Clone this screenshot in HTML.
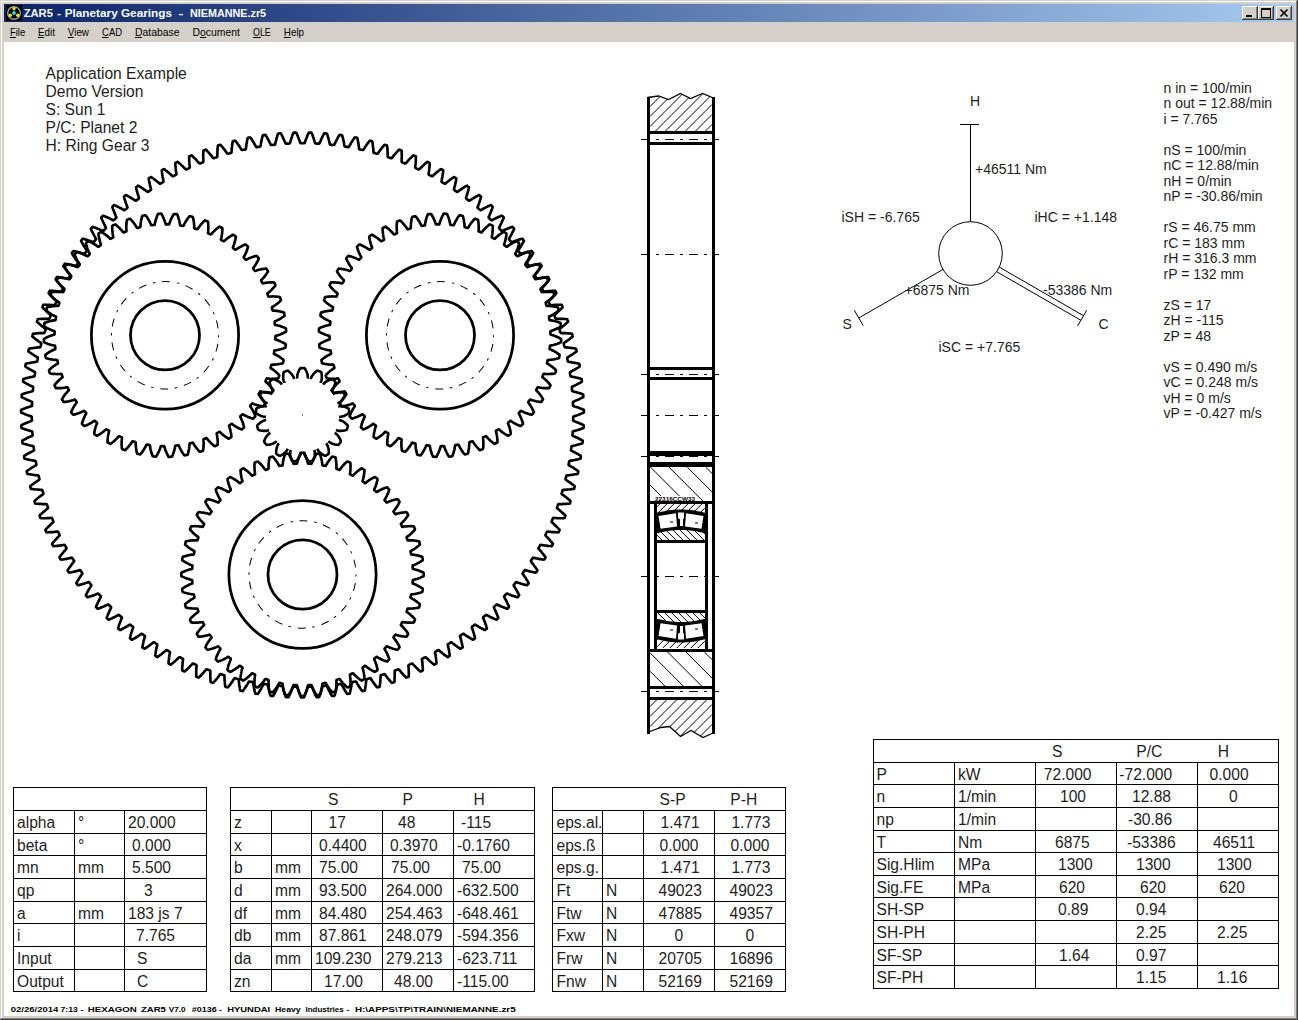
<!DOCTYPE html>
<html><head><meta charset="utf-8"><title>ZAR5 - Planetary Gearings</title><style>
html,body{margin:0;padding:0;}
body{width:1298px;height:1020px;position:relative;overflow:hidden;background:#fff;font-family:"Liberation Sans",sans-serif;}
</style></head><body>
<svg width="1298" height="1020" style="position:absolute;left:0;top:0">
<g font-family="Liberation Sans, sans-serif"><rect x="0" y="0" width="1298" height="1020" fill="#d4d0c8"/>
<rect x="1" y="1" width="1296" height="1" fill="#fff"/><rect x="1" y="1" width="1" height="1018" fill="#fff"/>
<rect x="1296" y="1" width="1" height="1018" fill="#808080"/><rect x="1" y="1018" width="1296" height="1" fill="#808080"/>
<rect x="1297" y="0" width="1" height="1020" fill="#404040"/><rect x="0" y="1019" width="1298" height="1" fill="#404040"/>
<defs><linearGradient id="tg" x1="0" x2="1" y1="0" y2="0"><stop offset="0" stop-color="#0a246a"/><stop offset="1" stop-color="#a6caf0"/></linearGradient></defs>
<rect x="4" y="4" width="1290" height="18" fill="url(#tg)"/>
<rect x="4" y="42" width="1290" height="974" fill="#fff"/>
<g transform="translate(6,5)"><rect width="16" height="16" fill="#000"/><circle cx="8" cy="8" r="6.3" fill="none" stroke="#a0a0a0" stroke-width="1.4"/><circle cx="8" cy="3.8" r="1.7" fill="#e8e800"/><circle cx="4.3" cy="10.2" r="1.7" fill="#e8e800"/><circle cx="11.7" cy="10.2" r="1.7" fill="#e8e800"/><circle cx="8" cy="8" r="1.9" fill="#20d8f8"/></g>
<text x="23.7" y="16.5" font-size="11.5" font-weight="bold" fill="#fff" textLength="29.2" lengthAdjust="spacingAndGlyphs">ZAR5</text>
<text x="57" y="16.5" font-size="11.5" font-weight="bold" fill="#fff" textLength="4" lengthAdjust="spacingAndGlyphs">-</text>
<text x="64.7" y="16.5" font-size="11.5" font-weight="bold" fill="#fff" textLength="107.3" lengthAdjust="spacingAndGlyphs">Planetary Gearings</text>
<text x="178.5" y="16.5" font-size="11.5" font-weight="bold" fill="#fff" textLength="4.9" lengthAdjust="spacingAndGlyphs">-</text>
<text x="189.9" y="16.5" font-size="11.5" font-weight="bold" fill="#fff" textLength="76.2" lengthAdjust="spacingAndGlyphs">NIEMANNE.zr5</text>
<rect x="1242" y="6" width="16" height="14" fill="#d4d0c8"/>
<rect x="1242" y="6" width="15" height="1" fill="#fff"/><rect x="1242" y="6" width="1" height="13" fill="#fff"/>
<rect x="1242" y="19" width="16" height="1" fill="#404040"/><rect x="1257" y="6" width="1" height="14" fill="#404040"/>
<rect x="1243" y="18" width="14" height="1" fill="#808080"/><rect x="1256" y="7" width="1" height="12" fill="#808080"/>
<rect x="1258" y="6" width="16" height="14" fill="#d4d0c8"/>
<rect x="1258" y="6" width="15" height="1" fill="#fff"/><rect x="1258" y="6" width="1" height="13" fill="#fff"/>
<rect x="1258" y="19" width="16" height="1" fill="#404040"/><rect x="1273" y="6" width="1" height="14" fill="#404040"/>
<rect x="1259" y="18" width="14" height="1" fill="#808080"/><rect x="1272" y="7" width="1" height="12" fill="#808080"/>
<rect x="1276" y="6" width="16" height="14" fill="#d4d0c8"/>
<rect x="1276" y="6" width="15" height="1" fill="#fff"/><rect x="1276" y="6" width="1" height="13" fill="#fff"/>
<rect x="1276" y="19" width="16" height="1" fill="#404040"/><rect x="1291" y="6" width="1" height="14" fill="#404040"/>
<rect x="1277" y="18" width="14" height="1" fill="#808080"/><rect x="1290" y="7" width="1" height="12" fill="#808080"/>
<rect x="1246" y="15" width="6" height="2" fill="#000"/>
<rect x="1261" y="8" width="9" height="9" fill="none" stroke="#000" stroke-width="1" transform="translate(.5,.5)"/><rect x="1261" y="8" width="9" height="2" fill="#000"/>
<path d="M1280.5,9.5 L1287.5,16.5 M1287.5,9.5 L1280.5,16.5" stroke="#000" stroke-width="1.6"/>
<text x="9.9" y="35.5" font-size="11" fill="#000" textLength="15.4" lengthAdjust="spacingAndGlyphs">File</text>
<rect x="9.9" y="37" width="5.9" height="1" fill="#000"/>
<text x="38" y="35.5" font-size="11" fill="#000" textLength="16.9" lengthAdjust="spacingAndGlyphs">Edit</text>
<rect x="38" y="37" width="5.8" height="1" fill="#000"/>
<text x="67.8" y="35.5" font-size="11" fill="#000" textLength="21.2" lengthAdjust="spacingAndGlyphs">View</text>
<rect x="67.8" y="37" width="5.9" height="1" fill="#000"/>
<text x="102.1" y="35.5" font-size="11" fill="#000" textLength="20" lengthAdjust="spacingAndGlyphs">CAD</text>
<rect x="102" y="37" width="6.5" height="1" fill="#000"/>
<text x="135" y="35.5" font-size="11" fill="#000" textLength="44.6" lengthAdjust="spacingAndGlyphs">Database</text>
<rect x="135" y="37" width="6.8" height="1" fill="#000"/>
<text x="192.5" y="35.5" font-size="11" fill="#000" textLength="47.5" lengthAdjust="spacingAndGlyphs">Document</text>
<rect x="200" y="37" width="6.1" height="1" fill="#000"/>
<text x="253" y="35.5" font-size="11" fill="#000" textLength="17.8" lengthAdjust="spacingAndGlyphs">OLE</text>
<rect x="253" y="37" width="7.7" height="1" fill="#000"/>
<text x="283.8" y="35.5" font-size="11" fill="#000" textLength="20.3" lengthAdjust="spacingAndGlyphs">Help</text>
<rect x="283.8" y="37" width="6.8" height="1" fill="#000"/></g>
<g transform="translate(302.5,415) scale(1,1.004) translate(-302.5,-415)"><path d="M302.1,144.3 300.8,144.3 300.3,144 299.9,142.9 299.7,142.2 299.3,141.1 299,140.4 298.6,139.3 298.3,138.6 297.9,137.5 297.6,136.8 297.1,135.8 296.8,135.1 296.3,134 296,133.6 295.4,133.7 295.1,133.7 294.5,133.7 294.2,133.7 293.6,133.7 293.3,134.1 292.9,135.2 292.6,135.9 292.2,137 292,137.7 291.6,138.8 291.3,139.5 291,140.6 290.8,141.3 290.4,142.4 290.2,143.2 289.9,144.2 289.4,144.6 288.1,144.7 287.3,144.7 286,144.8 285.5,144.5 285.1,143.4 284.8,142.7 284.3,141.7 284,141 283.5,139.9 283.2,139.3 282.7,138.2 282.4,137.5 281.9,136.5 281.5,135.8 281,134.8 280.6,134.4 280.1,134.5 279.7,134.5 279.2,134.5 278.8,134.6 278.3,134.6 278,135 277.6,136.1 277.4,136.8 277.1,138 276.8,138.7 276.5,139.8 276.3,140.5 276,141.7 275.8,142.4 275.6,143.5 275.4,144.2 275.2,145.3 274.7,145.7 273.4,145.9 272.6,146 271.3,146.1 270.7,145.8 270.3,144.8 269.9,144.1 269.4,143.1 269.1,142.4 268.6,141.4 268.2,140.7 267.6,139.7 267.3,139 266.7,138 266.3,137.3 265.7,136.3 265.3,136 264.8,136.1 264.4,136.2 263.9,136.2 263.6,136.3 263,136.4 262.7,136.8 262.4,137.9 262.2,138.6 262,139.8 261.8,140.5 261.5,141.6 261.4,142.4 261.1,143.5 261,144.3 260.8,145.4 260.7,146.1 260.5,147.2 260,147.7 258.7,147.9 257.9,148 256.7,148.2 256.1,148 255.5,147 255.2,146.3 254.6,145.3 254.2,144.6 253.7,143.7 253.3,143 252.7,142 252.2,141.4 251.6,140.4 251.2,139.7 250.5,138.8 250.2,138.5 249.6,138.6 249.3,138.6 248.7,138.7 248.4,138.8 247.9,138.9 247.6,139.3 247.4,140.5 247.2,141.2 247,142.4 246.9,143.1 246.7,144.3 246.5,145 246.4,146.2 246.3,146.9 246.1,148.1 246,148.8 245.9,149.9 245.5,150.4 244.2,150.7 243.4,150.8 242.2,151.1 241.6,150.9 241,149.9 240.6,149.3 240,148.3 239.6,147.7 238.9,146.7 238.5,146.1 237.8,145.1 237.4,144.5 236.7,143.6 236.2,143 235.5,142 235.1,141.8 234.6,141.9 234.3,142 233.7,142.1 233.4,142.2 232.9,142.3 232.6,142.7 232.5,143.9 232.4,144.7 232.2,145.8 232.1,146.6 232,147.7 231.9,148.5 231.8,149.6 231.7,150.4 231.6,151.5 231.6,152.3 231.5,153.4 231.1,153.9 229.9,154.2 229.1,154.5 227.9,154.8 227.2,154.6 226.6,153.7 226.2,153.1 225.5,152.1 225,151.5 224.4,150.6 223.9,150 223.2,149.1 222.7,148.5 222,147.6 221.5,147 220.7,146.1 220.3,145.8 219.8,146 219.5,146.1 218.9,146.3 218.6,146.4 218.1,146.5 217.9,147 217.8,148.1 217.7,148.9 217.6,150.1 217.5,150.8 217.5,152 217.4,152.7 217.4,153.9 217.4,154.7 217.3,155.8 217.3,156.5 217.3,157.7 216.9,158.2 215.7,158.6 214.9,158.9 213.8,159.3 213.1,159.1 212.4,158.2 212,157.6 211.3,156.7 210.8,156.1 210,155.3 209.5,154.7 208.8,153.8 208.3,153.2 207.5,152.4 207,151.8 206.2,150.9 205.7,150.7 205.2,150.9 204.9,151 204.4,151.2 204.1,151.3 203.5,151.5 203.4,152 203.3,153.2 203.3,153.9 203.3,155.1 203.2,155.9 203.2,157 203.2,157.8 203.3,158.9 203.3,159.7 203.3,160.8 203.3,161.6 203.4,162.7 203,163.2 201.9,163.7 201.1,164 199.9,164.5 199.3,164.4 198.5,163.5 198,162.9 197.3,162.1 196.8,161.5 196,160.7 195.5,160.1 194.7,159.3 194.1,158.8 193.3,158 192.7,157.4 191.9,156.6 191.4,156.4 191,156.6 190.6,156.8 190.1,157 189.8,157.1 189.3,157.3 189.1,157.8 189.2,159 189.2,159.7 189.2,160.9 189.2,161.7 189.3,162.8 189.3,163.6 189.4,164.7 189.5,165.5 189.6,166.6 189.7,167.4 189.8,168.5 189.4,169.1 188.3,169.6 187.5,169.9 186.4,170.5 185.8,170.4 185,169.6 184.4,169 183.6,168.2 183.1,167.7 182.3,166.9 181.7,166.4 180.9,165.6 180.3,165.1 179.4,164.3 178.8,163.8 177.9,163 177.5,162.9 177,163.1 176.7,163.3 176.2,163.5 175.9,163.7 175.4,163.9 175.3,164.4 175.3,165.5 175.4,166.3 175.5,167.5 175.6,168.2 175.7,169.4 175.8,170.1 175.9,171.3 176,172 176.2,173.2 176.3,173.9 176.5,175 176.2,175.6 175.1,176.2 174.3,176.6 173.2,177.2 172.6,177.1 171.7,176.4 171.2,175.8 170.3,175.1 169.8,174.6 168.9,173.8 168.3,173.3 167.4,172.6 166.8,172.1 165.9,171.4 165.3,170.9 164.4,170.2 163.9,170.1 163.4,170.3 163.1,170.5 162.7,170.8 162.4,170.9 161.9,171.2 161.8,171.7 161.9,172.9 162,173.6 162.2,174.8 162.3,175.5 162.5,176.7 162.6,177.4 162.8,178.6 162.9,179.3 163.2,180.4 163.3,181.2 163.6,182.3 163.3,182.8 162.2,183.5 161.5,183.9 160.4,184.6 159.8,184.6 158.9,183.8 158.3,183.4 157.4,182.7 156.8,182.2 155.9,181.5 155.3,181 154.4,180.3 153.8,179.9 152.8,179.2 152.2,178.8 151.2,178.1 150.7,178 150.3,178.3 150,178.5 149.5,178.8 149.2,179 148.8,179.3 148.7,179.7 148.9,180.9 149,181.7 149.3,182.8 149.4,183.5 149.7,184.7 149.8,185.4 150.1,186.5 150.3,187.3 150.6,188.4 150.8,189.1 151.1,190.2 150.8,190.8 149.8,191.5 149.1,192 148,192.7 147.4,192.7 146.5,192 145.9,191.6 145,190.9 144.3,190.5 143.4,189.8 142.8,189.4 141.8,188.8 141.1,188.4 140.2,187.7 139.5,187.3 138.5,186.7 138,186.6 137.6,186.9 137.3,187.2 136.9,187.5 136.6,187.7 136.1,188 136.1,188.5 136.3,189.6 136.5,190.4 136.8,191.5 137,192.3 137.3,193.4 137.5,194.1 137.9,195.2 138.1,195.9 138.4,197 138.7,197.7 139,198.8 138.8,199.4 137.8,200.2 137.1,200.7 136.1,201.5 135.5,201.5 134.6,200.9 133.9,200.5 133,199.9 132.3,199.5 131.3,198.9 130.7,198.5 129.7,197.9 129,197.5 128,196.9 127.3,196.6 126.3,196 125.8,196 125.4,196.3 125.1,196.5 124.7,196.9 124.4,197.1 124,197.4 124,197.9 124.3,199 124.5,199.8 124.9,200.9 125.1,201.6 125.5,202.7 125.7,203.4 126.1,204.5 126.4,205.2 126.8,206.3 127,207 127.5,208.1 127.3,208.7 126.3,209.5 125.7,210 124.7,210.9 124.1,211 123.1,210.4 122.5,210 121.5,209.4 120.8,209.1 119.8,208.5 119.1,208.2 118.1,207.7 117.4,207.3 116.3,206.8 115.6,206.5 114.6,206 114.1,205.9 113.7,206.3 113.4,206.5 113,206.9 112.8,207.1 112.4,207.5 112.4,208 112.8,209.1 113,209.8 113.4,210.9 113.7,211.6 114.1,212.7 114.4,213.4 114.9,214.5 115.2,215.2 115.6,216.2 115.9,216.9 116.4,217.9 116.3,218.6 115.4,219.4 114.8,220 113.8,220.9 113.2,221 112.2,220.5 111.5,220.1 110.5,219.6 109.8,219.3 108.8,218.8 108.1,218.5 107,218 106.3,217.7 105.3,217.3 104.5,217 103.5,216.6 103,216.5 102.6,216.9 102.3,217.2 102,217.6 101.7,217.8 101.3,218.2 101.3,218.7 101.8,219.8 102.1,220.5 102.6,221.5 102.9,222.2 103.4,223.3 103.7,224 104.2,225 104.5,225.7 105,226.7 105.4,227.4 105.9,228.4 105.8,229 105,229.9 104.4,230.5 103.5,231.5 102.9,231.6 101.9,231.2 101.2,230.9 100.1,230.4 99.4,230.1 98.4,229.7 97.6,229.4 96.6,229 95.8,228.7 94.8,228.3 94,228.1 92.9,227.7 92.4,227.7 92.1,228.1 91.8,228.4 91.5,228.8 91.2,229.1 90.9,229.5 90.9,230 91.4,231 91.8,231.7 92.3,232.7 92.7,233.4 93.2,234.4 93.6,235.1 94.1,236.1 94.5,236.8 95.1,237.8 95.4,238.4 96,239.4 96,240 95.1,241 94.6,241.6 93.8,242.6 93.2,242.8 92.1,242.4 91.4,242.1 90.3,241.7 89.6,241.5 88.5,241.1 87.8,240.9 86.7,240.5 86,240.3 84.9,240 84.1,239.8 83,239.4 82.5,239.5 82.2,239.9 82,240.2 81.6,240.6 81.4,240.9 81.1,241.3 81.1,241.8 81.7,242.8 82.1,243.5 82.7,244.5 83.1,245.2 83.6,246.1 84,246.8 84.7,247.8 85.1,248.4 85.7,249.4 86.1,250 86.8,250.9 86.7,251.6 86,252.6 85.4,253.3 84.7,254.3 84.1,254.5 83,254.1 82.3,253.9 81.2,253.6 80.5,253.4 79.4,253.1 78.6,252.9 77.5,252.6 76.8,252.4 75.6,252.1 74.9,251.9 73.7,251.7 73.3,251.8 72.9,252.2 72.7,252.5 72.4,252.9 72.2,253.2 71.9,253.7 72,254.1 72.6,255.1 73,255.8 73.7,256.8 74.1,257.4 74.8,258.4 75.2,259 75.8,259.9 76.3,260.5 77,261.5 77.4,262.1 78.1,263 78.1,263.6 77.4,264.6 76.9,265.3 76.2,266.4 75.7,266.7 74.6,266.4 73.8,266.2 72.7,265.9 72,265.7 70.9,265.5 70.1,265.3 69,265.1 68.2,265 67.1,264.7 66.3,264.6 65.2,264.4 64.7,264.5 64.4,265 64.2,265.3 63.9,265.7 63.7,266 63.4,266.5 63.6,267 64.2,267.9 64.7,268.5 65.4,269.5 65.8,270.1 66.5,271 67,271.6 67.7,272.5 68.2,273.1 68.9,274 69.4,274.6 70.1,275.4 70.2,276.1 69.5,277.2 69.1,277.9 68.5,279 67.9,279.3 66.8,279 66,278.9 64.9,278.7 64.2,278.5 63,278.4 62.3,278.2 61.1,278.1 60.4,278 59.2,277.8 58.5,277.7 57.3,277.6 56.8,277.7 56.6,278.2 56.4,278.5 56.1,279 55.9,279.3 55.7,279.8 55.8,280.2 56.6,281.1 57.1,281.8 57.8,282.7 58.3,283.2 59,284.1 59.5,284.7 60.3,285.6 60.8,286.1 61.6,287 62.1,287.5 62.9,288.3 62.9,289 62.4,290.1 62,290.8 61.4,292 60.8,292.3 59.7,292.1 59,292 57.8,291.9 57.1,291.8 55.9,291.6 55.2,291.6 54,291.5 53.3,291.4 52.1,291.3 51.3,291.3 50.2,291.2 49.7,291.3 49.5,291.8 49.3,292.2 49.1,292.6 48.9,293 48.7,293.4 48.9,293.9 49.6,294.8 50.1,295.4 50.9,296.2 51.5,296.8 52.2,297.6 52.8,298.2 53.6,299 54.1,299.5 54.9,300.3 55.5,300.8 56.3,301.6 56.4,302.2 55.9,303.4 55.5,304.2 55,305.3 54.5,305.7 53.4,305.6 52.6,305.5 51.5,305.4 50.7,305.4 49.6,305.3 48.8,305.3 47.6,305.2 46.9,305.2 45.7,305.2 44.9,305.2 43.8,305.2 43.3,305.3 43.1,305.8 43,306.2 42.8,306.7 42.6,307 42.4,307.5 42.6,307.9 43.4,308.8 44,309.3 44.8,310.1 45.4,310.7 46.2,311.5 46.8,312 47.6,312.7 48.2,313.3 49,314 49.6,314.5 50.5,315.2 50.6,315.9 50.2,317 49.9,317.8 49.4,319 48.9,319.4 47.8,319.3 47,319.3 45.9,319.3 45.1,319.3 44,319.3 43.2,319.3 42,319.3 41.3,319.3 40.1,319.4 39.3,319.4 38.2,319.5 37.7,319.7 37.5,320.2 37.4,320.5 37.2,321 37.1,321.3 36.9,321.9 37.2,322.3 38,323.1 38.6,323.6 39.5,324.4 40.1,324.9 40.9,325.6 41.5,326.1 42.4,326.8 43,327.3 43.9,328 44.5,328.5 45.4,329.1 45.6,329.8 45.2,331 44.9,331.8 44.5,333 44,333.4 42.9,333.4 42.2,333.4 41,333.4 40.3,333.5 39.1,333.5 38.3,333.6 37.2,333.7 36.4,333.7 35.3,333.8 34.5,333.9 33.3,334 32.9,334.3 32.7,334.8 32.6,335.1 32.5,335.6 32.4,336 32.2,336.5 32.5,336.9 33.4,337.7 34,338.1 34.9,338.9 35.5,339.3 36.4,340 37.1,340.5 38,341.2 38.6,341.6 39.5,342.2 40.2,342.7 41.1,343.3 41.3,343.9 41,345.1 40.8,345.9 40.4,347.2 40,347.6 38.8,347.7 38.1,347.7 37,347.8 36.2,347.9 35.1,348 34.3,348.1 33.1,348.3 32.4,348.4 31.2,348.5 30.5,348.7 29.3,348.9 28.9,349.1 28.8,349.6 28.7,350 28.6,350.5 28.5,350.8 28.4,351.4 28.6,351.8 29.6,352.5 30.2,352.9 31.2,353.6 31.8,354 32.7,354.7 33.4,355.1 34.3,355.7 35,356.1 36,356.7 36.6,357.1 37.6,357.7 37.8,358.3 37.6,359.5 37.4,360.3 37.1,361.6 36.7,362 35.6,362.2 34.8,362.3 33.7,362.4 32.9,362.6 31.8,362.7 31,362.9 29.9,363.1 29.2,363.2 28,363.5 27.3,363.6 26.1,363.9 25.7,364.1 25.6,364.7 25.5,365 25.4,365.6 25.4,365.9 25.3,366.4 25.6,366.8 26.6,367.5 27.2,367.9 28.2,368.5 28.9,368.9 29.9,369.5 30.5,369.9 31.5,370.4 32.2,370.8 33.2,371.4 33.8,371.7 34.8,372.2 35.1,372.8 34.9,374.1 34.8,374.9 34.6,376.1 34.2,376.6 33.1,376.8 32.3,377 31.2,377.2 30.5,377.3 29.3,377.6 28.6,377.8 27.5,378 26.7,378.2 25.6,378.5 24.9,378.7 23.7,379 23.3,379.3 23.3,379.9 23.2,380.2 23.2,380.8 23.1,381.1 23.1,381.6 23.4,382 24.4,382.6 25.1,383 26.1,383.5 26.8,383.9 27.8,384.4 28.5,384.8 29.5,385.3 30.2,385.6 31.2,386.1 31.9,386.4 32.9,386.9 33.2,387.5 33.1,388.7 33,389.6 32.9,390.8 32.5,391.3 31.4,391.6 30.7,391.8 29.5,392.1 28.8,392.3 27.7,392.6 27,392.8 25.9,393.1 25.1,393.3 24,393.7 23.3,393.9 22.2,394.3 21.8,394.6 21.8,395.2 21.7,395.5 21.7,396.1 21.7,396.4 21.6,397 22,397.3 23,397.8 23.7,398.2 24.8,398.7 25.5,399 26.5,399.5 27.2,399.8 28.3,400.3 29,400.6 30,401 30.7,401.3 31.8,401.7 32.1,402.2 32.1,403.5 32,404.3 32,405.6 31.6,406.1 30.5,406.4 29.8,406.7 28.7,407 28,407.2 26.9,407.6 26.2,407.9 25.1,408.3 24.4,408.5 23.3,408.9 22.6,409.2 21.5,409.7 21.1,410 21.1,410.5 21.1,410.9 21.1,411.4 21.1,411.8 21.1,412.3 21.4,412.7 22.5,413.1 23.2,413.4 24.3,413.9 25,414.2 26.1,414.6 26.8,414.9 27.9,415.3 28.6,415.5 29.7,415.9 30.4,416.1 31.5,416.5 31.8,417 31.8,418.3 31.8,419.1 31.9,420.4 31.5,420.9 30.5,421.3 29.7,421.6 28.7,422 28,422.2 26.9,422.7 26.2,423 25.1,423.4 24.4,423.7 23.4,424.2 22.7,424.5 21.6,425 21.3,425.4 21.3,425.9 21.3,426.3 21.3,426.8 21.3,427.2 21.4,427.7 21.7,428 22.8,428.4 23.6,428.7 24.6,429.1 25.4,429.3 26.5,429.7 27.2,429.9 28.3,430.3 29,430.5 30.1,430.8 30.8,431 31.9,431.3 32.3,431.8 32.4,433.1 32.5,433.9 32.6,435.2 32.2,435.7 31.2,436.2 30.5,436.4 29.5,436.9 28.8,437.2 27.7,437.7 27,438 26,438.6 25.3,438.9 24.3,439.4 23.6,439.8 22.6,440.3 22.2,440.7 22.3,441.2 22.3,441.6 22.4,442.1 22.4,442.5 22.5,443 22.9,443.3 24,443.7 24.7,443.9 25.8,444.2 26.6,444.4 27.7,444.7 28.4,444.9 29.5,445.2 30.3,445.4 31.4,445.6 32.1,445.8 33.2,446 33.7,446.5 33.8,447.8 33.9,448.6 34.1,449.9 33.8,450.4 32.8,450.9 32.1,451.3 31.1,451.8 30.4,452.1 29.4,452.7 28.7,453 27.7,453.6 27,454 26,454.6 25.4,455 24.4,455.6 24.1,456 24.1,456.5 24.2,456.9 24.3,457.4 24.3,457.7 24.4,458.3 24.8,458.6 26,458.8 26.7,459 27.8,459.3 28.6,459.5 29.7,459.7 30.5,459.8 31.6,460.1 32.3,460.2 33.5,460.4 34.2,460.5 35.3,460.7 35.8,461.2 36,462.4 36.1,463.2 36.4,464.5 36.1,465.1 35.1,465.6 34.5,466 33.5,466.6 32.8,466.9 31.8,467.5 31.2,467.9 30.2,468.6 29.6,469 28.6,469.6 28,470.1 27,470.7 26.7,471.1 26.8,471.6 26.9,472 27,472.5 27.1,472.9 27.2,473.4 27.6,473.7 28.8,473.9 29.5,474 30.7,474.2 31.4,474.3 32.6,474.5 33.3,474.6 34.5,474.8 35.2,474.9 36.3,475 37.1,475.1 38.2,475.2 38.7,475.7 39,476.9 39.2,477.7 39.5,478.9 39.2,479.5 38.3,480.1 37.7,480.5 36.7,481.2 36.1,481.6 35.1,482.2 34.5,482.7 33.6,483.4 32.9,483.8 32,484.5 31.4,485 30.5,485.7 30.2,486.1 30.3,486.6 30.4,487 30.6,487.5 30.7,487.8 30.8,488.3 31.2,488.6 32.4,488.7 33.2,488.8 34.3,489 35.1,489.1 36.2,489.2 37,489.2 38.1,489.3 38.9,489.4 40,489.5 40.8,489.5 41.9,489.6 42.4,490 42.8,491.2 43,492 43.4,493.2 43.2,493.8 42.2,494.5 41.6,494.9 40.7,495.6 40.1,496 39.2,496.7 38.6,497.2 37.7,497.9 37.1,498.4 36.2,499.2 35.6,499.7 34.7,500.4 34.5,500.9 34.6,501.4 34.8,501.7 34.9,502.2 35,502.6 35.2,503.1 35.6,503.3 36.8,503.4 37.6,503.4 38.7,503.5 39.5,503.6 40.7,503.6 41.4,503.6 42.6,503.7 43.3,503.7 44.5,503.7 45.2,503.7 46.4,503.7 46.9,504.1 47.3,505.3 47.6,506 48,507.2 47.9,507.9 47,508.6 46.4,509 45.5,509.8 44.9,510.3 44.1,511 43.5,511.5 42.6,512.3 42,512.8 41.2,513.6 40.6,514.1 39.8,514.9 39.6,515.4 39.8,515.9 39.9,516.2 40.1,516.7 40.2,517 40.4,517.5 40.9,517.7 42,517.8 42.8,517.8 44,517.8 44.7,517.8 45.9,517.8 46.7,517.8 47.8,517.7 48.6,517.7 49.7,517.6 50.5,517.6 51.6,517.5 52.1,517.9 52.6,519.1 52.9,519.8 53.4,521 53.3,521.6 52.5,522.4 51.9,522.9 51.1,523.7 50.5,524.2 49.7,525 49.1,525.5 48.3,526.3 47.8,526.9 47,527.7 46.4,528.3 45.6,529.1 45.4,529.6 45.7,530.1 45.8,530.4 46,530.9 46.2,531.2 46.4,531.7 46.9,531.9 48,531.8 48.8,531.8 50,531.7 50.7,531.7 51.9,531.6 52.7,531.6 53.8,531.5 54.6,531.4 55.7,531.3 56.4,531.2 57.6,531.1 58.1,531.4 58.7,532.5 59,533.3 59.6,534.4 59.5,535.1 58.7,535.9 58.2,536.4 57.4,537.2 56.8,537.8 56.1,538.6 55.5,539.2 54.8,540 54.3,540.6 53.5,541.5 53,542.1 52.3,543 52.1,543.4 52.3,543.9 52.5,544.2 52.7,544.7 52.9,545 53.2,545.5 53.6,545.6 54.8,545.5 55.6,545.5 56.7,545.4 57.5,545.3 58.6,545.1 59.4,545 60.5,544.9 61.3,544.8 62.4,544.6 63.2,544.5 64.3,544.3 64.8,544.6 65.4,545.7 65.9,546.4 66.5,547.5 66.4,548.2 65.7,549 65.2,549.6 64.4,550.4 63.9,551 63.2,551.9 62.7,552.5 62,553.4 61.5,554 60.8,554.9 60.3,555.5 59.6,556.5 59.5,556.9 59.7,557.4 59.9,557.7 60.2,558.2 60.4,558.5 60.7,558.9 61.1,559 62.3,558.9 63.1,558.8 64.2,558.6 65,558.5 66.1,558.3 66.9,558.1 68,557.9 68.7,557.8 69.8,557.5 70.6,557.4 71.7,557.1 72.3,557.4 72.9,558.4 73.4,559.1 74.1,560.2 74,560.9 73.3,561.7 72.9,562.3 72.2,563.2 71.7,563.8 71,564.8 70.6,565.4 69.9,566.3 69.4,566.9 68.8,567.9 68.3,568.5 67.7,569.5 67.6,570 67.9,570.4 68.1,570.7 68.4,571.2 68.6,571.5 68.9,571.9 69.4,572 70.5,571.8 71.3,571.6 72.4,571.4 73.2,571.2 74.3,571 75,570.8 76.1,570.5 76.9,570.3 78,570 78.7,569.8 79.8,569.5 80.4,569.7 81.1,570.8 81.6,571.4 82.3,572.5 82.4,573.1 81.7,574 81.2,574.7 80.6,575.6 80.2,576.2 79.5,577.2 79.1,577.8 78.5,578.8 78.1,579.4 77.5,580.4 77.1,581.1 76.5,582.1 76.4,582.6 76.7,583 76.9,583.3 77.3,583.7 77.5,584 77.8,584.4 78.3,584.5 79.4,584.2 80.2,584 81.3,583.7 82,583.5 83.1,583.2 83.9,583 85,582.6 85.7,582.4 86.8,582 87.5,581.8 88.6,581.4 89.2,581.6 89.9,582.6 90.5,583.3 91.3,584.3 91.3,584.9 90.7,585.9 90.3,586.5 89.7,587.5 89.3,588.1 88.7,589.1 88.3,589.8 87.8,590.8 87.4,591.4 86.9,592.5 86.5,593.2 86,594.2 85.9,594.7 86.2,595.1 86.5,595.4 86.8,595.8 87,596.1 87.4,596.5 87.9,596.5 89,596.1 89.7,595.9 90.8,595.5 91.6,595.3 92.7,594.9 93.4,594.7 94.4,594.3 95.2,594 96.2,593.6 96.9,593.3 98,592.9 98.6,593 99.4,594 100,594.6 100.8,595.5 100.9,596.2 100.3,597.2 100,597.8 99.4,598.8 99.1,599.5 98.5,600.5 98.2,601.2 97.7,602.2 97.4,602.9 96.9,604 96.5,604.7 96.1,605.8 96,606.2 96.4,606.6 96.6,606.9 97,607.3 97.2,607.6 97.6,607.9 98.1,607.9 99.2,607.5 99.9,607.3 101,606.8 101.7,606.6 102.8,606.1 103.5,605.8 104.5,605.4 105.2,605 106.3,604.6 107,604.3 108,603.8 108.6,603.9 109.5,604.8 110.1,605.4 111,606.3 111.1,606.9 110.6,607.9 110.3,608.6 109.8,609.6 109.5,610.3 109,611.4 108.7,612.1 108.2,613.1 107.9,613.9 107.5,614.9 107.2,615.6 106.8,616.7 106.8,617.2 107.2,617.6 107.4,617.9 107.8,618.2 108.1,618.5 108.5,618.8 108.9,618.8 110,618.3 110.7,618 111.8,617.6 112.5,617.2 113.5,616.7 114.2,616.4 115.2,615.9 115.9,615.5 116.9,615 117.6,614.6 118.6,614.1 119.2,614.2 120.1,615.1 120.8,615.6 121.7,616.5 121.9,617.1 121.4,618.1 121.1,618.8 120.7,619.9 120.4,620.6 120,621.7 119.7,622.4 119.3,623.5 119.1,624.2 118.7,625.3 118.5,626 118.1,627.1 118.1,627.6 118.5,628 118.8,628.2 119.2,628.6 119.5,628.8 119.9,629.1 120.4,629.1 121.4,628.6 122.1,628.2 123.1,627.7 123.8,627.3 124.8,626.8 125.5,626.4 126.5,625.8 127.1,625.4 128.1,624.8 128.8,624.4 129.7,623.8 130.4,623.9 131.3,624.7 132,625.2 133,626 133.2,626.7 132.8,627.7 132.5,628.4 132.2,629.5 131.9,630.2 131.6,631.3 131.3,632 131,633.1 130.8,633.9 130.5,635 130.3,635.8 130,636.9 130,637.4 130.4,637.7 130.7,637.9 131.1,638.2 131.4,638.5 131.8,638.8 132.3,638.7 133.3,638.1 134,637.7 135,637.1 135.7,636.7 136.7,636.1 137.3,635.7 138.3,635.1 138.9,634.7 139.8,634.1 140.5,633.6 141.4,633 142,633 143.1,633.7 143.7,634.2 144.8,635 145,635.6 144.7,636.7 144.4,637.4 144.1,638.5 143.9,639.2 143.6,640.3 143.4,641.1 143.2,642.2 143,642.9 142.7,644.1 142.6,644.8 142.3,646 142.4,646.5 142.8,646.8 143.1,647 143.6,647.3 143.9,647.5 144.3,647.8 144.8,647.7 145.8,647 146.4,646.6 147.4,646 148,645.5 149,644.9 149.6,644.4 150.5,643.7 151.1,643.3 152,642.6 152.6,642.1 153.5,641.4 154.2,641.4 155.2,642.1 155.9,642.6 157,643.3 157.3,643.9 157,645 156.8,645.7 156.6,646.8 156.4,647.5 156.2,648.7 156,649.4 155.8,650.5 155.7,651.3 155.5,652.5 155.4,653.2 155.2,654.4 155.3,654.9 155.7,655.1 156,655.3 156.5,655.6 156.8,655.8 157.3,656.1 157.7,655.9 158.7,655.2 159.3,654.8 160.2,654.1 160.9,653.6 161.8,652.9 162.4,652.4 163.2,651.7 163.8,651.2 164.7,650.5 165.3,650 166.1,649.2 166.8,649.2 167.9,649.8 168.6,650.2 169.7,650.9 170,651.4 169.8,652.6 169.6,653.3 169.4,654.4 169.3,655.2 169.1,656.3 169,657.1 168.9,658.2 168.8,659 168.7,660.1 168.6,660.9 168.5,662.1 168.6,662.5 169.1,662.8 169.4,663 169.9,663.2 170.2,663.4 170.7,663.6 171.1,663.5 172,662.7 172.6,662.2 173.5,661.5 174.1,661 175,660.2 175.5,659.7 176.4,659 176.9,658.4 177.8,657.7 178.3,657.1 179.1,656.3 179.8,656.3 180.9,656.8 181.6,657.2 182.8,657.8 183.1,658.3 182.9,659.4 182.8,660.2 182.7,661.3 182.6,662.1 182.5,663.2 182.5,664 182.4,665.1 182.3,665.9 182.2,667.1 182.2,667.8 182.2,669 182.3,669.5 182.8,669.7 183.1,669.9 183.6,670.1 183.9,670.2 184.4,670.5 184.9,670.3 185.7,669.5 186.3,669 187.2,668.2 187.7,667.6 188.5,666.8 189.1,666.3 189.9,665.5 190.4,664.9 191.2,664.1 191.7,663.6 192.5,662.7 193.1,662.6 194.3,663.1 195,663.4 196.2,663.9 196.6,664.5 196.5,665.6 196.4,666.4 196.3,667.5 196.3,668.3 196.3,669.4 196.2,670.2 196.2,671.3 196.2,672.1 196.2,673.3 196.2,674 196.2,675.2 196.4,675.7 196.9,675.9 197.2,676 197.7,676.2 198.1,676.3 198.6,676.5 199,676.3 199.8,675.5 200.4,674.9 201.2,674.1 201.7,673.5 202.5,672.7 203,672.1 203.7,671.3 204.2,670.7 205,669.8 205.5,669.2 206.2,668.4 206.8,668.2 208,668.7 208.8,668.9 210,669.4 210.3,669.9 210.3,671 210.3,671.8 210.3,672.9 210.3,673.7 210.3,674.8 210.3,675.6 210.4,676.8 210.4,677.5 210.5,678.7 210.5,679.5 210.6,680.6 210.8,681.1 211.3,681.2 211.6,681.4 212.1,681.5 212.5,681.6 213,681.8 213.4,681.6 214.2,680.7 214.7,680.1 215.5,679.2 216,678.7 216.7,677.8 217.2,677.2 217.9,676.3 218.3,675.7 219,674.8 219.5,674.2 220.1,673.2 220.8,673.1 222,673.4 222.8,673.7 224,674.1 224.4,674.6 224.4,675.7 224.5,676.4 224.5,677.6 224.6,678.3 224.6,679.5 224.7,680.2 224.8,681.4 224.9,682.2 225,683.3 225.1,684.1 225.2,685.2 225.4,685.7 226,685.8 226.3,685.9 226.8,686.1 227.2,686.2 227.7,686.3 228.1,686.1 228.8,685.1 229.3,684.5 230,683.6 230.5,683 231.2,682.1 231.6,681.4 232.3,680.5 232.7,679.9 233.3,678.9 233.8,678.3 234.4,677.3 235,677.1 236.2,677.4 237,677.7 238.2,678 238.7,678.4 238.8,679.6 238.8,680.3 239,681.4 239.1,682.2 239.2,683.3 239.3,684.1 239.5,685.2 239.6,686 239.8,687.1 239.9,687.9 240.1,689.1 240.3,689.5 240.9,689.6 241.2,689.7 241.7,689.8 242.1,689.9 242.6,690 243,689.7 243.7,688.8 244.1,688.1 244.8,687.2 245.2,686.5 245.9,685.6 246.3,684.9 246.9,683.9 247.3,683.3 247.9,682.3 248.2,681.7 248.8,680.7 249.4,680.4 250.6,680.7 251.5,680.8 252.7,681.1 253.2,681.5 253.3,682.6 253.4,683.4 253.6,684.5 253.7,685.3 253.9,686.4 254.1,687.1 254.3,688.3 254.5,689 254.7,690.2 254.9,690.9 255.2,692.1 255.4,692.5 256,692.6 256.3,692.6 256.8,692.7 257.2,692.8 257.7,692.8 258.1,692.5 258.7,691.6 259.1,690.9 259.7,689.9 260.1,689.2 260.7,688.2 261.1,687.6 261.6,686.6 262,685.9 262.5,684.9 262.9,684.2 263.4,683.2 264,682.9 265.2,683.1 266.1,683.2 267.3,683.4 267.8,683.8 268,684.9 268.2,685.7 268.4,686.8 268.6,687.5 268.8,688.6 269,689.4 269.3,690.5 269.5,691.2 269.8,692.4 270,693.1 270.4,694.2 270.6,694.6 271.2,694.7 271.5,694.7 272.1,694.8 272.4,694.8 273,694.9 273.3,694.6 273.9,693.5 274.3,692.9 274.8,691.8 275.2,691.1 275.7,690.1 276,689.4 276.5,688.4 276.9,687.7 277.3,686.7 277.6,686 278.1,684.9 278.7,684.6 279.9,684.7 280.8,684.8 282,684.9 282.5,685.3 282.8,686.4 283,687.1 283.3,688.2 283.5,689 283.8,690.1 284.1,690.8 284.4,691.9 284.6,692.6 285,693.7 285.3,694.5 285.7,695.6 286,695.9 286.5,696 286.9,696 287.4,696 287.8,696 288.3,696.1 288.6,695.7 289.2,694.7 289.5,694 290,692.9 290.3,692.2 290.8,691.2 291.1,690.5 291.5,689.4 291.8,688.7 292.2,687.6 292.5,686.9 292.9,685.9 293.4,685.5 294.7,685.6 295.5,685.6 296.8,685.6 297.3,686 297.7,687.1 297.9,687.8 298.2,688.9 298.5,689.6 298.9,690.7 299.1,691.4 299.5,692.5 299.8,693.2 300.3,694.3 300.6,695 301,696.1 301.3,696.4 301.9,696.4 302.2,696.4 302.8,696.4 303.1,696.4 303.7,696.4 304,696.1 304.4,695 304.7,694.3 305.2,693.2 305.5,692.5 305.9,691.4 306.1,690.7 306.5,689.6 306.8,688.9 307.1,687.8 307.3,687.1 307.7,686 308.2,685.6 309.5,685.6 310.3,685.6 311.6,685.5 312.1,685.9 312.5,686.9 312.8,687.6 313.2,688.7 313.5,689.4 313.9,690.5 314.2,691.2 314.7,692.2 315,692.9 315.5,694 315.8,694.7 316.4,695.7 316.7,696.1 317.2,696 317.6,696 318.1,696 318.5,696 319,695.9 319.3,695.6 319.7,694.5 320,693.7 320.4,692.6 320.6,691.9 320.9,690.8 321.2,690.1 321.5,689 321.7,688.2 322,687.1 322.2,686.4 322.5,685.3 323,684.9 324.2,684.8 325.1,684.7 326.3,684.6 326.9,684.9 327.4,686 327.7,686.7 328.1,687.7 328.5,688.4 329,689.4 329.3,690.1 329.8,691.1 330.2,691.8 330.7,692.9 331.1,693.5 331.7,694.6 332,694.9 332.6,694.8 332.9,694.8 333.5,694.7 333.8,694.7 334.4,694.6 334.6,694.2 335,693.1 335.2,692.4 335.5,691.2 335.7,690.5 336,689.4 336.2,688.6 336.4,687.5 336.6,686.8 336.8,685.7 337,684.9 337.2,683.8 337.7,683.4 338.9,683.2 339.8,683.1 341,682.9 341.6,683.2 342.1,684.2 342.5,684.9 343,685.9 343.4,686.6 343.9,687.6 344.3,688.2 344.9,689.2 345.3,689.9 345.9,690.9 346.3,691.6 346.9,692.5 347.3,692.8 347.8,692.8 348.2,692.7 348.7,692.6 349,692.6 349.6,692.5 349.8,692.1 350.1,690.9 350.3,690.2 350.5,689 350.7,688.3 350.9,687.1 351.1,686.4 351.3,685.3 351.4,684.5 351.6,683.4 351.7,682.6 351.8,681.5 352.3,681.1 353.5,680.8 354.4,680.7 355.6,680.4 356.2,680.7 356.8,681.7 357.1,682.3 357.7,683.3 358.1,683.9 358.7,684.9 359.1,685.6 359.8,686.5 360.2,687.2 360.9,688.1 361.3,688.8 362,689.7 362.4,690 362.9,689.9 363.3,689.8 363.8,689.7 364.1,689.6 364.7,689.5 364.9,689.1 365.1,687.9 365.2,687.1 365.4,686 365.5,685.2 365.7,684.1 365.8,683.3 365.9,682.2 366,681.4 366.2,680.3 366.2,679.6 366.3,678.4 366.8,678 368,677.7 368.8,677.4 370,677.1 370.6,677.3 371.2,678.3 371.7,678.9 372.3,679.9 372.7,680.5 373.4,681.4 373.8,682.1 374.5,683 375,683.6 375.7,684.5 376.2,685.1 376.9,686.1 377.3,686.3 377.8,686.2 378.2,686.1 378.7,685.9 379,685.8 379.6,685.7 379.8,685.2 379.9,684.1 380,683.3 380.1,682.2 380.2,681.4 380.3,680.2 380.4,679.5 380.4,678.3 380.5,677.6 380.5,676.4 380.6,675.7 380.6,674.6 381,674.1 382.2,673.7 383,673.4 384.2,673.1 384.9,673.2 385.5,674.2 386,674.8 386.7,675.7 387.1,676.3 387.8,677.2 388.3,677.8 389,678.7 389.5,679.2 390.3,680.1 390.8,680.7 391.6,681.6 392,681.8 392.5,681.6 392.9,681.5 393.4,681.4 393.7,681.2 394.2,681.1 394.4,680.6 394.5,679.5 394.5,678.7 394.6,677.5 394.6,676.8 394.7,675.6 394.7,674.8 394.7,673.7 394.7,672.9 394.7,671.8 394.7,671 394.7,669.9 395,669.4 396.2,668.9 397,668.7 398.2,668.2 398.8,668.4 399.5,669.2 400,669.8 400.8,670.7 401.3,671.3 402,672.1 402.5,672.7 403.3,673.5 403.8,674.1 404.6,674.9 405.2,675.5 406,676.3 406.4,676.5 406.9,676.3 407.3,676.2 407.8,676 408.1,675.9 408.6,675.7 408.8,675.2 408.8,674 408.8,673.3 408.8,672.1 408.8,671.3 408.8,670.2 408.7,669.4 408.7,668.3 408.7,667.5 408.6,666.4 408.5,665.6 408.4,664.5 408.8,663.9 410,663.4 410.7,663.1 411.9,662.6 412.5,662.7 413.3,663.6 413.8,664.1 414.6,664.9 415.1,665.5 415.9,666.3 416.5,666.8 417.3,667.6 417.8,668.2 418.7,669 419.3,669.5 420.1,670.3 420.6,670.5 421.1,670.2 421.4,670.1 421.9,669.9 422.2,669.7 422.7,669.5 422.8,669 422.8,667.8 422.8,667.1 422.7,665.9 422.6,665.1 422.5,664 422.5,663.2 422.4,662.1 422.3,661.3 422.2,660.2 422.1,659.4 421.9,658.3 422.2,657.8 423.4,657.2 424.1,656.8 425.2,656.3 425.9,656.3 426.7,657.1 427.2,657.7 428.1,658.4 428.6,659 429.5,659.7 430,660.2 430.9,661 431.5,661.5 432.4,662.2 433,662.7 433.9,663.5 434.3,663.6 434.8,663.4 435.1,663.2 435.6,663 435.9,662.8 436.4,662.5 436.5,662.1 436.4,660.9 436.3,660.1 436.2,659 436.1,658.2 436,657.1 435.9,656.3 435.7,655.2 435.6,654.4 435.4,653.3 435.2,652.6 435,651.4 435.3,650.9 436.4,650.2 437.1,649.8 438.2,649.2 438.9,649.2 439.7,650 440.3,650.5 441.2,651.2 441.8,651.7 442.6,652.4 443.2,652.9 444.1,653.6 444.8,654.1 445.7,654.8 446.3,655.2 447.3,655.9 447.7,656.1 448.2,655.8 448.5,655.6 449,655.3 449.3,655.1 449.7,654.9 449.8,654.4 449.6,653.2 449.5,652.5 449.3,651.3 449.2,650.5 449,649.4 448.8,648.7 448.6,647.5 448.4,646.8 448.2,645.7 448,645 447.7,643.9 448,643.3 449.1,642.6 449.8,642.1 450.8,641.4 451.5,641.4 452.4,642.1 453,642.6 453.9,643.3 454.5,643.7 455.4,644.4 456,644.9 457,645.5 457.6,646 458.6,646.6 459.2,647 460.2,647.7 460.7,647.8 461.1,647.5 461.4,647.3 461.9,647 462.2,646.8 462.6,646.5 462.7,646 462.4,644.8 462.3,644.1 462,642.9 461.8,642.2 461.6,641.1 461.4,640.3 461.1,639.2 460.9,638.5 460.6,637.4 460.3,636.7 460,635.6 460.2,635 461.3,634.2 461.9,633.7 463,633 463.6,633 464.5,633.6 465.2,634.1 466.1,634.7 466.7,635.1 467.7,635.7 468.3,636.1 469.3,636.7 470,637.1 471,637.7 471.7,638.1 472.7,638.7 473.2,638.8 473.6,638.5 473.9,638.2 474.3,637.9 474.6,637.7 475,637.4 475,636.9 474.7,635.8 474.5,635 474.2,633.9 474,633.1 473.7,632 473.4,631.3 473.1,630.2 472.8,629.5 472.5,628.4 472.2,627.7 471.8,626.7 472,626 473,625.2 473.7,624.7 474.6,623.9 475.3,623.8 476.2,624.4 476.9,624.8 477.9,625.4 478.5,625.8 479.5,626.4 480.2,626.8 481.2,627.3 481.9,627.7 482.9,628.2 483.6,628.6 484.6,629.1 485.1,629.1 485.5,628.8 485.8,628.6 486.2,628.2 486.5,628 486.9,627.6 486.9,627.1 486.5,626 486.3,625.3 485.9,624.2 485.7,623.5 485.3,622.4 485,621.7 484.6,620.6 484.3,619.9 483.9,618.8 483.6,618.1 483.1,617.1 483.3,616.5 484.2,615.6 484.9,615.1 485.8,614.2 486.4,614.1 487.4,614.6 488.1,615 489.1,615.5 489.8,615.9 490.8,616.4 491.5,616.7 492.5,617.2 493.2,617.6 494.3,618 495,618.3 496.1,618.8 496.5,618.8 496.9,618.5 497.2,618.2 497.6,617.9 497.8,617.6 498.2,617.2 498.2,616.7 497.8,615.6 497.5,614.9 497.1,613.9 496.8,613.1 496.3,612.1 496,611.4 495.5,610.3 495.2,609.6 494.7,608.6 494.4,607.9 493.9,606.9 494,606.3 494.9,605.4 495.5,604.8 496.4,603.9 497,603.8 498,604.3 498.7,604.6 499.8,605 500.5,605.4 501.5,605.8 502.2,606.1 503.3,606.6 504,606.8 505.1,607.3 505.8,607.5 506.9,607.9 507.4,607.9 507.8,607.6 508,607.3 508.4,606.9 508.6,606.6 509,606.2 508.9,605.8 508.5,604.7 508.1,604 507.6,602.9 507.3,602.2 506.8,601.2 506.5,600.5 505.9,599.5 505.6,598.8 505,597.8 504.7,597.2 504.1,596.2 504.2,595.5 505,594.6 505.6,594 506.4,593 507,592.9 508.1,593.3 508.8,593.6 509.8,594 510.6,594.3 511.6,594.7 512.3,594.9 513.4,595.3 514.2,595.5 515.3,595.9 516,596.1 517.1,596.5 517.6,596.5 518,596.1 518.2,595.8 518.5,595.4 518.8,595.1 519.1,594.7 519,594.2 518.5,593.2 518.1,592.5 517.6,591.4 517.2,590.8 516.7,589.8 516.3,589.1 515.7,588.1 515.3,587.5 514.7,586.5 514.3,585.9 513.7,584.9 513.7,584.3 514.5,583.3 515.1,582.6 515.8,581.6 516.4,581.4 517.5,581.8 518.2,582 519.3,582.4 520,582.6 521.1,583 521.9,583.2 523,583.5 523.7,583.7 524.8,584 525.6,584.2 526.7,584.5 527.2,584.4 527.5,584 527.7,583.7 528.1,583.3 528.3,583 528.6,582.6 528.5,582.1 527.9,581.1 527.5,580.4 526.9,579.4 526.5,578.8 525.9,577.8 525.5,577.2 524.8,576.2 524.4,575.6 523.8,574.7 523.3,574 522.6,573.1 522.7,572.5 523.4,571.4 523.9,570.8 524.6,569.7 525.2,569.5 526.3,569.8 527,570 528.1,570.3 528.9,570.5 530,570.8 530.7,571 531.8,571.2 532.6,571.4 533.7,571.6 534.5,571.8 535.6,572 536.1,571.9 536.4,571.5 536.6,571.2 536.9,570.7 537.1,570.4 537.4,570 537.3,569.5 536.7,568.5 536.2,567.9 535.6,566.9 535.1,566.3 534.4,565.4 534,564.8 533.3,563.8 532.8,563.2 532.1,562.3 531.7,561.7 531,560.9 530.9,560.2 531.6,559.1 532.1,558.4 532.7,557.4 533.3,557.1 534.4,557.4 535.2,557.5 536.3,557.8 537,557.9 538.1,558.1 538.9,558.3 540,558.5 540.8,558.6 541.9,558.8 542.7,558.9 543.9,559 544.3,558.9 544.6,558.5 544.8,558.2 545.1,557.7 545.3,557.4 545.5,556.9 545.4,556.5 544.7,555.5 544.2,554.9 543.5,554 543,553.4 542.3,552.5 541.8,551.9 541.1,551 540.6,550.4 539.8,549.6 539.3,549 538.6,548.2 538.5,547.5 539.1,546.4 539.6,545.7 540.2,544.6 540.7,544.3 541.8,544.5 542.6,544.6 543.7,544.8 544.5,544.9 545.6,545 546.4,545.1 547.5,545.3 548.3,545.4 549.4,545.5 550.2,545.5 551.4,545.6 551.8,545.5 552.1,545 552.3,544.7 552.5,544.2 552.7,543.9 552.9,543.4 552.7,543 552,542.1 551.5,541.5 550.7,540.6 550.2,540 549.5,539.2 548.9,538.6 548.2,537.8 547.6,537.2 546.8,536.4 546.3,535.9 545.5,535.1 545.4,534.4 546,533.3 546.3,532.5 546.9,531.4 547.4,531.1 548.6,531.2 549.3,531.3 550.4,531.4 551.2,531.5 552.3,531.6 553.1,531.6 554.3,531.7 555,531.7 556.2,531.8 557,531.8 558.1,531.9 558.6,531.7 558.8,531.2 559,530.9 559.2,530.4 559.3,530.1 559.6,529.6 559.4,529.1 558.6,528.3 558,527.7 557.2,526.9 556.7,526.3 555.9,525.5 555.3,525 554.5,524.2 553.9,523.7 553.1,522.9 552.5,522.4 551.7,521.6 551.6,521 552.1,519.8 552.4,519.1 552.9,517.9 553.4,517.5 554.5,517.6 555.3,517.6 556.4,517.7 557.2,517.7 558.3,517.8 559.1,517.8 560.3,517.8 561,517.8 562.2,517.8 563,517.8 564.1,517.7 564.6,517.5 564.8,517 564.9,516.7 565.1,516.2 565.2,515.9 565.4,515.4 565.2,514.9 564.4,514.1 563.8,513.6 563,512.8 562.4,512.3 561.5,511.5 560.9,511 560.1,510.3 559.5,509.8 558.6,509 558,508.6 557.1,507.9 557,507.2 557.4,506 557.7,505.3 558.1,504.1 558.6,503.7 559.8,503.7 560.5,503.7 561.7,503.7 562.4,503.7 563.6,503.6 564.3,503.6 565.5,503.6 566.3,503.5 567.4,503.4 568.2,503.4 569.4,503.3 569.8,503.1 570,502.6 570.1,502.2 570.2,501.7 570.4,501.4 570.5,500.9 570.3,500.4 569.4,499.7 568.8,499.2 567.9,498.4 567.3,497.9 566.4,497.2 565.8,496.7 564.9,496 564.3,495.6 563.4,494.9 562.8,494.5 561.8,493.8 561.6,493.2 562,492 562.2,491.2 562.6,490 563.1,489.6 564.2,489.5 565,489.5 566.1,489.4 566.9,489.3 568,489.2 568.8,489.2 569.9,489.1 570.7,489 571.8,488.8 572.6,488.7 573.8,488.6 574.2,488.3 574.3,487.8 574.4,487.5 574.6,487 574.7,486.6 574.8,486.1 574.5,485.7 573.6,485 573,484.5 572.1,483.8 571.4,483.4 570.5,482.7 569.9,482.2 568.9,481.6 568.3,481.2 567.3,480.5 566.7,480.1 565.8,479.5 565.5,478.9 565.8,477.7 566,476.9 566.3,475.7 566.8,475.2 567.9,475.1 568.7,475 569.8,474.9 570.5,474.8 571.7,474.6 572.4,474.5 573.6,474.3 574.3,474.2 575.5,474 576.2,473.9 577.4,473.7 577.8,473.4 577.9,472.9 578,472.5 578.1,472 578.2,471.6 578.3,471.1 578,470.7 577,470.1 576.4,469.6 575.4,469 574.8,468.6 573.8,467.9 573.2,467.5 572.2,466.9 571.5,466.6 570.5,466 569.9,465.6 568.9,465.1 568.6,464.5 568.9,463.2 569,462.4 569.2,461.2 569.7,460.7 570.8,460.5 571.5,460.4 572.7,460.2 573.4,460.1 574.5,459.8 575.3,459.7 576.4,459.5 577.2,459.3 578.3,459 579,458.8 580.2,458.6 580.6,458.3 580.7,457.7 580.7,457.4 580.8,456.9 580.9,456.5 580.9,456 580.6,455.6 579.6,455 579,454.6 578,454 577.3,453.6 576.3,453 575.6,452.7 574.6,452.1 573.9,451.8 572.9,451.3 572.2,450.9 571.2,450.4 570.9,449.9 571.1,448.6 571.2,447.8 571.3,446.5 571.8,446 572.9,445.8 573.6,445.6 574.7,445.4 575.5,445.2 576.6,444.9 577.3,444.7 578.4,444.4 579.2,444.2 580.3,443.9 581,443.7 582.1,443.3 582.5,443 582.6,442.5 582.6,442.1 582.7,441.6 582.7,441.2 582.8,440.7 582.4,440.3 581.4,439.8 580.7,439.4 579.7,438.9 579,438.6 578,438 577.3,437.7 576.2,437.2 575.5,436.9 574.5,436.4 573.8,436.2 572.8,435.7 572.4,435.2 572.5,433.9 572.6,433.1 572.7,431.8 573.1,431.3 574.2,431 574.9,430.8 576,430.5 576.7,430.3 577.8,429.9 578.5,429.7 579.6,429.3 580.4,429.1 581.4,428.7 582.2,428.4 583.3,428 583.6,427.7 583.7,427.2 583.7,426.8 583.7,426.3 583.7,425.9 583.7,425.4 583.4,425 582.3,424.5 581.6,424.2 580.6,423.7 579.9,423.4 578.8,423 578.1,422.7 577,422.2 576.3,422 575.3,421.6 574.5,421.3 573.5,420.9 573.1,420.4 573.2,419.1 573.2,418.3 573.2,417 573.5,416.5 574.6,416.1 575.3,415.9 576.4,415.5 577.1,415.3 578.2,414.9 578.9,414.6 580,414.2 580.7,413.9 581.8,413.4 582.5,413.1 583.6,412.7 583.9,412.3 583.9,411.8 583.9,411.4 583.9,410.9 583.9,410.5 583.9,410 583.5,409.7 582.4,409.2 581.7,408.9 580.6,408.5 579.9,408.3 578.8,407.9 578.1,407.6 577,407.2 576.3,407 575.2,406.7 574.5,406.4 573.4,406.1 573,405.6 573,404.3 572.9,403.5 572.9,402.2 573.2,401.7 574.3,401.3 575,401 576,400.6 576.7,400.3 577.8,399.8 578.5,399.5 579.5,399 580.2,398.7 581.3,398.2 582,397.8 583,397.3 583.4,397 583.3,396.4 583.3,396.1 583.3,395.5 583.2,395.2 583.2,394.6 582.8,394.3 581.7,393.9 581,393.7 579.9,393.3 579.1,393.1 578,392.8 577.3,392.6 576.2,392.3 575.5,392.1 574.3,391.8 573.6,391.6 572.5,391.3 572.1,390.8 572,389.6 571.9,388.7 571.8,387.5 572.1,386.9 573.1,386.4 573.8,386.1 574.8,385.6 575.5,385.3 576.5,384.8 577.2,384.4 578.2,383.9 578.9,383.5 579.9,383 580.6,382.6 581.6,382 581.9,381.6 581.9,381.1 581.8,380.8 581.8,380.2 581.7,379.9 581.7,379.3 581.3,379 580.1,378.7 579.4,378.5 578.3,378.2 577.5,378 576.4,377.8 575.7,377.6 574.5,377.3 573.8,377.2 572.7,377 571.9,376.8 570.8,376.6 570.4,376.1 570.2,374.9 570.1,374.1 569.9,372.8 570.2,372.2 571.2,371.7 571.8,371.4 572.8,370.8 573.5,370.4 574.5,369.9 575.1,369.5 576.1,368.9 576.8,368.5 577.8,367.9 578.4,367.5 579.4,366.8 579.7,366.4 579.6,365.9 579.6,365.6 579.5,365 579.4,364.7 579.3,364.1 578.9,363.9 577.7,363.6 577,363.5 575.8,363.2 575.1,363.1 574,362.9 573.2,362.7 572.1,362.6 571.3,362.4 570.2,362.3 569.4,362.2 568.3,362 567.9,361.6 567.6,360.3 567.4,359.5 567.2,358.3 567.4,357.7 568.4,357.1 569,356.7 570,356.1 570.7,355.7 571.6,355.1 572.3,354.7 573.2,354 573.8,353.6 574.8,352.9 575.4,352.5 576.4,351.8 576.6,351.4 576.5,350.8 576.4,350.5 576.3,350 576.2,349.6 576.1,349.1 575.7,348.9 574.5,348.7 573.8,348.5 572.6,348.4 571.9,348.3 570.7,348.1 569.9,348 568.8,347.9 568,347.8 566.9,347.7 566.2,347.7 565,347.6 564.6,347.2 564.2,345.9 564,345.1 563.7,343.9 563.9,343.3 564.8,342.7 565.5,342.2 566.4,341.6 567,341.2 567.9,340.5 568.6,340 569.5,339.3 570.1,338.9 571,338.1 571.6,337.7 572.5,336.9 572.8,336.5 572.6,336 572.5,335.6 572.4,335.1 572.3,334.8 572.1,334.3 571.7,334 570.5,333.9 569.7,333.8 568.6,333.7 567.8,333.7 566.7,333.6 565.9,333.5 564.7,333.5 564,333.4 562.8,333.4 562.1,333.4 561,333.4 560.5,333 560.1,331.8 559.8,331 559.4,329.8 559.6,329.1 560.5,328.5 561.1,328 562,327.3 562.6,326.8 563.5,326.1 564.1,325.6 564.9,324.9 565.5,324.4 566.4,323.6 567,323.1 567.8,322.3 568.1,321.9 567.9,321.3 567.8,321 567.6,320.5 567.5,320.2 567.3,319.7 566.8,319.5 565.7,319.4 564.9,319.4 563.7,319.3 563,319.3 561.8,319.3 561,319.3 559.9,319.3 559.1,319.3 558,319.3 557.2,319.3 556.1,319.4 555.6,319 555.1,317.8 554.8,317 554.4,315.9 554.5,315.2 555.4,314.5 556,314 556.8,313.3 557.4,312.7 558.2,312 558.8,311.5 559.6,310.7 560.2,310.1 561,309.3 561.6,308.8 562.4,307.9 562.6,307.5 562.4,307 562.2,306.7 562,306.2 561.9,305.8 561.7,305.3 561.2,305.2 560.1,305.2 559.3,305.2 558.1,305.2 557.4,305.2 556.2,305.3 555.4,305.3 554.3,305.4 553.5,305.4 552.4,305.5 551.6,305.6 550.5,305.7 550,305.3 549.5,304.2 549.1,303.4 548.6,302.2 548.7,301.6 549.5,300.8 550.1,300.3 550.9,299.5 551.4,299 552.2,298.2 552.8,297.6 553.5,296.8 554.1,296.2 554.9,295.4 555.4,294.8 556.1,293.9 556.3,293.4 556.1,293 555.9,292.6 555.7,292.2 555.5,291.8 555.3,291.3 554.8,291.2 553.7,291.3 552.9,291.3 551.7,291.4 551,291.5 549.8,291.6 549.1,291.6 547.9,291.8 547.2,291.9 546,292 545.3,292.1 544.2,292.3 543.6,292 543,290.8 542.6,290.1 542.1,289 542.1,288.3 542.9,287.5 543.4,287 544.2,286.1 544.7,285.6 545.5,284.7 546,284.1 546.7,283.2 547.2,282.7 547.9,281.8 548.4,281.1 549.2,280.2 549.3,279.8 549.1,279.3 548.9,279 548.6,278.5 548.4,278.2 548.2,277.7 547.7,277.6 546.5,277.7 545.8,277.8 544.6,278 543.9,278.1 542.7,278.2 542,278.4 540.8,278.5 540.1,278.7 539,278.9 538.2,279 537.1,279.3 536.5,279 535.9,277.9 535.5,277.2 534.8,276.1 534.9,275.4 535.6,274.6 536.1,274 536.8,273.1 537.3,272.5 538,271.6 538.5,271 539.2,270.1 539.6,269.5 540.3,268.5 540.8,267.9 541.4,267 541.6,266.5 541.3,266 541.1,265.7 540.8,265.3 540.6,265 540.3,264.5 539.8,264.4 538.7,264.6 537.9,264.7 536.8,265 536,265.1 534.9,265.3 534.1,265.5 533,265.7 532.3,265.9 531.2,266.2 530.4,266.4 529.3,266.7 528.8,266.4 528.1,265.3 527.6,264.6 526.9,263.6 526.9,263 527.6,262.1 528,261.5 528.7,260.5 529.2,259.9 529.8,259 530.2,258.4 530.9,257.4 531.3,256.8 532,255.8 532.4,255.1 533,254.1 533.1,253.7 532.8,253.2 532.6,252.9 532.3,252.5 532.1,252.2 531.7,251.8 531.3,251.7 530.1,251.9 529.4,252.1 528.2,252.4 527.5,252.6 526.4,252.9 525.6,253.1 524.5,253.4 523.8,253.6 522.7,253.9 522,254.1 520.9,254.5 520.3,254.3 519.6,253.3 519,252.6 518.3,251.6 518.2,250.9 518.9,250 519.3,249.4 519.9,248.4 520.3,247.8 521,246.8 521.4,246.1 521.9,245.2 522.3,244.5 522.9,243.5 523.3,242.8 523.9,241.8 523.9,241.3 523.6,240.9 523.4,240.6 523,240.2 522.8,239.9 522.5,239.5 522,239.4 520.9,239.8 520.1,240 519,240.3 518.3,240.5 517.2,240.9 516.5,241.1 515.4,241.5 514.7,241.7 513.6,242.1 512.9,242.4 511.8,242.8 511.2,242.6 510.4,241.6 509.9,241 509,240 509,239.4 509.6,238.4 509.9,237.8 510.5,236.8 510.9,236.1 511.4,235.1 511.8,234.4 512.3,233.4 512.7,232.7 513.2,231.7 513.6,231 514.1,230 514.1,229.5 513.8,229.1 513.5,228.8 513.2,228.4 512.9,228.1 512.6,227.7 512.1,227.7 511,228.1 510.2,228.3 509.2,228.7 508.4,229 507.4,229.4 506.6,229.7 505.6,230.1 504.9,230.4 503.8,230.9 503.1,231.2 502.1,231.6 501.5,231.5 500.6,230.5 500,229.9 499.2,229 499.1,228.4 499.6,227.4 500,226.7 500.5,225.7 500.8,225 501.3,224 501.6,223.3 502.1,222.2 502.4,221.5 502.9,220.5 503.2,219.8 503.7,218.7 503.7,218.2 503.3,217.8 503,217.6 502.7,217.2 502.4,216.9 502,216.5 501.5,216.6 500.5,217 499.7,217.3 498.7,217.7 498,218 496.9,218.5 496.2,218.8 495.2,219.3 494.5,219.6 493.5,220.1 492.8,220.5 491.8,221 491.2,220.9 490.2,220 489.6,219.4 488.7,218.6 488.6,217.9 489.1,216.9 489.4,216.2 489.8,215.2 490.1,214.5 490.6,213.4 490.9,212.7 491.3,211.6 491.6,210.9 492,209.8 492.2,209.1 492.6,208 492.6,207.5 492.2,207.1 492,206.9 491.6,206.5 491.3,206.3 490.9,205.9 490.4,206 489.4,206.5 488.7,206.8 487.6,207.3 486.9,207.7 485.9,208.2 485.2,208.5 484.2,209.1 483.5,209.4 482.5,210 481.9,210.4 480.9,211 480.3,210.9 479.3,210 478.7,209.5 477.7,208.7 477.5,208.1 478,207 478.2,206.3 478.6,205.2 478.9,204.5 479.3,203.4 479.5,202.7 479.9,201.6 480.1,200.9 480.5,199.8 480.7,199 481,197.9 481,197.4 480.6,197.1 480.3,196.9 479.9,196.5 479.6,196.3 479.2,196 478.7,196 477.7,196.6 477,196.9 476,197.5 475.3,197.9 474.3,198.5 473.7,198.9 472.7,199.5 472,199.9 471.1,200.5 470.4,200.9 469.5,201.5 468.9,201.5 467.9,200.7 467.2,200.2 466.2,199.4 466,198.8 466.3,197.7 466.6,197 466.9,195.9 467.1,195.2 467.5,194.1 467.7,193.4 468,192.3 468.2,191.5 468.5,190.4 468.7,189.6 468.9,188.5 468.9,188 468.4,187.7 468.1,187.5 467.7,187.2 467.4,186.9 467,186.6 466.5,186.7 465.5,187.3 464.8,187.7 463.9,188.4 463.2,188.8 462.2,189.4 461.6,189.8 460.7,190.5 460,190.9 459.1,191.6 458.5,192 457.6,192.7 457,192.7 455.9,192 455.2,191.5 454.2,190.8 453.9,190.2 454.2,189.1 454.4,188.4 454.7,187.3 454.9,186.5 455.2,185.4 455.3,184.7 455.6,183.5 455.7,182.8 456,181.7 456.1,180.9 456.3,179.7 456.2,179.3 455.8,179 455.5,178.8 455,178.5 454.7,178.3 454.3,178 453.8,178.1 452.8,178.8 452.2,179.2 451.2,179.9 450.6,180.3 449.7,181 449.1,181.5 448.2,182.2 447.6,182.7 446.7,183.4 446.1,183.8 445.2,184.6 444.6,184.6 443.5,183.9 442.8,183.5 441.7,182.8 441.4,182.3 441.7,181.2 441.8,180.4 442.1,179.3 442.2,178.6 442.4,177.4 442.5,176.7 442.7,175.5 442.8,174.8 443,173.6 443.1,172.9 443.2,171.7 443.1,171.2 442.6,170.9 442.3,170.8 441.9,170.5 441.6,170.3 441.1,170.1 440.6,170.2 439.7,170.9 439.1,171.4 438.2,172.1 437.6,172.6 436.7,173.3 436.1,173.8 435.2,174.6 434.7,175.1 433.8,175.8 433.3,176.4 432.4,177.1 431.8,177.2 430.7,176.6 429.9,176.2 428.8,175.6 428.5,175 428.7,173.9 428.8,173.2 429,172 429.1,171.3 429.2,170.1 429.3,169.4 429.4,168.2 429.5,167.5 429.6,166.3 429.7,165.5 429.7,164.4 429.6,163.9 429.1,163.7 428.8,163.5 428.3,163.3 428,163.1 427.5,162.9 427.1,163 426.2,163.8 425.6,164.3 424.7,165.1 424.1,165.6 423.3,166.4 422.7,166.9 421.9,167.7 421.4,168.2 420.6,169 420,169.6 419.2,170.4 418.6,170.5 417.5,169.9 416.7,169.6 415.6,169.1 415.2,168.5 415.3,167.4 415.4,166.6 415.5,165.5 415.6,164.7 415.7,163.6 415.7,162.8 415.8,161.7 415.8,160.9 415.8,159.7 415.8,159 415.9,157.8 415.7,157.3 415.2,157.1 414.9,157 414.4,156.8 414,156.6 413.6,156.4 413.1,156.6 412.3,157.4 411.7,158 410.9,158.8 410.3,159.3 409.5,160.1 409,160.7 408.2,161.5 407.7,162.1 407,162.9 406.5,163.5 405.7,164.4 405.1,164.5 403.9,164 403.1,163.7 402,163.2 401.6,162.7 401.7,161.6 401.7,160.8 401.7,159.7 401.7,158.9 401.8,157.8 401.8,157 401.8,155.9 401.7,155.1 401.7,153.9 401.7,153.2 401.6,152 401.5,151.5 400.9,151.3 400.6,151.2 400.1,151 399.8,150.9 399.3,150.7 398.8,150.9 398,151.8 397.5,152.4 396.7,153.2 396.2,153.8 395.5,154.7 395,155.3 394.2,156.1 393.7,156.7 393,157.6 392.6,158.2 391.9,159.1 391.2,159.3 390.1,158.9 389.3,158.6 388.1,158.2 387.7,157.7 387.7,156.5 387.7,155.8 387.6,154.7 387.6,153.9 387.6,152.7 387.5,152 387.5,150.8 387.4,150.1 387.3,148.9 387.2,148.1 387.1,147 386.9,146.5 386.4,146.4 386.1,146.3 385.5,146.1 385.2,146 384.7,145.8 384.3,146.1 383.5,147 383,147.6 382.3,148.5 381.8,149.1 381.1,150 380.6,150.6 380,151.5 379.5,152.1 378.8,153.1 378.4,153.7 377.8,154.6 377.1,154.8 375.9,154.5 375.1,154.2 373.9,153.9 373.5,153.4 373.4,152.3 373.4,151.5 373.3,150.4 373.2,149.6 373.1,148.5 373,147.7 372.9,146.6 372.8,145.8 372.6,144.7 372.5,143.9 372.4,142.7 372.1,142.3 371.6,142.2 371.3,142.1 370.7,142 370.4,141.9 369.9,141.8 369.5,142 368.8,143 368.3,143.6 367.6,144.5 367.2,145.1 366.5,146.1 366.1,146.7 365.4,147.7 365,148.3 364.4,149.3 364,149.9 363.4,150.9 362.8,151.1 361.6,150.8 360.8,150.7 359.5,150.4 359.1,149.9 359,148.8 358.9,148.1 358.7,146.9 358.6,146.2 358.5,145 358.3,144.3 358.1,143.1 358,142.4 357.8,141.2 357.6,140.5 357.4,139.3 357.1,138.9 356.6,138.8 356.3,138.7 355.7,138.6 355.4,138.6 354.8,138.5 354.5,138.8 353.8,139.7 353.4,140.4 352.8,141.4 352.3,142 351.7,143 351.3,143.7 350.8,144.6 350.4,145.3 349.8,146.3 349.5,147 348.9,148 348.3,148.2 347.1,148 346.3,147.9 345,147.7 344.5,147.2 344.3,146.1 344.2,145.4 344,144.3 343.9,143.5 343.6,142.4 343.5,141.6 343.2,140.5 343,139.8 342.8,138.6 342.6,137.9 342.3,136.8 342,136.4 341.4,136.3 341.1,136.2 340.6,136.2 340.2,136.1 339.7,136 339.3,136.3 338.7,137.3 338.3,138 337.7,139 337.4,139.7 336.8,140.7 336.4,141.4 335.9,142.4 335.6,143.1 335.1,144.1 334.7,144.8 334.3,145.8 333.7,146.1 332.4,146 331.6,145.9 330.3,145.7 329.8,145.3 329.6,144.2 329.4,143.5 329.2,142.4 329,141.7 328.7,140.5 328.5,139.8 328.2,138.7 327.9,138 327.6,136.8 327.4,136.1 327,135 326.7,134.6 326.2,134.6 325.8,134.5 325.3,134.5 324.9,134.5 324.4,134.4 324,134.8 323.5,135.8 323.1,136.5 322.6,137.5 322.3,138.2 321.8,139.3 321.5,139.9 321,141 320.7,141.7 320.2,142.7 319.9,143.4 319.5,144.5 319,144.8 317.7,144.7 316.9,144.7 315.6,144.6 315.1,144.2 314.8,143.2 314.6,142.4 314.2,141.3 314,140.6 313.7,139.5 313.4,138.8 313,137.7 312.8,137 312.4,135.9 312.1,135.2 311.7,134.1 311.4,133.7 310.8,133.7 310.5,133.7 309.9,133.7 309.6,133.7 309,133.6 308.7,134 308.2,135.1 307.9,135.8 307.4,136.8 307.1,137.5 306.7,138.6 306.4,139.3 306,140.4 305.7,141.1 305.3,142.2 305.1,142.9 304.7,144 304.2,144.3 302.9,144.3Z" fill="none" stroke="#000" stroke-width="2.65" stroke-linejoin="round"/>
<path d="M307.6,378.7 307.7,378.4 307.8,377.5 307.8,377.2 307.8,377.1 307.8,376.7 307.7,375.7 307.6,375 307.3,373.9 307.1,373.2 306.7,372.2 306.4,371.5 305.8,370.4 305.5,369.7 304.8,368.7 304.3,368.3 303.5,368.3 302.9,368.3 302.1,368.3 301.5,368.3 300.7,368.3 300.2,368.7 299.5,369.7 299.2,370.4 298.6,371.5 298.3,372.2 297.9,373.2 297.7,373.9 297.4,375 297.3,375.7 297.2,376.7 297.2,377.1 297.2,377.2 297.2,377.5 297.3,378.4 297.4,378.7M294.2,379.3 294.1,379 293.9,378.2 293.8,377.8 293.8,377.7 293.6,377.4 293.1,376.4 292.8,375.9 292.1,375 291.7,374.4 290.9,373.6 290.4,373 289.5,372.2 288.9,371.7 288,371 287.4,370.8 286.6,371.1 286,371.3 285.2,371.6 284.7,371.8 283.9,372.2 283.6,372.7 283.4,373.9 283.3,374.7 283.2,375.8 283.2,376.6 283.2,377.7 283.2,378.4 283.3,379.5 283.5,380.2 283.7,381.2 283.8,381.6 283.9,381.7 284,382 284.5,382.7 284.6,383M281.8,384.7 281.7,384.5 281.2,383.8 281,383.5 280.9,383.4 280.6,383.1 279.8,382.4 279.3,382 278.4,381.4 277.7,381.1 276.7,380.6 276,380.2 274.9,379.8 274.2,379.6 273,379.2 272.4,379.3 271.8,379.8 271.4,380.2 270.7,380.8 270.3,381.2 269.7,381.8 269.6,382.4 269.8,383.5 270,384.3 270.3,385.4 270.6,386.2 271,387.2 271.3,387.9 271.8,388.8 272.2,389.4 272.8,390.3 273,390.6 273.1,390.6 273.4,390.9 274,391.4 274.3,391.6M272.3,394.2 272,394.1 271.3,393.6 271,393.4 270.9,393.3 270.6,393.2 269.6,392.8 268.9,392.6 267.9,392.4 267.1,392.3 266,392.2 265.3,392.2 264.1,392.1 263.3,392.2 262.1,392.3 261.6,392.5 261.2,393.3 260.9,393.8 260.5,394.6 260.3,395.1 259.9,395.9 260,396.5 260.7,397.5 261.1,398.1 261.8,399.1 262.3,399.6 263.1,400.5 263.6,401 264.4,401.7 265,402.1 265.9,402.7 266.2,402.9 266.3,402.9 266.6,403 267.4,403.3 267.7,403.4M266.8,406.5 266.5,406.5 265.7,406.3 265.4,406.2 265.2,406.2 264.8,406.2 263.8,406.2 263.1,406.3 262,406.4 261.3,406.6 260.3,406.9 259.5,407.1 258.4,407.6 257.7,407.9 256.6,408.4 256.2,408.9 256.1,409.7 256,410.3 256,411.1 255.9,411.7 255.9,412.5 256.2,413.1 257.2,413.8 257.8,414.2 258.8,414.8 259.5,415.2 260.5,415.7 261.2,416 262.2,416.3 262.9,416.5 263.9,416.7 264.2,416.8 264.4,416.8 264.7,416.8 265.6,416.8 265.9,416.8M266.2,420 265.9,420 265,420.2 264.7,420.2 264.6,420.3 264.2,420.4 263.2,420.8 262.6,421.1 261.7,421.6 261.1,422 260.2,422.7 259.6,423.2 258.7,424 258.2,424.5 257.3,425.4 257.1,426 257.3,426.8 257.5,427.4 257.7,428.2 257.9,428.7 258.1,429.5 258.6,429.9 259.8,430.2 260.6,430.4 261.7,430.6 262.5,430.7 263.6,430.8 264.3,430.8 265.4,430.8 266.1,430.8 267.1,430.6 267.5,430.5 267.6,430.5 267.9,430.3 268.7,430 269,429.9M270.4,432.8 270.2,432.9 269.4,433.4 269.1,433.5 269,433.6 268.7,433.9 268,434.6 267.5,435.1 266.8,435.9 266.4,436.5 265.8,437.5 265.4,438.1 264.9,439.2 264.6,439.9 264.1,441 264.2,441.6 264.6,442.3 265,442.8 265.5,443.5 265.8,443.9 266.4,444.6 267,444.8 268.2,444.6 269,444.5 270.1,444.3 270.8,444.1 271.9,443.8 272.6,443.6 273.6,443.2 274.2,442.8 275.1,442.3 275.4,442.1 275.5,442 275.8,441.8 276.4,441.2 276.6,441M279,443.2 278.8,443.4 278.3,444.1 278.1,444.3 278,444.4 277.8,444.8 277.4,445.7 277.1,446.4 276.8,447.4 276.6,448.1 276.4,449.2 276.3,450 276.2,451.1 276.2,451.9 276.1,453.1 276.4,453.7 277.1,454.2 277.6,454.5 278.3,454.9 278.8,455.2 279.5,455.6 280.1,455.6 281.2,455 281.9,454.6 282.9,454 283.5,453.6 284.4,452.9 285,452.4 285.7,451.7 286.2,451.2 286.8,450.4 287.1,450 287.1,449.9 287.3,449.6 287.6,448.8 287.7,448.6M290.8,449.7 290.7,450 290.4,450.9 290.3,451.2 290.3,451.3 290.3,451.7 290.2,452.7 290.2,453.4 290.2,454.5 290.3,455.2 290.5,456.3 290.7,457.1 291,458.2 291.3,458.9 291.7,460.1 292.1,460.5 292.9,460.7 293.5,460.8 294.3,461 294.9,461.1 295.7,461.2 296.3,460.9 297.1,460 297.6,459.4 298.3,458.5 298.7,457.9 299.3,456.9 299.7,456.2 300.1,455.3 300.4,454.6 300.7,453.6 300.8,453.3 300.8,453.1 300.8,452.8 300.9,451.9 300.9,451.6M304.1,451.6 304.1,451.9 304.2,452.8 304.2,453.1 304.2,453.3 304.3,453.6 304.6,454.6 304.9,455.3 305.3,456.2 305.7,456.9 306.3,457.9 306.7,458.5 307.4,459.4 307.9,460 308.7,460.9 309.3,461.2 310.1,461.1 310.7,461 311.5,460.8 312.1,460.7 312.9,460.5 313.3,460.1 313.7,458.9 314,458.2 314.3,457.1 314.5,456.3 314.7,455.2 314.8,454.5 314.8,453.4 314.8,452.7 314.7,451.7 314.7,451.3 314.7,451.2 314.6,450.9 314.3,450 314.2,449.7M317.3,448.6 317.4,448.8 317.7,449.6 317.9,449.9 317.9,450 318.2,450.4 318.8,451.2 319.3,451.7 320,452.4 320.6,452.9 321.5,453.6 322.1,454 323.1,454.6 323.8,455 324.9,455.6 325.5,455.6 326.2,455.2 326.7,454.9 327.4,454.5 327.9,454.2 328.6,453.7 328.9,453.1 328.8,451.9 328.8,451.1 328.7,450 328.6,449.2 328.4,448.1 328.2,447.4 327.9,446.4 327.6,445.7 327.2,444.8 327,444.4 326.9,444.3 326.7,444.1 326.2,443.4 326,443.2M328.4,441 328.6,441.2 329.2,441.8 329.5,442 329.6,442.1 329.9,442.3 330.8,442.8 331.4,443.2 332.4,443.6 333.1,443.8 334.2,444.1 334.9,444.3 336,444.5 336.8,444.6 338,444.8 338.6,444.6 339.2,443.9 339.5,443.5 340,442.8 340.4,442.3 340.8,441.6 340.9,441 340.4,439.9 340.1,439.2 339.6,438.1 339.2,437.5 338.6,436.5 338.2,435.9 337.5,435.1 337,434.6 336.3,433.9 336,433.6 335.9,433.5 335.6,433.4 334.8,432.9 334.6,432.8M336,429.9 336.3,430 337.1,430.3 337.4,430.5 337.5,430.5 337.9,430.6 338.9,430.8 339.6,430.8 340.7,430.8 341.4,430.8 342.5,430.7 343.3,430.6 344.4,430.4 345.2,430.2 346.4,429.9 346.9,429.5 347.1,428.7 347.3,428.2 347.5,427.4 347.7,426.8 347.9,426 347.7,425.4 346.8,424.5 346.3,424 345.4,423.2 344.8,422.7 343.9,422 343.3,421.6 342.4,421.1 341.8,420.8 340.8,420.4 340.4,420.3 340.3,420.2 340,420.2 339.1,420 338.8,420M339.1,416.8 339.4,416.8 340.3,416.8 340.6,416.8 340.8,416.8 341.1,416.7 342.1,416.5 342.8,416.3 343.8,416 344.5,415.7 345.5,415.2 346.2,414.8 347.2,414.2 347.8,413.8 348.8,413.1 349.1,412.5 349.1,411.7 349,411.1 349,410.3 348.9,409.7 348.8,408.9 348.4,408.4 347.3,407.9 346.6,407.6 345.5,407.1 344.7,406.9 343.7,406.6 343,406.4 341.9,406.3 341.2,406.2 340.2,406.2 339.8,406.2 339.6,406.2 339.3,406.3 338.5,406.5 338.2,406.5M337.3,403.4 337.6,403.3 338.4,403 338.7,402.9 338.8,402.9 339.1,402.7 340,402.1 340.6,401.7 341.4,401 341.9,400.5 342.7,399.6 343.2,399.1 343.9,398.1 344.3,397.5 345,396.5 345.1,395.9 344.7,395.1 344.5,394.6 344.1,393.8 343.8,393.3 343.4,392.5 342.9,392.3 341.7,392.2 340.9,392.1 339.7,392.2 339,392.2 337.9,392.3 337.1,392.4 336.1,392.6 335.4,392.8 334.4,393.2 334.1,393.3 334,393.4 333.7,393.6 333,394.1 332.7,394.2M330.7,391.6 331,391.4 331.6,390.9 331.9,390.6 332,390.6 332.2,390.3 332.8,389.4 333.2,388.8 333.7,387.9 334,387.2 334.4,386.2 334.7,385.4 335,384.3 335.2,383.5 335.4,382.4 335.3,381.8 334.7,381.2 334.3,380.8 333.6,380.2 333.2,379.8 332.6,379.3 332,379.2 330.8,379.6 330.1,379.8 329,380.2 328.3,380.6 327.3,381.1 326.6,381.4 325.7,382 325.2,382.4 324.4,383.1 324.1,383.4 324,383.5 323.8,383.8 323.3,384.5 323.2,384.7M320.4,383 320.5,382.7 321,382 321.1,381.7 321.2,381.6 321.3,381.2 321.5,380.2 321.7,379.5 321.8,378.4 321.8,377.7 321.8,376.6 321.8,375.8 321.7,374.7 321.6,373.9 321.4,372.7 321.1,372.2 320.3,371.8 319.8,371.6 319,371.3 318.4,371.1 317.6,370.8 317,371 316.1,371.7 315.5,372.2 314.6,373 314.1,373.6 313.3,374.4 312.9,375 312.2,375.9 311.9,376.4 311.4,377.4 311.2,377.7 311.2,377.8 311.1,378.2 310.9,379 310.8,379.3" fill="none" stroke="#000" stroke-width="2.6" stroke-linejoin="round"/>
<rect x="302" y="414.5" width="1" height="1" fill="#000"/>
<path d="M275.4,337.7 275.4,336.6 275.8,336.2 276.8,335.9 277.6,335.7 278.6,335.4 279.3,335.1 280.4,334.7 281.1,334.4 282.2,333.9 282.9,333.6 284,333.1 284.7,332.7 285.7,332.2 286.1,331.8 286.1,331.1 286.1,330.7 286,330 286,329.5 286,328.9 285.6,328.5 284.5,328 283.7,327.7 282.6,327.3 281.9,327 280.8,326.7 280.1,326.4 279,326.1 278.2,325.9 277.1,325.7 276.4,325.5 275.3,325.4 274.9,325 274.8,323.9 274.7,323.2 274.6,322.2 274.9,321.7 275.9,321.3 276.6,321 277.6,320.5 278.3,320.2 279.3,319.6 280,319.3 281,318.7 281.6,318.2 282.6,317.6 283.3,317.1 284.3,316.5 284.6,316 284.4,315.3 284.4,314.9 284.3,314.2 284.2,313.8 284,313.1 283.6,312.8 282.5,312.5 281.7,312.3 280.5,312 279.8,311.8 278.6,311.6 277.9,311.5 276.7,311.3 276,311.2 274.9,311.1 274.1,311.1 273,311 272.6,310.7 272.3,309.7 272.2,309 271.9,308 272.1,307.5 273.1,306.9 273.8,306.6 274.7,305.9 275.3,305.5 276.3,304.8 276.9,304.4 277.8,303.7 278.4,303.2 279.3,302.4 279.9,301.9 280.7,301 281,300.6 280.8,299.9 280.6,299.5 280.4,298.8 280.3,298.4 280.1,297.8 279.6,297.5 278.4,297.3 277.7,297.2 276.5,297.1 275.7,297.1 274.5,297 273.8,297 272.6,296.9 271.9,297 270.7,297 270,297 268.9,297.2 268.4,296.9 268,295.9 267.8,295.3 267.4,294.3 267.6,293.7 268.4,293.1 269,292.6 269.9,291.9 270.5,291.4 271.3,290.6 271.8,290 272.6,289.2 273.2,288.6 274,287.8 274.5,287.2 275.2,286.2 275.4,285.7 275.1,285.1 274.9,284.7 274.7,284.1 274.5,283.7 274.2,283.1 273.7,282.9 272.5,282.9 271.7,282.9 270.5,282.9 269.7,282.9 268.6,283 267.8,283.1 266.7,283.2 265.9,283.3 264.8,283.5 264.1,283.7 263,283.9 262.5,283.7 262,282.8 261.6,282.2 261.1,281.3 261.2,280.7 262,279.9 262.5,279.4 263.3,278.6 263.8,278 264.5,277.1 265,276.5 265.7,275.6 266.1,274.9 266.8,273.9 267.2,273.3 267.9,272.3 268,271.7 267.6,271.2 267.4,270.8 267,270.2 266.8,269.8 266.4,269.3 265.9,269.1 264.7,269.3 263.9,269.4 262.7,269.6 262,269.7 260.8,269.9 260.1,270.1 258.9,270.4 258.2,270.6 257.1,270.9 256.4,271.2 255.4,271.6 254.8,271.4 254.2,270.6 253.8,270 253.2,269.2 253.2,268.6 253.9,267.7 254.4,267.1 255,266.2 255.4,265.6 256,264.6 256.4,263.9 257,262.9 257.3,262.2 257.9,261.2 258.2,260.5 258.7,259.4 258.7,258.8 258.3,258.3 258,258 257.6,257.5 257.3,257.1 256.9,256.6 256.3,256.5 255.2,256.8 254.4,257 253.3,257.4 252.5,257.6 251.4,258 250.7,258.3 249.6,258.7 248.9,259 247.9,259.5 247.2,259.8 246.3,260.3 245.7,260.2 245,259.5 244.5,259 243.8,258.2 243.7,257.7 244.3,256.7 244.7,256.1 245.2,255.1 245.5,254.4 246,253.3 246.3,252.6 246.7,251.5 247,250.8 247.4,249.7 247.6,248.9 248,247.8 247.9,247.3 247.4,246.8 247.1,246.5 246.6,246 246.3,245.7 245.8,245.3 245.2,245.3 244.1,245.7 243.4,246 242.3,246.5 241.6,246.9 240.6,247.4 239.9,247.7 238.9,248.3 238.2,248.7 237.3,249.3 236.6,249.7 235.7,250.3 235.2,250.3 234.4,249.7 233.8,249.3 233,248.6 232.9,248.1 233.3,247 233.6,246.3 234,245.3 234.2,244.6 234.5,243.5 234.7,242.7 235,241.6 235.2,240.8 235.4,239.7 235.6,238.9 235.8,237.7 235.7,237.2 235.1,236.8 234.8,236.5 234.2,236.1 233.8,235.9 233.3,235.5 232.7,235.6 231.7,236.2 231,236.6 230,237.2 229.4,237.6 228.4,238.3 227.8,238.7 226.8,239.4 226.2,239.9 225.4,240.6 224.8,241.1 224,241.8 223.4,241.9 222.6,241.4 222,241 221.1,240.5 220.9,239.9 221.2,238.9 221.4,238.2 221.6,237 221.7,236.3 221.9,235.2 222,234.4 222.2,233.3 222.2,232.5 222.3,231.3 222.4,230.5 222.4,229.3 222.2,228.8 221.6,228.5 221.2,228.3 220.6,228 220.2,227.8 219.6,227.4 219.1,227.6 218.2,228.3 217.5,228.8 216.6,229.5 216,230.1 215.1,230.8 214.6,231.4 213.8,232.2 213.2,232.7 212.5,233.5 212,234.1 211.3,234.9 210.7,235.1 209.8,234.7 209.1,234.4 208.2,234 207.9,233.5 208.1,232.4 208.2,231.6 208.2,230.5 208.3,229.7 208.3,228.6 208.3,227.8 208.3,226.7 208.3,225.9 208.2,224.7 208.2,223.9 208,222.7 207.8,222.2 207.2,222 206.7,221.8 206.1,221.6 205.7,221.5 205,221.2 204.5,221.4 203.7,222.3 203.1,222.9 202.3,223.7 201.8,224.3 201,225.2 200.5,225.8 199.8,226.7 199.4,227.3 198.7,228.2 198.3,228.8 197.7,229.8 197.2,230 196.2,229.7 195.5,229.5 194.5,229.2 194.2,228.7 194.2,227.6 194.2,226.9 194.2,225.8 194.1,225 194,223.9 193.9,223.1 193.7,221.9 193.6,221.2 193.4,220 193.2,219.2 192.9,218.1 192.6,217.6 192,217.5 191.5,217.4 190.9,217.2 190.4,217.1 189.8,217 189.3,217.3 188.6,218.2 188.1,218.8 187.4,219.8 187,220.4 186.3,221.4 185.9,222.1 185.3,223 185,223.7 184.4,224.7 184.1,225.4 183.6,226.4 183.1,226.7 182.1,226.5 181.4,226.4 180.4,226.2 180,225.8 179.9,224.7 179.8,224 179.6,222.9 179.4,222.1 179.2,221 179,220.3 178.6,219.2 178.4,218.4 178,217.3 177.8,216.5 177.4,215.4 177,215 176.3,215 175.9,214.9 175.2,214.9 174.8,214.8 174.1,214.8 173.7,215.1 173,216.1 172.7,216.8 172.1,217.9 171.7,218.6 171.2,219.6 170.9,220.3 170.5,221.4 170.2,222.1 169.8,223.1 169.5,223.8 169.2,224.9 168.8,225.2 167.7,225.2 167,225.2 166,225.2 165.6,224.8 165.3,223.7 165.1,223 164.7,221.9 164.5,221.2 164.1,220.2 163.8,219.4 163.3,218.4 163,217.7 162.5,216.6 162.1,215.9 161.6,214.8 161.1,214.5 160.5,214.5 160,214.5 159.4,214.6 158.9,214.6 158.2,214.6 157.8,215 157.4,216.1 157.1,216.8 156.7,217.9 156.4,218.7 156,219.8 155.8,220.5 155.5,221.6 155.3,222.4 155.1,223.5 154.9,224.2 154.7,225.3 154.3,225.7 153.3,225.8 152.6,225.9 151.6,226 151.1,225.7 150.7,224.6 150.4,224 149.9,222.9 149.6,222.3 149,221.3 148.6,220.6 148,219.6 147.6,218.9 147,217.9 146.5,217.3 145.8,216.3 145.4,216 144.7,216.1 144.3,216.2 143.6,216.3 143.2,216.4 142.5,216.5 142.2,217 141.8,218.1 141.7,218.9 141.4,220 141.2,220.8 141,221.9 140.9,222.7 140.7,223.8 140.6,224.6 140.5,225.7 140.5,226.5 140.4,227.6 140.1,228 139.1,228.2 138.4,228.4 137.4,228.7 136.9,228.4 136.3,227.5 135.9,226.8 135.3,225.9 134.9,225.3 134.2,224.3 133.8,223.7 133,222.8 132.5,222.2 131.8,221.3 131.2,220.7 130.4,219.8 129.9,219.6 129.3,219.8 128.9,219.9 128.2,220.1 127.8,220.3 127.1,220.5 126.9,220.9 126.7,222.1 126.6,222.9 126.5,224.1 126.4,224.9 126.4,226 126.3,226.8 126.3,228 126.3,228.7 126.4,229.8 126.4,230.6 126.5,231.7 126.2,232.2 125.3,232.5 124.6,232.8 123.7,233.2 123.1,233 122.5,232.1 122,231.5 121.3,230.7 120.7,230.1 120,229.3 119.4,228.7 118.6,227.9 118,227.4 117.1,226.6 116.5,226.1 115.6,225.3 115.1,225.2 114.5,225.4 114.1,225.6 113.5,225.9 113.1,226.1 112.4,226.4 112.2,226.9 112.2,228.1 112.2,228.9 112.3,230.1 112.3,230.9 112.4,232 112.5,232.8 112.6,233.9 112.7,234.7 112.9,235.8 113,236.5 113.3,237.6 113.1,238.1 112.2,238.6 111.6,238.9 110.6,239.5 110.1,239.4 109.3,238.6 108.8,238 107.9,237.3 107.4,236.8 106.5,236.1 105.9,235.6 104.9,234.9 104.3,234.5 103.3,233.8 102.7,233.4 101.6,232.7 101.1,232.6 100.5,233 100.2,233.2 99.6,233.6 99.2,233.8 98.6,234.2 98.5,234.7 98.6,235.9 98.8,236.7 98.9,237.9 99.1,238.6 99.3,239.8 99.5,240.5 99.8,241.6 100,242.4 100.3,243.4 100.6,244.1 100.9,245.2 100.8,245.7 100,246.3 99.4,246.7 98.6,247.4 98,247.3 97.1,246.7 96.5,246.2 95.6,245.6 95,245.2 94,244.6 93.3,244.2 92.3,243.6 91.6,243.2 90.6,242.7 89.8,242.4 88.7,241.9 88.2,241.8 87.7,242.3 87.3,242.6 86.8,243 86.5,243.3 86,243.7 85.9,244.3 86.2,245.4 86.4,246.2 86.8,247.3 87,248.1 87.4,249.2 87.6,249.9 88.1,250.9 88.4,251.6 88.8,252.7 89.2,253.3 89.7,254.3 89.6,254.9 88.9,255.6 88.4,256.1 87.6,256.8 87,256.8 86.1,256.3 85.4,255.9 84.4,255.4 83.8,255.1 82.7,254.6 82,254.3 80.9,253.9 80.2,253.6 79.1,253.2 78.3,253 77.2,252.6 76.6,252.7 76.2,253.2 75.9,253.5 75.4,254 75.1,254.3 74.7,254.8 74.7,255.4 75.1,256.5 75.4,257.2 75.9,258.3 76.2,259 76.8,260 77.1,260.7 77.7,261.7 78.1,262.4 78.7,263.3 79.1,263.9 79.7,264.8 79.7,265.4 79.1,266.2 78.6,266.7 78,267.6 77.4,267.7 76.4,267.3 75.7,267 74.7,266.6 73.9,266.4 72.8,266 72.1,265.8 71,265.5 70.2,265.4 69,265.1 68.3,265 67.1,264.8 66.6,264.9 66.2,265.5 65.9,265.8 65.5,266.4 65.3,266.7 64.9,267.3 65,267.8 65.5,268.9 65.9,269.6 66.6,270.6 67,271.2 67.6,272.2 68.1,272.8 68.8,273.7 69.2,274.3 70,275.2 70.5,275.8 71.2,276.6 71.3,277.1 70.7,278 70.4,278.6 69.9,279.5 69.3,279.7 68.2,279.4 67.5,279.2 66.4,279 65.7,278.8 64.5,278.7 63.8,278.6 62.6,278.4 61.8,278.3 60.7,278.3 59.9,278.2 58.7,278.2 58.2,278.4 57.9,278.9 57.6,279.3 57.3,279.9 57.1,280.3 56.8,280.9 57,281.5 57.7,282.4 58.2,283 58.9,284 59.4,284.6 60.2,285.4 60.7,286 61.5,286.8 62.1,287.3 62.9,288.1 63.5,288.6 64.3,289.3 64.5,289.9 64,290.8 63.8,291.4 63.3,292.4 62.8,292.7 61.7,292.5 61,292.4 59.9,292.3 59.1,292.3 58,292.3 57.2,292.2 56,292.3 55.3,292.3 54.1,292.4 53.3,292.4 52.1,292.5 51.6,292.8 51.4,293.4 51.2,293.8 51,294.5 50.8,294.9 50.6,295.5 50.8,296 51.7,296.9 52.2,297.4 53.1,298.2 53.7,298.8 54.6,299.5 55.1,300 56,300.7 56.6,301.2 57.6,301.8 58.2,302.3 59.1,302.8 59.3,303.4 59,304.4 58.9,305 58.6,306 58.1,306.4 57,306.3 56.3,306.4 55.1,306.4 54.4,306.5 53.2,306.6 52.5,306.7 51.3,306.9 50.5,307 49.4,307.2 48.6,307.4 47.4,307.6 47,307.9 46.8,308.6 46.7,309 46.6,309.7 46.5,310.1 46.4,310.8 46.6,311.3 47.6,312 48.2,312.5 49.2,313.2 49.8,313.6 50.8,314.3 51.4,314.7 52.4,315.3 53.1,315.6 54.1,316.2 54.8,316.5 55.8,316.9 56,317.4 55.9,318.5 55.8,319.1 55.6,320.2 55.2,320.6 54.1,320.7 53.4,320.8 52.3,321 51.5,321.2 50.4,321.4 49.7,321.6 48.5,321.9 47.8,322.2 46.7,322.5 45.9,322.8 44.8,323.2 44.4,323.6 44.3,324.3 44.3,324.7 44.2,325.4 44.2,325.8 44.1,326.5 44.5,326.9 45.5,327.5 46.2,327.9 47.2,328.5 47.9,328.8 49,329.3 49.7,329.7 50.7,330.1 51.4,330.4 52.5,330.8 53.2,331 54.3,331.4 54.6,331.8 54.6,332.8 54.6,333.5 54.5,334.6 54.2,335 53.1,335.3 52.4,335.5 51.3,335.8 50.6,336.1 49.5,336.5 48.8,336.8 47.7,337.3 47,337.6 46,338.1 45.3,338.5 44.2,339 43.9,339.4 43.9,340.1 43.9,340.5 43.9,341.2 43.9,341.7 44,342.3 44.4,342.7 45.5,343.2 46.2,343.5 47.3,343.9 48,344.2 49.2,344.5 49.9,344.8 51,345.1 51.7,345.3 52.8,345.5 53.6,345.7 54.7,345.8 55.1,346.2 55.2,347.3 55.2,348 55.4,349 55.1,349.5 54,349.9 53.3,350.2 52.3,350.7 51.6,351 50.6,351.6 50,351.9 49,352.5 48.3,353 47.3,353.6 46.7,354.1 45.7,354.7 45.4,355.2 45.5,355.9 45.6,356.3 45.7,357 45.8,357.4 45.9,358.1 46.3,358.4 47.5,358.7 48.3,358.9 49.4,359.2 50.2,359.4 51.3,359.6 52.1,359.7 53.2,359.9 54,360 55.1,360.1 55.8,360.1 56.9,360.2 57.4,360.5 57.6,361.5 57.8,362.2 58,363.2 57.8,363.7 56.8,364.3 56.2,364.6 55.3,365.3 54.6,365.7 53.7,366.4 53.1,366.8 52.2,367.5 51.6,368 50.7,368.8 50.1,369.3 49.2,370.2 49,370.6 49.2,371.3 49.3,371.7 49.5,372.4 49.6,372.8 49.9,373.4 50.3,373.7 51.5,373.9 52.3,374 53.5,374.1 54.3,374.1 55.4,374.2 56.2,374.2 57.3,374.3 58.1,374.2 59.2,374.2 60,374.2 61.1,374 61.6,374.3 61.9,375.3 62.2,375.9 62.6,376.9 62.4,377.5 61.5,378.1 60.9,378.6 60.1,379.3 59.5,379.8 58.7,380.6 58.1,381.2 57.3,382 56.8,382.6 56,383.4 55.5,384 54.7,385 54.5,385.5 54.8,386.1 55,386.5 55.3,387.1 55.5,387.5 55.8,388.1 56.3,388.3 57.5,388.3 58.3,388.3 59.4,388.3 60.2,388.3 61.4,388.2 62.2,388.1 63.3,388 64,387.9 65.2,387.7 65.9,387.5 67,387.3 67.5,387.5 68,388.4 68.3,389 68.8,389.9 68.7,390.5 67.9,391.3 67.4,391.8 66.7,392.6 66.2,393.2 65.4,394.1 65,394.7 64.3,395.6 63.8,396.3 63.2,397.3 62.7,397.9 62.1,398.9 62,399.5 62.4,400 62.6,400.4 63,401 63.2,401.4 63.6,401.9 64.1,402.1 65.3,401.9 66.1,401.8 67.2,401.6 68,401.5 69.1,401.3 69.9,401.1 71,400.8 71.7,400.6 72.8,400.3 73.5,400 74.6,399.6 75.1,399.8 75.7,400.6 76.1,401.2 76.7,402 76.7,402.6 76,403.5 75.6,404.1 75,405 74.5,405.6 73.9,406.6 73.5,407.3 73,408.3 72.6,409 72.1,410 71.7,410.7 71.2,411.8 71.2,412.4 71.6,412.9 71.9,413.2 72.4,413.7 72.7,414.1 73.1,414.6 73.6,414.7 74.8,414.4 75.6,414.2 76.7,413.8 77.4,413.6 78.5,413.2 79.3,412.9 80.3,412.5 81,412.2 82,411.7 82.7,411.4 83.7,410.9 84.3,411 85,411.7 85.4,412.2 86.2,413 86.2,413.5 85.7,414.5 85.3,415.1 84.8,416.1 84.5,416.8 84,417.9 83.7,418.6 83.3,419.7 83,420.4 82.6,421.5 82.3,422.3 82,423.4 82,423.9 82.5,424.4 82.9,424.7 83.4,425.2 83.7,425.5 84.2,425.9 84.7,425.9 85.8,425.5 86.6,425.2 87.7,424.7 88.4,424.3 89.4,423.8 90.1,423.5 91.1,422.9 91.7,422.5 92.7,421.9 93.3,421.5 94.2,420.9 94.8,420.9 95.6,421.5 96.1,421.9 96.9,422.6 97.1,423.1 96.6,424.2 96.4,424.9 96,425.9 95.7,426.6 95.4,427.7 95.2,428.5 94.9,429.6 94.7,430.4 94.5,431.5 94.4,432.3 94.2,433.5 94.3,434 94.8,434.4 95.2,434.7 95.7,435.1 96.1,435.3 96.7,435.7 97.2,435.6 98.2,435 98.9,434.6 99.9,434 100.6,433.6 101.6,432.9 102.2,432.5 103.1,431.8 103.7,431.3 104.6,430.6 105.1,430.1 105.9,429.4 106.5,429.3 107.4,429.8 108,430.2 108.9,430.7 109.1,431.3 108.8,432.3 108.6,433 108.4,434.2 108.2,434.9 108,436 107.9,436.8 107.8,437.9 107.7,438.7 107.6,439.9 107.6,440.7 107.5,441.9 107.7,442.4 108.3,442.7 108.7,442.9 109.3,443.2 109.7,443.4 110.3,443.8 110.8,443.6 111.8,442.9 112.4,442.4 113.3,441.7 113.9,441.1 114.8,440.4 115.4,439.8 116.2,439 116.7,438.5 117.5,437.7 118,437.1 118.7,436.3 119.2,436.1 120.2,436.5 120.8,436.8 121.8,437.2 122,437.7 121.9,438.8 121.8,439.6 121.7,440.7 121.7,441.5 121.6,442.6 121.6,443.4 121.6,444.5 121.7,445.3 121.7,446.5 121.8,447.3 121.9,448.5 122.2,449 122.8,449.2 123.2,449.4 123.8,449.6 124.3,449.7 124.9,450 125.4,449.8 126.3,448.9 126.8,448.3 127.6,447.5 128.1,446.9 128.9,446 129.4,445.4 130.1,444.5 130.6,443.9 131.2,443 131.6,442.4 132.2,441.4 132.7,441.2 133.7,441.5 134.4,441.7 135.4,442 135.7,442.5 135.7,443.6 135.7,444.3 135.8,445.4 135.9,446.2 136,447.3 136.1,448.1 136.2,449.3 136.4,450 136.6,451.2 136.7,452 137,453.1 137.3,453.6 138,453.7 138.4,453.8 139.1,454 139.5,454.1 140.2,454.2 140.6,453.9 141.4,453 141.9,452.4 142.5,451.4 143,450.8 143.6,449.8 144,449.1 144.6,448.2 145,447.5 145.5,446.5 145.9,445.8 146.3,444.8 146.8,444.5 147.8,444.7 148.5,444.8 149.5,445 149.9,445.4 150.1,446.5 150.2,447.2 150.4,448.3 150.5,449.1 150.8,450.2 151,450.9 151.3,452 151.5,452.8 151.9,453.9 152.2,454.7 152.6,455.8 153,456.2 153.6,456.2 154.1,456.3 154.7,456.3 155.2,456.4 155.9,456.4 156.3,456.1 156.9,455.1 157.3,454.4 157.9,453.3 158.2,452.6 158.7,451.6 159,450.9 159.5,449.8 159.8,449.1 160.2,448.1 160.4,447.4 160.7,446.3 161.2,446 162.2,446 162.9,446 163.9,446 164.4,446.4 164.7,447.5 164.9,448.2 165.2,449.3 165.5,450 165.9,451 166.2,451.8 166.6,452.8 167,453.5 167.5,454.6 167.8,455.3 168.4,456.4 168.8,456.7 169.5,456.7 169.9,456.7 170.6,456.6 171,456.6 171.7,456.6 172.1,456.2 172.6,455.1 172.9,454.4 173.3,453.3 173.5,452.5 173.9,451.4 174.1,450.7 174.5,449.6 174.6,448.8 174.9,447.7 175,447 175.2,445.9 175.6,445.5 176.7,445.4 177.3,445.3 178.4,445.2 178.9,445.5 179.3,446.6 179.6,447.2 180.1,448.3 180.4,448.9 180.9,449.9 181.3,450.6 181.9,451.6 182.3,452.3 183,453.3 183.4,453.9 184.1,454.9 184.6,455.2 185.2,455.1 185.7,455 186.3,454.9 186.8,454.8 187.5,454.7 187.8,454.2 188.1,453.1 188.3,452.3 188.6,451.2 188.7,450.4 189,449.3 189.1,448.5 189.2,447.4 189.3,446.6 189.4,445.5 189.5,444.7 189.5,443.6 189.9,443.2 190.9,443 191.6,442.8 192.6,442.5 193.1,442.8 193.6,443.7 194,444.4 194.6,445.3 195.1,445.9 195.7,446.9 196.2,447.5 196.9,448.4 197.4,449 198.2,449.9 198.7,450.5 199.5,451.4 200,451.6 200.7,451.4 201.1,451.3 201.7,451.1 202.2,450.9 202.8,450.7 203.1,450.3 203.2,449.1 203.3,448.3 203.5,447.1 203.5,446.3 203.6,445.2 203.6,444.4 203.6,443.2 203.6,442.5 203.6,441.4 203.5,440.6 203.4,439.5 203.7,439 204.7,438.7 205.3,438.4 206.3,438 206.8,438.2 207.5,439.1 208,439.7 208.7,440.5 209.2,441.1 210,441.9 210.5,442.5 211.4,443.3 211.9,443.8 212.8,444.6 213.4,445.1 214.3,445.9 214.9,446 215.5,445.8 215.9,445.6 216.5,445.3 216.9,445.1 217.5,444.8 217.7,444.3 217.7,443.1 217.7,442.3 217.7,441.1 217.6,440.3 217.6,439.2 217.5,438.4 217.3,437.3 217.2,436.5 217.1,435.4 216.9,434.7 216.7,433.6 216.9,433.1 217.8,432.6 218.4,432.3 219.3,431.7 219.9,431.8 220.6,432.6 221.2,433.2 222,433.9 222.6,434.4 223.5,435.1 224.1,435.6 225,436.3 225.7,436.7 226.6,437.4 227.3,437.8 228.3,438.5 228.8,438.6 229.4,438.2 229.8,438 230.4,437.6 230.7,437.4 231.3,437 231.5,436.5 231.3,435.3 231.2,434.5 231,433.3 230.9,432.6 230.6,431.4 230.5,430.7 230.2,429.6 230,428.8 229.6,427.8 229.4,427.1 229,426 229.2,425.5 230,424.9 230.6,424.5 231.4,423.8 232,423.9 232.8,424.5 233.4,425 234.4,425.6 235,426 236,426.6 236.6,427 237.7,427.6 238.3,428 239.4,428.5 240.1,428.8 241.2,429.3 241.7,429.4 242.3,428.9 242.6,428.6 243.1,428.2 243.5,427.9 244,427.5 244.1,426.9 243.7,425.8 243.5,425 243.2,423.9 243,423.1 242.6,422 242.3,421.3 241.9,420.3 241.6,419.6 241.1,418.5 240.8,417.9 240.3,416.9 240.3,416.3 241.1,415.6 241.6,415.1 242.3,414.4 242.9,414.4 243.9,414.9 244.5,415.3 245.5,415.8 246.2,416.1 247.2,416.6 248,416.9 249,417.3 249.8,417.6 250.9,418 251.6,418.2 252.8,418.6 253.3,418.5 253.8,418 254.1,417.7 254.5,417.2 254.8,416.9 255.3,416.4 255.3,415.8 254.8,414.7 254.5,414 254.1,412.9 253.7,412.2 253.2,411.2 252.8,410.5 252.3,409.5 251.9,408.8 251.3,407.9 250.9,407.3 250.2,406.4 250.2,405.8 250.9,405 251.3,404.5 252,403.6 252.5,403.5 253.5,403.9 254.2,404.2 255.3,404.6 256,404.8 257.1,405.2 257.9,405.4 259,405.7 259.7,405.8 260.9,406.1 261.7,406.2 262.9,406.4 263.4,406.3 263.8,405.7 264,405.4 264.4,404.8 264.7,404.5 265.1,403.9 265,403.4 264.4,402.3 264,401.6 263.4,400.6 263,400 262.3,399 261.9,398.4 261.2,397.5 260.7,396.9 260,396 259.5,395.4 258.7,394.6 258.7,394.1 259.2,393.2 259.6,392.6 260.1,391.7 260.6,391.5 261.7,391.8 262.4,392 263.5,392.2 264.3,392.4 265.4,392.5 266.2,392.6 267.3,392.8 268.1,392.9 269.3,392.9 270.1,393 271.3,393 271.8,392.8 272.1,392.3 272.3,391.9 272.6,391.3 272.8,390.9 273.1,390.3 273,389.7 272.3,388.8 271.8,388.2 271,387.2 270.5,386.6 269.7,385.8 269.2,385.2 268.4,384.4 267.9,383.9 267.1,383.1 266.5,382.6 265.6,381.9 265.5,381.3 265.9,380.4 266.2,379.8 266.6,378.8 267.1,378.5 268.2,378.7 269,378.8 270.1,378.9 270.8,378.9 272,378.9 272.7,379 273.9,378.9 274.7,378.9 275.9,378.8 276.7,378.8 277.9,378.7 278.3,378.4 278.6,377.8 278.7,377.4 279,376.7 279.1,376.3 279.3,375.7 279.1,375.2 278.3,374.3 277.7,373.8 276.9,373 276.3,372.4 275.4,371.7 274.8,371.2 273.9,370.5 273.3,370 272.4,369.4 271.8,368.9 270.8,368.4 270.6,367.8 270.9,366.8 271.1,366.2 271.4,365.2 271.8,364.8 273,364.9 273.7,364.8 274.8,364.8 275.6,364.7 276.7,364.6 277.5,364.5 278.6,364.3 279.4,364.2 280.6,364 281.3,363.8 282.5,363.6 283,363.3 283.1,362.6 283.2,362.2 283.4,361.5 283.4,361.1 283.6,360.4 283.3,359.9 282.4,359.2 281.7,358.7 280.8,358 280.1,357.6 279.2,356.9 278.5,356.5 277.5,355.9 276.9,355.6 275.9,355 275.2,354.7 274.2,354.3 273.9,353.8 274.1,352.7 274.2,352.1 274.3,351 274.7,350.6 275.8,350.5 276.6,350.4 277.7,350.2 278.4,350 279.6,349.8 280.3,349.6 281.4,349.3 282.2,349 283.3,348.7 284,348.4 285.2,348 285.6,347.6 285.6,346.9 285.7,346.5 285.7,345.8 285.8,345.4 285.8,344.7 285.5,344.3 284.4,343.7 283.8,343.3 282.7,342.7 282,342.4 281,341.9 280.3,341.5 279.2,341.1 278.5,340.8 277.5,340.4 276.8,340.2 275.7,339.8 275.3,339.4 275.4,338.4Z" fill="none" stroke="#000" stroke-width="2.65" stroke-linejoin="round"/>
<circle cx="165" cy="335.6" r="73.6" fill="none" stroke="#000" stroke-width="2.75"/>
<circle cx="165" cy="335.6" r="34.5" fill="none" stroke="#000" stroke-width="2.75"/>
<circle cx="165" cy="335.6" r="53.5" fill="none" stroke="#000" stroke-width="1" stroke-dasharray="8 7 2.5 6.5" stroke-dashoffset="15.4"/>
<path d="M550.4,332.8 550.4,331.8 550.7,331.4 551.8,331 552.5,330.8 553.6,330.4 554.3,330.1 555.3,329.7 556,329.3 557.1,328.8 557.8,328.5 558.8,327.9 559.5,327.5 560.5,326.9 560.9,326.5 560.8,325.8 560.8,325.4 560.7,324.7 560.7,324.3 560.6,323.6 560.2,323.2 559.1,322.8 558.3,322.5 557.2,322.2 556.5,321.9 555.3,321.6 554.6,321.4 553.5,321.2 552.7,321 551.6,320.8 550.9,320.7 549.8,320.6 549.4,320.2 549.2,319.1 549.1,318.5 549,317.4 549.2,316.9 550.2,316.5 550.9,316.2 551.9,315.6 552.6,315.3 553.6,314.7 554.2,314.3 555.2,313.6 555.8,313.2 556.8,312.5 557.4,312 558.4,311.3 558.6,310.8 558.5,310.1 558.4,309.7 558.3,309 558.2,308.6 558,307.9 557.6,307.6 556.4,307.4 555.6,307.2 554.5,307 553.7,306.9 552.5,306.7 551.8,306.6 550.6,306.5 549.9,306.4 548.7,306.4 548,306.3 546.9,306.4 546.4,306 546.1,305 546,304.4 545.7,303.4 545.9,302.8 546.8,302.3 547.4,301.8 548.4,301.2 549,300.7 549.9,300 550.4,299.5 551.3,298.8 551.9,298.2 552.8,297.4 553.3,296.9 554.2,296 554.4,295.5 554.2,294.9 554,294.5 553.8,293.8 553.6,293.4 553.4,292.8 552.9,292.5 551.7,292.4 550.9,292.4 549.7,292.3 549,292.3 547.8,292.2 547,292.3 545.9,292.3 545.1,292.3 544,292.4 543.3,292.5 542.2,292.7 541.7,292.4 541.2,291.4 541,290.8 540.5,289.9 540.7,289.3 541.5,288.6 542.1,288.1 542.9,287.3 543.5,286.8 544.3,286 544.8,285.4 545.6,284.6 546.1,284 546.8,283 547.3,282.4 548,281.5 548.2,280.9 547.9,280.3 547.7,279.9 547.4,279.3 547.1,278.9 546.8,278.4 546.3,278.2 545.1,278.2 544.3,278.3 543.2,278.3 542.4,278.4 541.2,278.6 540.5,278.7 539.3,278.8 538.6,279 537.5,279.2 536.8,279.4 535.7,279.7 535.1,279.5 534.6,278.6 534.3,278 533.7,277.1 533.8,276.6 534.5,275.8 535,275.2 535.8,274.3 536.2,273.7 536.9,272.8 537.4,272.2 538,271.2 538.4,270.6 539.1,269.6 539.5,268.9 540,267.8 540.1,267.3 539.7,266.7 539.5,266.4 539.1,265.8 538.8,265.5 538.4,264.9 537.9,264.8 536.7,265 536,265.1 534.8,265.4 534,265.5 532.9,265.8 532.2,266 531.1,266.4 530.3,266.6 529.3,267 528.6,267.3 527.6,267.7 527,267.6 526.4,266.7 525.9,266.2 525.3,265.4 525.3,264.8 525.9,263.9 526.3,263.3 526.9,262.4 527.3,261.7 527.9,260.7 528.2,260 528.8,259 529.1,258.3 529.6,257.2 529.9,256.5 530.3,255.4 530.3,254.8 529.9,254.3 529.6,254 529.1,253.5 528.8,253.2 528.4,252.7 527.8,252.6 526.7,253 525.9,253.2 524.8,253.6 524.1,253.9 523,254.3 522.3,254.6 521.2,255.1 520.6,255.4 519.6,255.9 518.9,256.3 518,256.8 517.4,256.8 516.6,256.1 516.1,255.6 515.4,254.9 515.3,254.3 515.8,253.3 516.2,252.7 516.6,251.6 516.9,250.9 517.4,249.9 517.6,249.2 518,248.1 518.2,247.3 518.6,246.2 518.8,245.4 519.1,244.3 519,243.7 518.5,243.3 518.2,243 517.7,242.6 517.3,242.3 516.8,241.8 516.3,241.9 515.2,242.4 514.4,242.7 513.4,243.2 512.7,243.6 511.7,244.2 511,244.6 510,245.2 509.4,245.6 508.5,246.2 507.9,246.7 507,247.3 506.4,247.4 505.6,246.7 505,246.3 504.2,245.7 504.1,245.2 504.4,244.1 504.7,243.4 505,242.4 505.2,241.6 505.5,240.5 505.7,239.8 505.9,238.6 506.1,237.9 506.2,236.7 506.4,235.9 506.5,234.7 506.4,234.2 505.8,233.8 505.4,233.6 504.8,233.2 504.5,233 503.9,232.6 503.4,232.7 502.3,233.4 501.7,233.8 500.7,234.5 500.1,234.9 499.1,235.6 498.5,236.1 497.6,236.8 497.1,237.3 496.2,238 495.7,238.6 494.9,239.4 494.4,239.5 493.4,238.9 492.8,238.6 491.9,238.1 491.7,237.6 492,236.5 492.1,235.8 492.3,234.7 492.4,233.9 492.5,232.8 492.6,232 492.7,230.9 492.7,230.1 492.8,228.9 492.8,228.1 492.8,226.9 492.6,226.4 491.9,226.1 491.5,225.9 490.9,225.6 490.5,225.4 489.9,225.2 489.4,225.3 488.5,226.1 487.9,226.6 487,227.4 486.4,227.9 485.6,228.7 485,229.3 484.3,230.1 483.7,230.7 483,231.5 482.5,232.1 481.9,233 481.3,233.2 480.4,232.8 479.7,232.5 478.8,232.2 478.5,231.7 478.6,230.6 478.6,229.8 478.7,228.7 478.7,228 478.7,226.8 478.6,226 478.6,224.9 478.5,224.1 478.4,222.9 478.3,222.1 478.1,220.9 477.9,220.5 477.2,220.3 476.8,220.1 476.1,219.9 475.7,219.8 475.1,219.6 474.6,219.8 473.8,220.7 473.2,221.3 472.5,222.2 472,222.8 471.2,223.7 470.8,224.3 470.1,225.3 469.7,225.9 469.1,226.8 468.7,227.5 468.1,228.4 467.6,228.7 466.6,228.4 465.9,228.2 464.9,228 464.6,227.6 464.5,226.5 464.5,225.7 464.4,224.6 464.3,223.8 464.1,222.7 464,221.9 463.8,220.8 463.6,220 463.3,218.9 463.2,218.1 462.8,217 462.5,216.5 461.8,216.4 461.4,216.3 460.7,216.2 460.3,216.1 459.6,216 459.2,216.3 458.5,217.3 458,217.9 457.4,218.9 457,219.6 456.4,220.6 456,221.3 455.4,222.3 455.1,222.9 454.6,224 454.3,224.6 453.9,225.7 453.4,226 452.4,225.9 451.7,225.8 450.7,225.7 450.3,225.3 450.1,224.2 449.9,223.5 449.7,222.4 449.5,221.6 449.2,220.5 449,219.8 448.6,218.7 448.3,217.9 447.9,216.8 447.6,216.1 447.2,215 446.8,214.6 446.1,214.6 445.6,214.6 445,214.5 444.5,214.5 443.9,214.5 443.4,214.8 442.9,215.9 442.5,216.6 442,217.7 441.7,218.4 441.2,219.4 440.9,220.2 440.5,221.2 440.3,221.9 439.9,223 439.7,223.7 439.4,224.8 439,225.2 438,225.2 437.3,225.2 436.2,225.2 435.8,224.9 435.5,223.8 435.2,223.1 434.8,222.1 434.5,221.4 434.1,220.3 433.8,219.6 433.3,218.6 432.9,217.9 432.3,216.8 432,216.1 431.3,215.1 430.9,214.8 430.2,214.8 429.8,214.9 429.1,214.9 428.7,215 428,215 427.6,215.4 427.2,216.5 427,217.3 426.6,218.4 426.4,219.2 426,220.3 425.8,221 425.6,222.1 425.4,222.9 425.2,224 425.1,224.7 425,225.8 424.6,226.2 423.6,226.4 422.9,226.5 421.9,226.7 421.4,226.4 420.9,225.4 420.6,224.7 420,223.7 419.7,223 419.1,222.1 418.7,221.4 418,220.4 417.6,219.8 416.9,218.8 416.4,218.2 415.7,217.3 415.2,217 414.6,217.1 414.1,217.2 413.5,217.4 413,217.5 412.4,217.6 412.1,218.1 411.8,219.2 411.6,220 411.4,221.2 411.3,221.9 411.1,223.1 411,223.9 410.9,225 410.8,225.8 410.8,226.9 410.8,227.6 410.8,228.7 410.5,229.2 409.5,229.5 408.8,229.7 407.8,230 407.3,229.8 406.7,228.8 406.3,228.2 405.6,227.3 405.2,226.7 404.5,225.8 404,225.2 403.2,224.3 402.7,223.7 401.9,222.9 401.3,222.3 400.5,221.4 400,221.2 399.3,221.5 398.9,221.6 398.3,221.8 397.8,222 397.2,222.2 397,222.7 396.8,223.9 396.8,224.7 396.7,225.9 396.7,226.7 396.7,227.8 396.7,228.6 396.7,229.7 396.8,230.5 396.8,231.6 396.9,232.4 397.1,233.5 396.8,234 395.9,234.4 395.2,234.7 394.3,235.1 393.7,234.9 393,234.1 392.5,233.5 391.8,232.7 391.2,232.2 390.4,231.4 389.9,230.8 389,230.1 388.4,229.5 387.5,228.8 386.8,228.3 385.9,227.6 385.4,227.4 384.8,227.8 384.4,228 383.8,228.3 383.4,228.5 382.8,228.8 382.6,229.3 382.6,230.5 382.7,231.3 382.8,232.5 382.8,233.3 383,234.4 383.1,235.2 383.3,236.3 383.4,237 383.6,238.2 383.8,238.9 384.1,239.9 383.9,240.5 383,241 382.4,241.4 381.6,241.9 381,241.8 380.2,241.1 379.6,240.6 378.8,239.9 378.2,239.4 377.2,238.7 376.6,238.3 375.6,237.6 375,237.2 374,236.6 373.3,236.2 372.3,235.6 371.7,235.5 371.2,235.9 370.8,236.1 370.2,236.5 369.9,236.8 369.3,237.2 369.2,237.7 369.4,238.9 369.6,239.7 369.8,240.8 370,241.6 370.3,242.7 370.5,243.5 370.8,244.6 371,245.3 371.4,246.3 371.7,247 372.1,248.1 372,248.6 371.2,249.3 370.6,249.7 369.8,250.3 369.3,250.3 368.4,249.7 367.7,249.3 366.8,248.7 366.1,248.3 365.1,247.7 364.4,247.4 363.4,246.9 362.7,246.5 361.6,246 360.9,245.7 359.8,245.3 359.2,245.3 358.7,245.7 358.4,246 357.9,246.5 357.6,246.8 357.1,247.3 357,247.8 357.4,248.9 357.6,249.7 358,250.8 358.3,251.5 358.7,252.6 359,253.3 359.5,254.4 359.8,255.1 360.3,256.1 360.7,256.7 361.3,257.7 361.2,258.2 360.5,259 360,259.5 359.3,260.2 358.7,260.3 357.8,259.8 357.1,259.5 356.1,259 355.4,258.7 354.3,258.3 353.6,258 352.5,257.6 351.7,257.4 350.6,257 349.8,256.8 348.7,256.5 348.1,256.6 347.7,257.1 347.4,257.5 347,258 346.7,258.3 346.3,258.8 346.3,259.4 346.8,260.5 347.1,261.2 347.7,262.2 348,262.9 348.6,263.9 349,264.6 349.6,265.6 350,266.2 350.6,267.1 351.1,267.7 351.8,268.6 351.8,269.2 351.2,270 350.8,270.6 350.2,271.4 349.6,271.6 348.6,271.2 347.9,270.9 346.8,270.6 346.1,270.4 344.9,270.1 344.2,269.9 343,269.7 342.3,269.6 341.1,269.4 340.3,269.3 339.1,269.1 338.6,269.3 338.2,269.8 338,270.2 337.6,270.8 337.4,271.2 337,271.7 337.1,272.3 337.8,273.3 338.2,273.9 338.9,274.9 339.3,275.6 340,276.5 340.5,277.1 341.2,278 341.7,278.6 342.5,279.4 343,279.9 343.8,280.7 343.9,281.3 343.4,282.2 343,282.8 342.5,283.7 342,283.9 340.9,283.7 340.2,283.5 339.1,283.3 338.3,283.2 337.2,283.1 336.4,283 335.3,282.9 334.5,282.9 333.3,282.9 332.5,282.9 331.3,282.9 330.8,283.1 330.5,283.7 330.3,284.1 330.1,284.7 329.9,285.1 329.6,285.7 329.8,286.2 330.5,287.2 331,287.8 331.8,288.6 332.4,289.2 333.2,290 333.7,290.6 334.5,291.4 335.1,291.9 336,292.6 336.6,293.1 337.4,293.7 337.6,294.3 337.2,295.3 337,295.9 336.6,296.9 336.1,297.2 335,297 334.3,297 333.1,297 332.4,296.9 331.2,297 330.5,297 329.3,297.1 328.5,297.1 327.3,297.2 326.6,297.3 325.4,297.5 324.9,297.8 324.7,298.4 324.6,298.8 324.4,299.5 324.2,299.9 324,300.6 324.3,301 325.1,301.9 325.7,302.4 326.6,303.2 327.2,303.7 328.1,304.4 328.7,304.8 329.7,305.5 330.3,305.9 331.2,306.6 331.9,306.9 332.9,307.5 333.1,308 332.8,309 332.7,309.7 332.4,310.7 332,311 330.9,311.1 330.1,311.1 329,311.2 328.3,311.3 327.1,311.5 326.4,311.6 325.2,311.8 324.5,312 323.3,312.3 322.5,312.5 321.4,312.8 321,313.1 320.8,313.8 320.7,314.2 320.6,314.9 320.6,315.3 320.4,316 320.7,316.5 321.7,317.1 322.4,317.6 323.4,318.2 324,318.7 325,319.3 325.7,319.6 326.7,320.2 327.4,320.5 328.4,321 329.1,321.3 330.1,321.7 330.4,322.2 330.3,323.2 330.2,323.9 330.1,325 329.7,325.4 328.6,325.5 327.9,325.7 326.8,325.9 326,326.1 324.9,326.4 324.2,326.7 323.1,327 322.4,327.3 321.3,327.7 320.5,328 319.4,328.5 319,328.9 319,329.5 319,330 318.9,330.7 318.9,331.1 318.9,331.8 319.3,332.2 320.3,332.7 321,333.1 322.1,333.6 322.8,333.9 323.9,334.4 324.6,334.7 325.7,335.1 326.4,335.4 327.4,335.7 328.2,335.9 329.2,336.2 329.6,336.6 329.6,337.7 329.6,338.4 329.7,339.4 329.3,339.8 328.2,340.2 327.5,340.4 326.5,340.8 325.8,341.1 324.7,341.5 324,341.9 323,342.4 322.3,342.7 321.2,343.3 320.6,343.7 319.5,344.3 319.2,344.7 319.2,345.4 319.3,345.8 319.3,346.5 319.4,346.9 319.4,347.6 319.8,348 321,348.4 321.7,348.7 322.8,349 323.6,349.3 324.7,349.6 325.4,349.8 326.6,350 327.3,350.2 328.4,350.4 329.2,350.5 330.3,350.6 330.7,351 330.8,352.1 330.9,352.7 331.1,353.8 330.8,354.3 329.8,354.7 329.1,355 328.1,355.6 327.5,355.9 326.5,356.5 325.8,356.9 324.9,357.6 324.2,358 323.3,358.7 322.6,359.2 321.7,359.9 321.4,360.4 321.6,361.1 321.6,361.5 321.8,362.2 321.9,362.6 322,363.3 322.5,363.6 323.7,363.8 324.4,364 325.6,364.2 326.4,364.3 327.5,364.5 328.3,364.6 329.4,364.7 330.2,364.8 331.3,364.8 332,364.9 333.2,364.8 333.6,365.2 333.9,366.2 334.1,366.8 334.4,367.8 334.2,368.4 333.2,368.9 332.6,369.4 331.7,370 331.1,370.5 330.2,371.2 329.6,371.7 328.7,372.4 328.1,373 327.3,373.8 326.7,374.3 325.9,375.2 325.7,375.7 325.9,376.3 326,376.7 326.3,377.4 326.4,377.8 326.7,378.4 327.1,378.7 328.3,378.8 329.1,378.8 330.3,378.9 331.1,378.9 332.3,379 333,378.9 334.2,378.9 334.9,378.9 336,378.8 336.8,378.7 337.9,378.5 338.4,378.8 338.8,379.8 339.1,380.4 339.5,381.3 339.4,381.9 338.5,382.6 337.9,383.1 337.1,383.9 336.6,384.4 335.8,385.2 335.3,385.8 334.5,386.6 334,387.2 333.2,388.2 332.7,388.8 332,389.7 331.9,390.3 332.2,390.9 332.4,391.3 332.7,391.9 332.9,392.3 333.2,392.8 333.7,393 334.9,393 335.7,392.9 336.9,392.9 337.7,392.8 338.8,392.6 339.6,392.5 340.7,392.4 341.5,392.2 342.6,392 343.3,391.8 344.4,391.5 344.9,391.7 345.4,392.6 345.8,393.2 346.3,394.1 346.3,394.6 345.5,395.4 345,396 344.3,396.9 343.8,397.5 343.1,398.4 342.7,399 342,400 341.6,400.6 341,401.6 340.6,402.3 340,403.4 339.9,403.9 340.3,404.5 340.6,404.8 341,405.4 341.2,405.7 341.6,406.3 342.1,406.4 343.3,406.2 344.1,406.1 345.3,405.8 346,405.7 347.1,405.4 347.9,405.2 349,404.8 349.7,404.6 350.8,404.2 351.5,403.9 352.5,403.5 353,403.6 353.7,404.5 354.1,405 354.8,405.8 354.8,406.4 354.1,407.3 353.7,407.9 353.1,408.8 352.7,409.5 352.2,410.5 351.8,411.2 351.3,412.2 350.9,412.9 350.5,414 350.2,414.7 349.7,415.8 349.7,416.4 350.2,416.9 350.5,417.2 350.9,417.7 351.2,418 351.7,418.5 352.2,418.6 353.4,418.2 354.1,418 355.2,417.6 356,417.3 357,416.9 357.8,416.6 358.8,416.1 359.5,415.8 360.5,415.3 361.1,414.9 362.1,414.4 362.7,414.4 363.4,415.1 363.9,415.6 364.7,416.3 364.7,416.9 364.2,417.9 363.9,418.5 363.4,419.6 363.1,420.3 362.7,421.3 362.4,422 362,423.1 361.8,423.9 361.5,425 361.3,425.8 360.9,426.9 361,427.5 361.5,427.9 361.9,428.2 362.4,428.6 362.7,428.9 363.3,429.4 363.8,429.3 364.9,428.8 365.6,428.5 366.7,428 367.3,427.6 368.4,427 369,426.6 370,426 370.6,425.6 371.6,425 372.2,424.5 373,423.9 373.6,423.8 374.4,424.5 375,424.9 375.8,425.5 376,426 375.6,427.1 375.4,427.8 375,428.8 374.8,429.6 374.5,430.7 374.4,431.4 374.1,432.6 374,433.3 373.8,434.5 373.7,435.3 373.5,436.5 373.7,437 374.3,437.4 374.6,437.6 375.2,438 375.6,438.2 376.2,438.6 376.7,438.5 377.7,437.8 378.4,437.4 379.3,436.7 380,436.3 380.9,435.6 381.5,435.1 382.4,434.4 383,433.9 383.8,433.2 384.4,432.6 385.1,431.8 385.7,431.7 386.6,432.3 387.2,432.6 388.1,433.1 388.3,433.6 388.1,434.7 387.9,435.4 387.8,436.5 387.7,437.3 387.5,438.4 387.4,439.2 387.4,440.3 387.3,441.1 387.3,442.3 387.3,443.1 387.3,444.3 387.5,444.8 388.1,445.1 388.5,445.3 389.1,445.6 389.5,445.8 390.1,446 390.7,445.9 391.6,445.1 392.2,444.6 393.1,443.8 393.6,443.3 394.5,442.5 395,441.9 395.8,441.1 396.3,440.5 397,439.7 397.5,439.1 398.2,438.2 398.7,438 399.7,438.4 400.3,438.7 401.3,439 401.6,439.5 401.5,440.6 401.4,441.4 401.4,442.5 401.4,443.2 401.4,444.4 401.4,445.2 401.5,446.3 401.5,447.1 401.7,448.3 401.8,449.1 401.9,450.3 402.2,450.7 402.8,450.9 403.3,451.1 403.9,451.3 404.3,451.4 405,451.6 405.5,451.4 406.3,450.5 406.8,449.9 407.6,449 408.1,448.4 408.8,447.5 409.3,446.9 409.9,445.9 410.4,445.3 411,444.4 411.4,443.7 411.9,442.8 412.4,442.5 413.4,442.8 414.1,443 415.1,443.2 415.5,443.6 415.5,444.7 415.6,445.5 415.7,446.6 415.8,447.4 415.9,448.5 416,449.3 416.3,450.4 416.4,451.2 416.7,452.3 416.9,453.1 417.2,454.2 417.5,454.7 418.2,454.8 418.7,454.9 419.3,455 419.8,455.1 420.4,455.2 420.9,454.9 421.6,453.9 422,453.3 422.7,452.3 423.1,451.6 423.7,450.6 424.1,449.9 424.6,448.9 424.9,448.3 425.4,447.2 425.7,446.6 426.1,445.5 426.6,445.2 427.7,445.3 428.3,445.4 429.4,445.5 429.8,445.9 430,447 430.1,447.7 430.4,448.8 430.5,449.6 430.9,450.7 431.1,451.4 431.5,452.5 431.7,453.3 432.1,454.4 432.4,455.1 432.9,456.2 433.3,456.6 434,456.6 434.4,456.6 435.1,456.7 435.5,456.7 436.2,456.7 436.6,456.4 437.2,455.3 437.5,454.6 438,453.5 438.4,452.8 438.8,451.8 439.1,451 439.5,450 439.8,449.3 440.1,448.2 440.3,447.5 440.6,446.4 441.1,446 442.1,446 442.8,446 443.8,446 444.3,446.3 444.6,447.4 444.8,448.1 445.2,449.1 445.5,449.8 446,450.9 446.3,451.6 446.8,452.6 447.1,453.3 447.7,454.4 448.1,455.1 448.7,456.1 449.1,456.4 449.8,456.4 450.3,456.3 450.9,456.3 451.4,456.2 452,456.2 452.4,455.8 452.8,454.7 453.1,453.9 453.5,452.8 453.7,452 454,450.9 454.2,450.2 454.5,449.1 454.6,448.3 454.8,447.2 454.9,446.5 455.1,445.4 455.5,445 456.5,444.8 457.2,444.7 458.2,444.5 458.7,444.8 459.1,445.8 459.5,446.5 460,447.5 460.4,448.2 461,449.1 461.4,449.8 462,450.8 462.5,451.4 463.1,452.4 463.6,453 464.4,453.9 464.8,454.2 465.5,454.1 465.9,454 466.6,453.8 467,453.7 467.7,453.6 468,453.1 468.3,452 468.4,451.2 468.6,450 468.8,449.3 468.9,448.1 469,447.3 469.1,446.2 469.2,445.4 469.3,444.3 469.3,443.6 469.3,442.5 469.6,442 470.6,441.7 471.3,441.5 472.3,441.2 472.8,441.4 473.4,442.4 473.8,443 474.4,443.9 474.9,444.5 475.6,445.4 476.1,446 476.9,446.9 477.4,447.5 478.2,448.3 478.7,448.9 479.6,449.8 480.1,450 480.7,449.7 481.2,449.6 481.8,449.4 482.2,449.2 482.8,449 483.1,448.5 483.2,447.3 483.3,446.5 483.3,445.3 483.4,444.5 483.4,443.4 483.4,442.6 483.3,441.5 483.3,440.7 483.2,439.6 483.1,438.8 483,437.7 483.2,437.2 484.2,436.8 484.8,436.5 485.8,436.1 486.3,436.3 487,437.1 487.5,437.7 488.3,438.5 488.8,439 489.6,439.8 490.2,440.4 491.1,441.1 491.7,441.7 492.6,442.4 493.2,442.9 494.2,443.6 494.7,443.8 495.3,443.4 495.7,443.2 496.3,442.9 496.7,442.7 497.3,442.4 497.5,441.9 497.4,440.7 497.4,439.9 497.3,438.7 497.2,437.9 497.1,436.8 497,436 496.8,434.9 496.6,434.2 496.4,433 496.2,432.3 495.9,431.3 496.1,430.7 497,430.2 497.6,429.8 498.5,429.3 499.1,429.4 499.9,430.1 500.4,430.6 501.3,431.3 501.9,431.8 502.8,432.5 503.4,432.9 504.4,433.6 505.1,434 506.1,434.6 506.8,435 507.8,435.6 508.3,435.7 508.9,435.3 509.3,435.1 509.8,434.7 510.2,434.4 510.7,434 510.8,433.5 510.6,432.3 510.5,431.5 510.3,430.4 510.1,429.6 509.8,428.5 509.6,427.7 509.3,426.6 509,425.9 508.6,424.9 508.4,424.2 507.9,423.1 508.1,422.6 508.9,421.9 509.4,421.5 510.2,420.9 510.8,420.9 511.7,421.5 512.3,421.9 513.3,422.5 513.9,422.9 514.9,423.5 515.6,423.8 516.6,424.3 517.3,424.7 518.4,425.2 519.2,425.5 520.3,425.9 520.8,425.9 521.3,425.5 521.6,425.2 522.1,424.7 522.5,424.4 523,423.9 523,423.4 522.7,422.3 522.4,421.5 522,420.4 521.7,419.7 521.3,418.6 521,417.9 520.5,416.8 520.2,416.1 519.7,415.1 519.3,414.5 518.8,413.5 518.8,413 519.6,412.2 520,411.7 520.7,411 521.3,410.9 522.3,411.4 523,411.7 524,412.2 524.7,412.5 525.7,412.9 526.5,413.2 527.6,413.6 528.3,413.8 529.4,414.2 530.2,414.4 531.4,414.7 531.9,414.6 532.3,414.1 532.6,413.7 533.1,413.2 533.4,412.9 533.8,412.4 533.8,411.8 533.3,410.7 532.9,410 532.4,409 532,408.3 531.5,407.3 531.1,406.6 530.5,405.6 530,405 529.4,404.1 529,403.5 528.3,402.6 528.3,402 528.9,401.2 529.3,400.6 529.9,399.8 530.4,399.6 531.5,400 532.2,400.3 533.3,400.6 534,400.8 535.1,401.1 535.9,401.3 537,401.5 537.8,401.6 538.9,401.8 539.7,401.9 540.9,402.1 541.4,401.9 541.8,401.4 542,401 542.4,400.4 542.6,400 543,399.5 542.9,398.9 542.3,397.9 541.8,397.3 541.2,396.3 540.7,395.6 540,394.7 539.6,394.1 538.8,393.2 538.3,392.6 537.6,391.8 537.1,391.3 536.3,390.5 536.2,389.9 536.7,389 537,388.4 537.5,387.5 538,387.3 539.1,387.5 539.8,387.7 541,387.9 541.7,388 542.8,388.1 543.6,388.2 544.8,388.3 545.6,388.3 546.7,388.3 547.5,388.3 548.7,388.3 549.2,388.1 549.5,387.5 549.7,387.1 550,386.5 550.2,386.1 550.5,385.5 550.3,385 549.5,384 549,383.4 548.2,382.6 547.7,382 546.9,381.2 546.3,380.6 545.5,379.8 544.9,379.3 544.1,378.6 543.5,378.1 542.6,377.5 542.4,376.9 542.8,375.9 543.1,375.3 543.4,374.3 543.9,374 545,374.2 545.8,374.2 546.9,374.2 547.7,374.3 548.8,374.2 549.6,374.2 550.7,374.1 551.5,374.1 552.7,374 553.5,373.9 554.7,373.7 555.1,373.4 555.4,372.8 555.5,372.4 555.7,371.7 555.8,371.3 556,370.6 555.8,370.2 554.9,369.3 554.3,368.8 553.4,368 552.8,367.5 551.9,366.8 551.3,366.4 550.4,365.7 549.7,365.3 548.8,364.6 548.2,364.3 547.2,363.7 547,363.2 547.2,362.2 547.4,361.5 547.6,360.5 548.1,360.2 549.2,360.1 549.9,360.1 551,360 551.8,359.9 552.9,359.7 553.7,359.6 554.8,359.4 555.6,359.2 556.7,358.9 557.5,358.7 558.7,358.4 559.1,358.1 559.2,357.4 559.3,357 559.4,356.3 559.5,355.9 559.6,355.2 559.3,354.7 558.3,354.1 557.7,353.6 556.7,353 556,352.5 555,351.9 554.4,351.6 553.4,351 552.7,350.7 551.7,350.2 551,349.9 549.9,349.5 549.6,349 549.8,348 549.8,347.3 549.9,346.2 550.3,345.8 551.4,345.7 552.2,345.5 553.3,345.3 554,345.1 555.1,344.8 555.8,344.5 557,344.2 557.7,343.9 558.8,343.5 559.5,343.2 560.6,342.7 561,342.3 561.1,341.7 561.1,341.2 561.1,340.5 561.1,340.1 561.1,339.4 560.8,339 559.7,338.5 559,338.1 558,337.6 557.3,337.3 556.2,336.8 555.5,336.5 554.4,336.1 553.7,335.8 552.6,335.5 551.9,335.3 550.8,335 550.5,334.6 550.4,333.5Z" fill="none" stroke="#000" stroke-width="2.65" stroke-linejoin="round"/>
<circle cx="440" cy="335.6" r="73.6" fill="none" stroke="#000" stroke-width="2.75"/>
<circle cx="440" cy="335.6" r="34.5" fill="none" stroke="#000" stroke-width="2.75"/>
<circle cx="440" cy="335.6" r="53.5" fill="none" stroke="#000" stroke-width="1" stroke-dasharray="8 7 2.5 6.5" stroke-dashoffset="15.4"/>
<path d="M412.7,580.7 412.8,579.6 413.2,579.2 414.2,579 415,578.8 416.1,578.5 416.8,578.3 417.9,577.9 418.6,577.7 419.7,577.3 420.4,577 421.5,576.5 422.2,576.2 423.3,575.7 423.7,575.3 423.7,574.6 423.7,574.1 423.7,573.5 423.7,573 423.7,572.3 423.3,571.9 422.2,571.4 421.5,571.1 420.4,570.6 419.7,570.3 418.6,569.9 417.9,569.7 416.8,569.3 416.1,569.1 415,568.8 414.2,568.6 413.2,568.4 412.8,568 412.7,566.9 412.7,566.2 412.6,565.2 412.9,564.7 414,564.4 414.7,564.1 415.7,563.7 416.4,563.3 417.4,562.8 418.1,562.5 419.1,561.9 419.8,561.6 420.8,560.9 421.5,560.5 422.5,559.9 422.8,559.4 422.7,558.8 422.7,558.3 422.6,557.6 422.5,557.2 422.4,556.5 422,556.2 420.9,555.8 420.1,555.6 419,555.3 418.2,555.1 417.1,554.8 416.3,554.6 415.2,554.4 414.5,554.3 413.4,554.1 412.6,554.1 411.5,554 411.1,553.6 410.9,552.6 410.7,551.9 410.5,550.9 410.8,550.4 411.8,549.9 412.4,549.5 413.4,549 414.1,548.6 415,547.9 415.6,547.5 416.6,546.8 417.2,546.3 418.1,545.6 418.8,545.1 419.7,544.3 419.9,543.9 419.7,543.2 419.6,542.8 419.5,542.1 419.3,541.7 419.2,541 418.7,540.7 417.5,540.5 416.7,540.4 415.6,540.2 414.8,540.1 413.6,540 412.9,539.9 411.7,539.9 411,539.9 409.8,539.8 409.1,539.9 408,539.9 407.5,539.6 407.2,538.6 407,538 406.6,537 406.8,536.5 407.7,535.8 408.3,535.4 409.2,534.7 409.8,534.2 410.7,533.5 411.2,533 412.1,532.2 412.6,531.6 413.5,530.8 414,530.2 414.8,529.3 415,528.8 414.8,528.2 414.6,527.7 414.3,527.1 414.2,526.7 413.9,526.1 413.4,525.9 412.2,525.8 411.4,525.8 410.2,525.7 409.4,525.8 408.3,525.8 407.5,525.8 406.4,525.9 405.6,526 404.5,526.1 403.8,526.2 402.7,526.4 402.1,526.2 401.7,525.3 401.4,524.6 400.9,523.7 401,523.2 401.9,522.4 402.4,521.9 403.2,521.1 403.7,520.5 404.5,519.7 405,519.1 405.7,518.2 406.2,517.6 406.9,516.6 407.4,516 408,515 408.2,514.5 407.8,513.9 407.6,513.5 407.3,512.9 407,512.5 406.7,512 406.2,511.8 405,511.9 404.2,512 403,512.1 402.3,512.2 401.1,512.4 400.4,512.5 399.2,512.8 398.5,512.9 397.4,513.2 396.7,513.4 395.6,513.8 395.1,513.6 394.5,512.7 394.1,512.2 393.5,511.3 393.6,510.7 394.3,509.9 394.8,509.3 395.5,508.4 395.9,507.8 396.6,506.8 397,506.2 397.6,505.2 398,504.5 398.6,503.5 398.9,502.8 399.5,501.7 399.5,501.2 399.1,500.7 398.8,500.3 398.4,499.8 398.2,499.4 397.7,498.9 397.2,498.8 396,499 395.3,499.2 394.1,499.5 393.4,499.7 392.2,500 391.5,500.3 390.4,500.7 389.7,500.9 388.7,501.4 388,501.7 387,502.1 386.4,502 385.8,501.2 385.3,500.7 384.6,500 384.6,499.4 385.2,498.5 385.6,497.8 386.1,496.8 386.5,496.2 387,495.1 387.3,494.4 387.8,493.4 388.1,492.7 388.6,491.6 388.8,490.8 389.2,489.7 389.2,489.2 388.7,488.7 388.4,488.4 387.9,487.9 387.6,487.6 387.1,487.1 386.6,487.1 385.5,487.5 384.7,487.7 383.6,488.2 382.9,488.5 381.9,489 381.2,489.3 380.1,489.8 379.5,490.2 378.5,490.7 377.8,491.1 376.9,491.7 376.3,491.7 375.6,491 375.1,490.5 374.3,489.9 374.2,489.3 374.6,488.3 374.9,487.6 375.4,486.6 375.6,485.9 376,484.8 376.3,484.1 376.6,482.9 376.8,482.2 377.1,481 377.3,480.3 377.5,479.1 377.4,478.6 376.9,478.1 376.5,477.9 376,477.5 375.6,477.2 375.1,476.8 374.6,476.8 373.5,477.4 372.8,477.7 371.8,478.3 371.1,478.7 370.1,479.3 369.5,479.7 368.5,480.4 367.9,480.8 367,481.5 366.4,482 365.6,482.7 365,482.8 364.1,482.2 363.6,481.8 362.7,481.2 362.5,480.7 362.9,479.6 363.1,478.9 363.4,477.8 363.5,477.1 363.8,475.9 363.9,475.2 364.1,474 364.2,473.3 364.3,472.1 364.4,471.3 364.5,470.1 364.3,469.6 363.8,469.3 363.4,469 362.8,468.7 362.4,468.5 361.8,468.1 361.3,468.3 360.3,468.9 359.7,469.4 358.7,470.1 358.1,470.6 357.2,471.3 356.6,471.8 355.8,472.6 355.2,473.1 354.4,473.9 353.9,474.4 353.1,475.3 352.6,475.4 351.7,474.9 351,474.6 350.1,474.2 349.9,473.6 350.1,472.5 350.2,471.8 350.3,470.7 350.4,469.9 350.5,468.8 350.5,468 350.5,466.9 350.6,466.1 350.5,464.9 350.5,464.1 350.4,462.9 350.2,462.4 349.6,462.1 349.2,462 348.6,461.7 348.1,461.5 347.5,461.3 347,461.5 346.1,462.3 345.5,462.8 344.7,463.7 344.1,464.2 343.3,465.1 342.8,465.6 342.1,466.5 341.6,467.1 340.9,468 340.5,468.6 339.8,469.5 339.3,469.7 338.3,469.3 337.7,469.1 336.7,468.8 336.4,468.3 336.4,467.2 336.5,466.5 336.4,465.3 336.4,464.6 336.4,463.4 336.3,462.7 336.2,461.5 336.1,460.7 335.9,459.6 335.8,458.8 335.6,457.6 335.3,457.1 334.6,457 334.2,456.8 333.5,456.7 333.1,456.6 332.4,456.4 332,456.6 331.2,457.5 330.7,458.2 330,459.1 329.5,459.7 328.8,460.7 328.4,461.3 327.7,462.2 327.3,462.9 326.8,463.9 326.4,464.5 325.9,465.5 325.4,465.8 324.4,465.6 323.7,465.4 322.7,465.2 322.3,464.8 322.2,463.7 322.2,462.9 322,461.8 321.9,461.1 321.7,460 321.5,459.2 321.2,458.1 321,457.3 320.7,456.2 320.5,455.4 320.1,454.3 319.8,453.9 319.1,453.8 318.7,453.7 318,453.6 317.5,453.6 316.9,453.5 316.4,453.8 315.8,454.8 315.4,455.5 314.7,456.5 314.4,457.2 313.8,458.2 313.5,458.9 313,459.9 312.6,460.6 312.2,461.6 311.9,462.3 311.6,463.4 311.1,463.7 310.1,463.6 309.4,463.6 308.3,463.5 307.9,463.1 307.7,462.1 307.5,461.3 307.2,460.2 307,459.5 306.6,458.4 306.4,457.7 306,456.6 305.7,455.9 305.2,454.8 304.9,454.1 304.4,453 304,452.6 303.3,452.6 302.8,452.6 302.2,452.6 301.7,452.6 301,452.6 300.6,453 300.1,454.1 299.8,454.8 299.3,455.9 299,456.6 298.6,457.7 298.4,458.4 298,459.5 297.8,460.2 297.5,461.3 297.3,462.1 297.1,463.1 296.7,463.5 295.6,463.6 294.9,463.6 293.9,463.7 293.4,463.4 293.1,462.3 292.8,461.6 292.4,460.6 292,459.9 291.5,458.9 291.2,458.2 290.6,457.2 290.3,456.5 289.6,455.5 289.2,454.8 288.6,453.8 288.1,453.5 287.5,453.6 287,453.6 286.3,453.7 285.9,453.8 285.2,453.9 284.9,454.3 284.5,455.4 284.3,456.2 284,457.3 283.8,458.1 283.5,459.2 283.3,460 283.1,461.1 283,461.8 282.8,462.9 282.8,463.7 282.7,464.8 282.3,465.2 281.3,465.4 280.6,465.6 279.6,465.8 279.1,465.5 278.6,464.5 278.2,463.9 277.7,462.9 277.3,462.2 276.6,461.3 276.2,460.7 275.5,459.7 275,459.1 274.3,458.2 273.8,457.5 273,456.6 272.6,456.4 271.9,456.6 271.5,456.7 270.8,456.8 270.4,457 269.7,457.1 269.4,457.6 269.2,458.8 269.1,459.6 268.9,460.7 268.8,461.5 268.7,462.7 268.6,463.4 268.6,464.6 268.6,465.3 268.5,466.5 268.6,467.2 268.6,468.3 268.3,468.8 267.3,469.1 266.7,469.3 265.7,469.7 265.2,469.5 264.5,468.6 264.1,468 263.4,467.1 262.9,466.5 262.2,465.6 261.7,465.1 260.9,464.2 260.3,463.7 259.5,462.8 258.9,462.3 258,461.5 257.5,461.3 256.9,461.5 256.4,461.7 255.8,462 255.4,462.1 254.8,462.4 254.6,462.9 254.5,464.1 254.5,464.9 254.4,466.1 254.5,466.9 254.5,468 254.5,468.8 254.6,469.9 254.7,470.7 254.8,471.8 254.9,472.5 255.1,473.6 254.9,474.2 254,474.6 253.3,474.9 252.4,475.4 251.9,475.3 251.1,474.4 250.6,473.9 249.8,473.1 249.2,472.6 248.4,471.8 247.8,471.3 246.9,470.6 246.3,470.1 245.3,469.4 244.7,468.9 243.7,468.3 243.2,468.1 242.6,468.5 242.2,468.7 241.6,469 241.2,469.3 240.7,469.6 240.5,470.1 240.6,471.3 240.7,472.1 240.8,473.3 240.9,474 241.1,475.2 241.2,475.9 241.5,477.1 241.6,477.8 241.9,478.9 242.1,479.6 242.5,480.7 242.3,481.2 241.4,481.8 240.9,482.2 240,482.8 239.4,482.7 238.6,482 238,481.5 237.1,480.8 236.5,480.4 235.5,479.7 234.9,479.3 233.9,478.7 233.2,478.3 232.2,477.7 231.5,477.4 230.4,476.8 229.9,476.8 229.4,477.2 229,477.5 228.5,477.9 228.1,478.1 227.6,478.6 227.5,479.1 227.7,480.3 227.9,481 228.2,482.2 228.4,482.9 228.7,484.1 229,484.8 229.4,485.9 229.6,486.6 230.1,487.6 230.4,488.3 230.8,489.3 230.7,489.9 229.9,490.5 229.4,491 228.7,491.7 228.1,491.7 227.2,491.1 226.5,490.7 225.5,490.2 224.9,489.8 223.8,489.3 223.1,489 222.1,488.5 221.4,488.2 220.3,487.7 219.5,487.5 218.4,487.1 217.9,487.1 217.4,487.6 217.1,487.9 216.6,488.4 216.3,488.7 215.8,489.2 215.8,489.7 216.2,490.8 216.4,491.6 216.9,492.7 217.2,493.4 217.7,494.4 218,495.1 218.5,496.2 218.9,496.8 219.4,497.8 219.8,498.5 220.4,499.4 220.4,500 219.7,500.7 219.2,501.2 218.6,502 218,502.1 217,501.7 216.3,501.4 215.3,500.9 214.6,500.7 213.5,500.3 212.8,500 211.6,499.7 210.9,499.5 209.7,499.2 209,499 207.8,498.8 207.3,498.9 206.8,499.4 206.6,499.8 206.2,500.3 205.9,500.7 205.5,501.2 205.5,501.7 206.1,502.8 206.4,503.5 207,504.5 207.4,505.2 208,506.2 208.4,506.8 209.1,507.8 209.5,508.4 210.2,509.3 210.7,509.9 211.4,510.7 211.5,511.3 210.9,512.2 210.5,512.7 209.9,513.6 209.4,513.8 208.3,513.4 207.6,513.2 206.5,512.9 205.8,512.8 204.6,512.5 203.9,512.4 202.7,512.2 202,512.1 200.8,512 200,511.9 198.8,511.8 198.3,512 198,512.5 197.7,512.9 197.4,513.5 197.2,513.9 196.8,514.5 197,515 197.6,516 198.1,516.6 198.8,517.6 199.3,518.2 200,519.1 200.5,519.7 201.3,520.5 201.8,521.1 202.6,521.9 203.1,522.4 204,523.2 204.1,523.7 203.6,524.6 203.3,525.3 202.9,526.2 202.3,526.4 201.2,526.2 200.5,526.1 199.4,526 198.6,525.9 197.5,525.8 196.7,525.8 195.6,525.8 194.8,525.7 193.6,525.8 192.8,525.8 191.6,525.9 191.1,526.1 190.8,526.7 190.7,527.1 190.4,527.7 190.2,528.2 190,528.8 190.2,529.3 191,530.2 191.5,530.8 192.4,531.6 192.9,532.2 193.8,533 194.3,533.5 195.2,534.2 195.8,534.7 196.7,535.4 197.3,535.8 198.2,536.5 198.4,537 198,538 197.8,538.6 197.5,539.6 197,539.9 195.9,539.9 195.2,539.8 194,539.9 193.3,539.9 192.1,539.9 191.4,540 190.2,540.1 189.4,540.2 188.3,540.4 187.5,540.5 186.3,540.7 185.8,541 185.7,541.7 185.5,542.1 185.4,542.8 185.3,543.2 185.1,543.9 185.3,544.3 186.2,545.1 186.9,545.6 187.8,546.3 188.4,546.8 189.4,547.5 190,547.9 190.9,548.6 191.6,549 192.6,549.5 193.2,549.9 194.2,550.4 194.5,550.9 194.3,551.9 194.1,552.6 193.9,553.6 193.5,554 192.4,554.1 191.6,554.1 190.5,554.3 189.8,554.4 188.7,554.6 187.9,554.8 186.8,555.1 186,555.3 184.9,555.6 184.1,555.8 183,556.2 182.6,556.5 182.5,557.2 182.4,557.6 182.3,558.3 182.3,558.8 182.2,559.4 182.5,559.9 183.5,560.5 184.2,560.9 185.2,561.6 185.9,561.9 186.9,562.5 187.6,562.8 188.6,563.3 189.3,563.7 190.3,564.1 191,564.4 192.1,564.7 192.4,565.2 192.3,566.2 192.3,566.9 192.2,568 191.8,568.4 190.8,568.6 190,568.8 188.9,569.1 188.2,569.3 187.1,569.7 186.4,569.9 185.3,570.3 184.6,570.6 183.5,571.1 182.8,571.4 181.7,571.9 181.3,572.3 181.3,573 181.3,573.5 181.3,574.1 181.3,574.6 181.3,575.3 181.7,575.7 182.8,576.2 183.5,576.5 184.6,577 185.3,577.3 186.4,577.7 187.1,577.9 188.2,578.3 188.9,578.5 190,578.8 190.8,579 191.8,579.2 192.2,579.6 192.3,580.7 192.3,581.4 192.4,582.4 192.1,582.9 191,583.2 190.3,583.5 189.3,583.9 188.6,584.3 187.6,584.8 186.9,585.1 185.9,585.7 185.2,586 184.2,586.7 183.5,587.1 182.5,587.7 182.2,588.2 182.3,588.8 182.3,589.3 182.4,590 182.5,590.4 182.6,591.1 183,591.4 184.1,591.8 184.9,592 186,592.3 186.8,592.5 187.9,592.8 188.7,593 189.8,593.2 190.5,593.3 191.6,593.5 192.4,593.5 193.5,593.6 193.9,594 194.1,595 194.3,595.7 194.5,596.7 194.2,597.2 193.2,597.7 192.6,598.1 191.6,598.6 190.9,599 190,599.7 189.4,600.1 188.4,600.8 187.8,601.3 186.9,602 186.2,602.5 185.3,603.3 185.1,603.7 185.3,604.4 185.4,604.8 185.5,605.5 185.7,605.9 185.8,606.6 186.3,606.9 187.5,607.1 188.3,607.2 189.4,607.4 190.2,607.5 191.4,607.6 192.1,607.7 193.3,607.7 194,607.7 195.2,607.8 195.9,607.7 197,607.7 197.5,608 197.8,609 198,609.6 198.4,610.6 198.2,611.1 197.3,611.8 196.7,612.2 195.8,612.9 195.2,613.4 194.3,614.1 193.8,614.6 192.9,615.4 192.4,616 191.5,616.8 191,617.4 190.2,618.3 190,618.8 190.2,619.4 190.4,619.9 190.7,620.5 190.8,620.9 191.1,621.5 191.6,621.7 192.8,621.8 193.6,621.8 194.8,621.9 195.6,621.8 196.7,621.8 197.5,621.8 198.6,621.7 199.4,621.6 200.5,621.5 201.2,621.4 202.3,621.2 202.9,621.4 203.3,622.3 203.6,623 204.1,623.9 204,624.4 203.1,625.2 202.6,625.7 201.8,626.5 201.3,627.1 200.5,627.9 200,628.5 199.3,629.4 198.8,630 198.1,631 197.6,631.6 197,632.6 196.8,633.1 197.2,633.7 197.4,634.1 197.7,634.7 198,635.1 198.3,635.6 198.8,635.8 200,635.7 200.8,635.6 202,635.5 202.7,635.4 203.9,635.2 204.6,635.1 205.8,634.8 206.5,634.7 207.6,634.4 208.3,634.2 209.4,633.8 209.9,634 210.5,634.9 210.9,635.4 211.5,636.3 211.4,636.9 210.7,637.7 210.2,638.3 209.5,639.2 209.1,639.8 208.4,640.8 208,641.4 207.4,642.4 207,643.1 206.4,644.1 206.1,644.8 205.5,645.9 205.5,646.4 205.9,646.9 206.2,647.3 206.6,647.8 206.8,648.2 207.3,648.7 207.8,648.8 209,648.6 209.7,648.4 210.9,648.1 211.6,647.9 212.8,647.6 213.5,647.3 214.6,646.9 215.3,646.7 216.3,646.2 217,645.9 218,645.5 218.6,645.6 219.2,646.4 219.7,646.9 220.4,647.6 220.4,648.2 219.8,649.1 219.4,649.8 218.9,650.8 218.5,651.4 218,652.5 217.7,653.2 217.2,654.2 216.9,654.9 216.4,656 216.2,656.8 215.8,657.9 215.8,658.4 216.3,658.9 216.6,659.2 217.1,659.7 217.4,660 217.9,660.5 218.4,660.5 219.5,660.1 220.3,659.9 221.4,659.4 222.1,659.1 223.1,658.6 223.8,658.3 224.9,657.8 225.5,657.4 226.5,656.9 227.2,656.5 228.1,655.9 228.7,655.9 229.4,656.6 229.9,657.1 230.7,657.7 230.8,658.3 230.4,659.3 230.1,660 229.6,661 229.4,661.7 229,662.8 228.7,663.5 228.4,664.7 228.2,665.4 227.9,666.6 227.7,667.3 227.5,668.5 227.6,669 228.1,669.5 228.5,669.7 229,670.1 229.4,670.4 229.9,670.8 230.4,670.8 231.5,670.2 232.2,669.9 233.2,669.3 233.9,668.9 234.9,668.3 235.5,667.9 236.5,667.2 237.1,666.8 238,666.1 238.6,665.6 239.4,664.9 240,664.8 240.9,665.4 241.4,665.8 242.3,666.4 242.5,666.9 242.1,668 241.9,668.7 241.6,669.8 241.5,670.5 241.2,671.7 241.1,672.4 240.9,673.6 240.8,674.3 240.7,675.5 240.6,676.3 240.5,677.5 240.7,678 241.2,678.3 241.6,678.6 242.2,678.9 242.6,679.1 243.2,679.5 243.7,679.3 244.7,678.7 245.3,678.2 246.3,677.5 246.9,677 247.8,676.3 248.4,675.8 249.2,675 249.8,674.5 250.6,673.7 251.1,673.2 251.9,672.3 252.4,672.2 253.3,672.7 254,673 254.9,673.4 255.1,674 254.9,675.1 254.8,675.8 254.7,676.9 254.6,677.7 254.5,678.8 254.5,679.6 254.5,680.7 254.4,681.5 254.5,682.7 254.5,683.5 254.6,684.7 254.8,685.2 255.4,685.5 255.8,685.6 256.4,685.9 256.9,686.1 257.5,686.3 258,686.1 258.9,685.3 259.5,684.8 260.3,683.9 260.9,683.4 261.7,682.5 262.2,682 262.9,681.1 263.4,680.5 264.1,679.6 264.5,679 265.2,678.1 265.7,677.9 266.7,678.3 267.3,678.5 268.3,678.8 268.6,679.3 268.6,680.4 268.5,681.1 268.6,682.3 268.6,683 268.6,684.2 268.7,684.9 268.8,686.1 268.9,686.9 269.1,688 269.2,688.8 269.4,690 269.7,690.5 270.4,690.6 270.8,690.8 271.5,690.9 271.9,691 272.6,691.2 273,691 273.8,690.1 274.3,689.4 275,688.5 275.5,687.9 276.2,686.9 276.6,686.3 277.3,685.4 277.7,684.7 278.2,683.7 278.6,683.1 279.1,682.1 279.6,681.8 280.6,682 281.3,682.2 282.3,682.4 282.7,682.8 282.8,683.9 282.8,684.7 283,685.8 283.1,686.5 283.3,687.6 283.5,688.4 283.8,689.5 284,690.3 284.3,691.4 284.5,692.2 284.9,693.3 285.2,693.7 285.9,693.8 286.3,693.9 287,694 287.5,694 288.1,694.1 288.6,693.8 289.2,692.8 289.6,692.1 290.3,691.1 290.6,690.4 291.2,689.4 291.5,688.7 292,687.7 292.4,687 292.8,686 293.1,685.3 293.4,684.2 293.9,683.9 294.9,684 295.6,684 296.7,684.1 297.1,684.5 297.3,685.5 297.5,686.3 297.8,687.4 298,688.1 298.4,689.2 298.6,689.9 299,691 299.3,691.7 299.8,692.8 300.1,693.5 300.6,694.6 301,695 301.7,695 302.2,695 302.8,695 303.3,695 304,695 304.4,694.6 304.9,693.5 305.2,692.8 305.7,691.7 306,691 306.4,689.9 306.6,689.2 307,688.1 307.2,687.4 307.5,686.3 307.7,685.5 307.9,684.5 308.3,684.1 309.4,684 310.1,684 311.1,683.9 311.6,684.2 311.9,685.3 312.2,686 312.6,687 313,687.7 313.5,688.7 313.8,689.4 314.4,690.4 314.7,691.1 315.4,692.1 315.8,692.8 316.4,693.8 316.9,694.1 317.5,694 318,694 318.7,693.9 319.1,693.8 319.8,693.7 320.1,693.3 320.5,692.2 320.7,691.4 321,690.3 321.2,689.5 321.5,688.4 321.7,687.6 321.9,686.5 322,685.8 322.2,684.7 322.2,683.9 322.3,682.8 322.7,682.4 323.7,682.2 324.4,682 325.4,681.8 325.9,682.1 326.4,683.1 326.8,683.7 327.3,684.7 327.7,685.4 328.4,686.3 328.8,686.9 329.5,687.9 330,688.5 330.7,689.4 331.2,690.1 332,691 332.4,691.2 333.1,691 333.5,690.9 334.2,690.8 334.6,690.6 335.3,690.5 335.6,690 335.8,688.8 335.9,688 336.1,686.9 336.2,686.1 336.3,684.9 336.4,684.2 336.4,683 336.4,682.3 336.5,681.1 336.4,680.4 336.4,679.3 336.7,678.8 337.7,678.5 338.3,678.3 339.3,677.9 339.8,678.1 340.5,679 340.9,679.6 341.6,680.5 342.1,681.1 342.8,682 343.3,682.5 344.1,683.4 344.7,683.9 345.5,684.8 346.1,685.3 347,686.1 347.5,686.3 348.1,686.1 348.6,685.9 349.2,685.6 349.6,685.5 350.2,685.2 350.4,684.7 350.5,683.5 350.5,682.7 350.6,681.5 350.5,680.7 350.5,679.6 350.5,678.8 350.4,677.7 350.3,676.9 350.2,675.8 350.1,675.1 349.9,674 350.1,673.4 351,673 351.7,672.7 352.6,672.2 353.1,672.3 353.9,673.2 354.4,673.7 355.2,674.5 355.8,675 356.6,675.8 357.2,676.3 358.1,677 358.7,677.5 359.7,678.2 360.3,678.7 361.3,679.3 361.8,679.5 362.4,679.1 362.8,678.9 363.4,678.6 363.8,678.3 364.3,678 364.5,677.5 364.4,676.3 364.3,675.5 364.2,674.3 364.1,673.6 363.9,672.4 363.8,671.7 363.5,670.5 363.4,669.8 363.1,668.7 362.9,668 362.5,666.9 362.7,666.4 363.6,665.8 364.1,665.4 365,664.8 365.6,664.9 366.4,665.6 367,666.1 367.9,666.8 368.5,667.2 369.5,667.9 370.1,668.3 371.1,668.9 371.8,669.3 372.8,669.9 373.5,670.2 374.6,670.8 375.1,670.8 375.6,670.4 376,670.1 376.5,669.7 376.9,669.5 377.4,669 377.5,668.5 377.3,667.3 377.1,666.6 376.8,665.4 376.6,664.7 376.3,663.5 376,662.8 375.6,661.7 375.4,661 374.9,660 374.6,659.3 374.2,658.3 374.3,657.7 375.1,657.1 375.6,656.6 376.3,655.9 376.9,655.9 377.8,656.5 378.5,656.9 379.5,657.4 380.1,657.8 381.2,658.3 381.9,658.6 382.9,659.1 383.6,659.4 384.7,659.9 385.5,660.1 386.6,660.5 387.1,660.5 387.6,660 387.9,659.7 388.4,659.2 388.7,658.9 389.2,658.4 389.2,657.9 388.8,656.8 388.6,656 388.1,654.9 387.8,654.2 387.3,653.2 387,652.5 386.5,651.4 386.1,650.8 385.6,649.8 385.2,649.1 384.6,648.2 384.6,647.6 385.3,646.9 385.8,646.4 386.4,645.6 387,645.5 388,645.9 388.7,646.2 389.7,646.7 390.4,646.9 391.5,647.3 392.2,647.6 393.4,647.9 394.1,648.1 395.3,648.4 396,648.6 397.2,648.8 397.7,648.7 398.2,648.2 398.4,647.8 398.8,647.3 399.1,646.9 399.5,646.4 399.5,645.9 398.9,644.8 398.6,644.1 398,643.1 397.6,642.4 397,641.4 396.6,640.8 395.9,639.8 395.5,639.2 394.8,638.3 394.3,637.7 393.6,636.9 393.5,636.3 394.1,635.4 394.5,634.9 395.1,634 395.6,633.8 396.7,634.2 397.4,634.4 398.5,634.7 399.2,634.8 400.4,635.1 401.1,635.2 402.3,635.4 403,635.5 404.2,635.6 405,635.7 406.2,635.8 406.7,635.6 407,635.1 407.3,634.7 407.6,634.1 407.8,633.7 408.2,633.1 408,632.6 407.4,631.6 406.9,631 406.2,630 405.7,629.4 405,628.5 404.5,627.9 403.7,627.1 403.2,626.5 402.4,625.7 401.9,625.2 401,624.4 400.9,623.9 401.4,623 401.7,622.3 402.1,621.4 402.7,621.2 403.8,621.4 404.5,621.5 405.6,621.6 406.4,621.7 407.5,621.8 408.3,621.8 409.4,621.8 410.2,621.9 411.4,621.8 412.2,621.8 413.4,621.7 413.9,621.5 414.2,620.9 414.3,620.5 414.6,619.9 414.8,619.4 415,618.8 414.8,618.3 414,617.4 413.5,616.8 412.6,616 412.1,615.4 411.2,614.6 410.7,614.1 409.8,613.4 409.2,612.9 408.3,612.2 407.7,611.8 406.8,611.1 406.6,610.6 407,609.6 407.2,609 407.5,608 408,607.7 409.1,607.7 409.8,607.8 411,607.7 411.7,607.7 412.9,607.7 413.6,607.6 414.8,607.5 415.6,607.4 416.7,607.2 417.5,607.1 418.7,606.9 419.2,606.6 419.3,605.9 419.5,605.5 419.6,604.8 419.7,604.4 419.9,603.7 419.7,603.3 418.8,602.5 418.1,602 417.2,601.3 416.6,600.8 415.6,600.1 415,599.7 414.1,599 413.4,598.6 412.4,598.1 411.8,597.7 410.8,597.2 410.5,596.7 410.7,595.7 410.9,595 411.1,594 411.5,593.6 412.6,593.5 413.4,593.5 414.5,593.3 415.2,593.2 416.3,593 417.1,592.8 418.2,592.5 419,592.3 420.1,592 420.9,591.8 422,591.4 422.4,591.1 422.5,590.4 422.6,590 422.7,589.3 422.7,588.8 422.8,588.2 422.5,587.7 421.5,587.1 420.8,586.7 419.8,586 419.1,585.7 418.1,585.1 417.4,584.8 416.4,584.3 415.7,583.9 414.7,583.5 414,583.2 412.9,582.9 412.6,582.4 412.7,581.4Z" fill="none" stroke="#000" stroke-width="2.65" stroke-linejoin="round"/>
<circle cx="302.5" cy="573.8" r="73.6" fill="none" stroke="#000" stroke-width="2.75"/>
<circle cx="302.5" cy="573.8" r="34.5" fill="none" stroke="#000" stroke-width="2.75"/>
<circle cx="302.5" cy="573.8" r="53.5" fill="none" stroke="#000" stroke-width="1" stroke-dasharray="8 7 2.5 6.5" stroke-dashoffset="15.4"/></g>
<g><rect x="647" y="97" width="3" height="637" fill="#000"/>
<rect x="712" y="97" width="3" height="637" fill="#000"/>
<defs><clipPath id="ctop"><polygon points="647.5,97.5 658.5,96 668.5,99.5 680.5,93.5 690.5,98.5 702.5,93.5 713.5,98 712,131 650,131"/></clipPath><clipPath id="cbot"><polygon points="650,700 712,700 713,733 703,737.5 691,730.5 680.5,736.5 669.5,726.5 661,727.5 648.5,732"/></clipPath></defs>
<polyline points="647.5,97.5 658.5,96 668.5,99.5 680.5,93.5 690.5,98.5 702.5,93.5 713.5,98" fill="none" stroke="#000" stroke-width="1.3"/>
<polyline points="648.5,732 661,727.5 669.5,726.5 680.5,736.5 691,730.5 703,737.5 713,733" fill="none" stroke="#000" stroke-width="1.3"/>
<path d="M650,96.5L656.5,90M650,106.5L666.5,90M650,116.5L676.5,90M650,126.5L686.5,90M655.5,131L696.5,90M665.5,131L706.5,90M675.5,131L712,94.5M685.5,131L712,104.5M695.5,131L712,114.5M705.5,131L712,124.5" stroke="#000" stroke-width="1" fill="none" clip-path="url(#ctop)"/>
<path d="M650,706.5L656.5,700M650,716.5L666.5,700M650,726.5L676.5,700M650,736.5L686.5,700M656.5,740L696.5,700M666.5,740L706.5,700M676.5,740L712,704.5M686.5,740L712,714.5M696.5,740L712,724.5M706.5,740L712,734.5" stroke="#000" stroke-width="1" fill="none" clip-path="url(#cbot)"/>
<rect x="650" y="131" width="62" height="3" fill="#000"/>
<rect x="650" y="142" width="62" height="3" fill="#000"/>
<rect x="650" y="367" width="62" height="3" fill="#000"/>
<rect x="650" y="377" width="62" height="3" fill="#000"/>
<rect x="650" y="451" width="62" height="5" fill="#000"/>
<rect x="650" y="462" width="62" height="5" fill="#000"/>
<rect x="650" y="686" width="62" height="3" fill="#000"/>
<rect x="650" y="697" width="62" height="3" fill="#000"/>
<rect x="650" y="501" width="62" height="3" fill="#000"/>
<rect x="650" y="649" width="62" height="3" fill="#000"/>
<rect x="654" y="504" width="3" height="146" fill="#000"/>
<rect x="705" y="504" width="3" height="146" fill="#000"/>
<rect x="657" y="540" width="48" height="3" fill="#000"/>
<rect x="657" y="610" width="48" height="3" fill="#000"/>
<path d="M650,485L666,501M650.4,467L684.4,501M668.8,467L702.8,501M687.2,467L712,491.8M705.6,467L712,473.4" stroke="#000" stroke-width="1" fill="none"/>
<path d="M650,671.2L664.8,686M650,652.8L683.2,686M667.6,652L701.6,686M686,652L712,678M704.4,652L712,659.6" stroke="#000" stroke-width="1" fill="none"/>
<line x1="641" y1="139.5" x2="647" y2="139.5" stroke="#000" stroke-width="1"/>
<line x1="715" y1="139.5" x2="719" y2="139.5" stroke="#000" stroke-width="1"/>
<line x1="656" y1="139.5" x2="707" y2="139.5" stroke="#000" stroke-width="1" stroke-dasharray="3 6 9 6"/>
<line x1="641" y1="254.5" x2="647" y2="254.5" stroke="#000" stroke-width="1"/>
<line x1="715" y1="254.5" x2="719" y2="254.5" stroke="#000" stroke-width="1"/>
<line x1="656" y1="254.5" x2="707" y2="254.5" stroke="#000" stroke-width="1" stroke-dasharray="3 6 9 6"/>
<line x1="641" y1="374.5" x2="647" y2="374.5" stroke="#000" stroke-width="1"/>
<line x1="715" y1="374.5" x2="719" y2="374.5" stroke="#000" stroke-width="1"/>
<line x1="656" y1="374.5" x2="707" y2="374.5" stroke="#000" stroke-width="1" stroke-dasharray="3 6 9 6"/>
<line x1="641" y1="415.5" x2="647" y2="415.5" stroke="#000" stroke-width="1"/>
<line x1="715" y1="415.5" x2="719" y2="415.5" stroke="#000" stroke-width="1"/>
<line x1="656" y1="415.5" x2="707" y2="415.5" stroke="#000" stroke-width="1" stroke-dasharray="3 6 9 6"/>
<line x1="641" y1="456.5" x2="647" y2="456.5" stroke="#000" stroke-width="1"/>
<line x1="715" y1="456.5" x2="719" y2="456.5" stroke="#000" stroke-width="1"/>
<line x1="656" y1="456.5" x2="707" y2="456.5" stroke="#000" stroke-width="1" stroke-dasharray="3 6 9 6"/>
<line x1="641" y1="576.5" x2="647" y2="576.5" stroke="#000" stroke-width="1"/>
<line x1="715" y1="576.5" x2="719" y2="576.5" stroke="#000" stroke-width="1"/>
<line x1="656" y1="576.5" x2="707" y2="576.5" stroke="#000" stroke-width="1" stroke-dasharray="3 6 9 6"/>
<line x1="641" y1="691.5" x2="647" y2="691.5" stroke="#000" stroke-width="1"/>
<line x1="715" y1="691.5" x2="719" y2="691.5" stroke="#000" stroke-width="1"/>
<line x1="656" y1="691.5" x2="707" y2="691.5" stroke="#000" stroke-width="1" stroke-dasharray="3 6 9 6"/>
<clipPath id="hou"><polygon points="657,504 705,504 705,514.3 702,513.5 699,512.9 696,512.3 693,511.8 690,511.5 687,511.2 684,511.1 681,511 678,511.1 675,511.2 672,511.5 669,511.8 666,512.3 663,512.9 660,513.5 657,514.3"/></clipPath>
<path d="M657,506.8L663.8,500M657,513.8L670.8,500M657.8,520L677.8,500M664.8,520L684.8,500M671.8,520L691.8,500M678.8,520L698.8,500M685.8,520L705,500.8M692.8,520L705,507.8M699.8,520L705,514.8" stroke="#000" stroke-width="1" fill="none" clip-path="url(#hou)"/>
<clipPath id="hiu"><polygon points="657,531.8 660,531 663,530.4 666,529.8 669,529.3 672,529 675,528.7 678,528.6 681,528.5 684,528.6 687,528.7 690,529 693,529.3 696,529.8 699,530.4 702,531 705,531.8 705,540 657,540"/></clipPath>
<path d="M657,542.1L659.9,545M657,535.1L666.9,545M657,528.1L673.9,545M659.9,524L680.9,545M666.9,524L687.9,545M673.9,524L694.9,545M680.9,524L701.9,545M687.9,524L705,541.1M694.9,524L705,534.1M701.9,524L705,527.1" stroke="#000" stroke-width="1" fill="none" clip-path="url(#hiu)"/>
<polygon points="657,512.8 660,512 663,511.4 666,510.8 669,510.3 672,510 675,509.7 678,509.6 681,509.5 684,509.6 687,509.7 690,510 693,510.3 696,510.8 699,511.4 702,512 705,512.8 705,533.3 702,532.5 699,531.9 696,531.3 693,530.8 690,530.5 687,530.2 684,530.1 681,530 678,530.1 675,530.2 672,530.5 669,530.8 666,531.3 663,531.9 660,532.5 657,533.3" fill="#000"/>
<polygon points="658.5,516.1 676,513.3 677,526.4 660.5,528.7" fill="#fff"/>
<polygon points="703.5,516.1 686,513.3 685,526.4 701.5,528.7" fill="#fff"/>
<polygon points="678,512.5 684,512.5 684,518 683,519.5 683,526 680,526 680,519.5 678,518" fill="#fff"/>
<rect x="670" y="521.5" width="3" height="1" fill="#000"/>
<rect x="695" y="522.5" width="3" height="1" fill="#000"/>
<clipPath id="hom"><polygon points="657,648 705,648 705,637.7 702,638.5 699,639.1 696,639.7 693,640.2 690,640.5 687,640.8 684,640.9 681,641 678,640.9 675,640.8 672,640.5 669,640.2 666,639.7 663,639.1 660,638.5 657,637.7"/></clipPath>
<path d="M657,632.8L659.8,630M657,639.8L666.8,630M657,646.8L673.8,630M660.8,650L680.8,630M667.8,650L687.8,630M674.8,650L694.8,630M681.8,650L701.8,630M688.8,650L705,633.8M695.8,650L705,640.8M702.8,650L705,647.8" stroke="#000" stroke-width="1" fill="none" clip-path="url(#hom)"/>
<clipPath id="him"><polygon points="657,620.2 660,621 663,621.6 666,622.2 669,622.7 672,623 675,623.3 678,623.4 681,623.5 684,623.4 687,623.3 690,623 693,622.7 696,622.2 699,621.6 702,621 705,620.2 705,612 657,612"/></clipPath>
<path d="M657,626.1L658.9,628M657,619.1L665.9,628M657,612.1L672.9,628M657,605.1L679.9,628M663.9,605L686.9,628M670.9,605L693.9,628M677.9,605L700.9,628M684.9,605L705,625.1M691.9,605L705,618.1M698.9,605L705,611.1" stroke="#000" stroke-width="1" fill="none" clip-path="url(#him)"/>
<polygon points="657,639.2 660,640 663,640.6 666,641.2 669,641.7 672,642 675,642.3 678,642.4 681,642.5 684,642.4 687,642.3 690,642 693,641.7 696,641.2 699,640.6 702,640 705,639.2 705,618.7 702,619.5 699,620.1 696,620.7 693,621.2 690,621.5 687,621.8 684,621.9 681,622 678,621.9 675,621.8 672,621.5 669,621.2 666,620.7 663,620.1 660,619.5 657,618.7" fill="#000"/>
<polygon points="658.5,635.9 676,638.7 677,625.6 660.5,623.3" fill="#fff"/>
<polygon points="703.5,635.9 686,638.7 685,625.6 701.5,623.3" fill="#fff"/>
<polygon points="678,639.5 684,639.5 684,634 683,632.5 683,626 680,626 680,632.5 678,634" fill="#fff"/>
<rect x="670" y="629.5" width="3" height="1" fill="#000"/>
<rect x="695" y="628.5" width="3" height="1" fill="#000"/>
<rect x="655" y="496" width="40" height="5" fill="#fff"/><text x="655" y="501" font-family="Liberation Sans" font-size="6" font-weight="bold" textLength="40" lengthAdjust="spacingAndGlyphs" fill="#000">22316CCW33</text></g>
<g><circle cx="970.5" cy="253.5" r="31.8" fill="none" stroke="#000" stroke-width="1"/>
<line x1="970.5" y1="221.5" x2="970.5" y2="124.5" stroke="#000"/>
<line x1="960" y1="124.5" x2="979" y2="124.5" stroke="#000"/>
<line x1="943" y1="269.4" x2="858.8" y2="318" stroke="#000"/>
<line x1="863.3" y1="325.8" x2="854.3" y2="310.2" stroke="#000"/>
<line x1="999.3" y1="267.1" x2="1083.5" y2="315.7" stroke="#000"/>
<line x1="996.7" y1="271.7" x2="1080.9" y2="320.3" stroke="#000"/>
<line x1="1086.7" y1="310.2" x2="1077.7" y2="325.8" stroke="#000"/></g>
<g fill="#000"><rect x="13" y="787" width="194" height="1"/>
<rect x="13" y="810" width="194" height="1"/>
<rect x="13" y="833" width="194" height="1"/>
<rect x="13" y="855" width="194" height="1"/>
<rect x="13" y="878" width="194" height="1"/>
<rect x="13" y="901" width="194" height="1"/>
<rect x="13" y="923" width="194" height="1"/>
<rect x="13" y="946" width="194" height="1"/>
<rect x="13" y="969" width="194" height="1"/>
<rect x="13" y="991" width="194" height="1"/>
<rect x="13" y="787" width="1" height="205"/>
<rect x="74" y="810" width="1" height="182"/>
<rect x="124" y="810" width="1" height="182"/>
<rect x="206" y="787" width="1" height="205"/>
<rect x="230" y="787" width="305" height="1"/>
<rect x="230" y="810" width="305" height="1"/>
<rect x="230" y="833" width="305" height="1"/>
<rect x="230" y="855" width="305" height="1"/>
<rect x="230" y="878" width="305" height="1"/>
<rect x="230" y="901" width="305" height="1"/>
<rect x="230" y="923" width="305" height="1"/>
<rect x="230" y="946" width="305" height="1"/>
<rect x="230" y="969" width="305" height="1"/>
<rect x="230" y="991" width="305" height="1"/>
<rect x="230" y="787" width="1" height="205"/>
<rect x="271" y="810" width="1" height="182"/>
<rect x="311" y="810" width="1" height="182"/>
<rect x="382" y="810" width="1" height="182"/>
<rect x="453" y="810" width="1" height="182"/>
<rect x="534" y="787" width="1" height="205"/>
<rect x="552" y="787" width="234" height="1"/>
<rect x="552" y="810" width="234" height="1"/>
<rect x="552" y="833" width="234" height="1"/>
<rect x="552" y="855" width="234" height="1"/>
<rect x="552" y="878" width="234" height="1"/>
<rect x="552" y="901" width="234" height="1"/>
<rect x="552" y="923" width="234" height="1"/>
<rect x="552" y="946" width="234" height="1"/>
<rect x="552" y="969" width="234" height="1"/>
<rect x="552" y="991" width="234" height="1"/>
<rect x="552" y="787" width="1" height="205"/>
<rect x="602" y="810" width="1" height="182"/>
<rect x="643" y="810" width="1" height="182"/>
<rect x="714" y="810" width="1" height="182"/>
<rect x="785" y="787" width="1" height="205"/>
<rect x="873" y="739" width="406" height="1"/>
<rect x="873" y="762" width="406" height="1"/>
<rect x="873" y="784" width="406" height="1"/>
<rect x="873" y="807" width="406" height="1"/>
<rect x="873" y="830" width="406" height="1"/>
<rect x="873" y="852" width="406" height="1"/>
<rect x="873" y="875" width="406" height="1"/>
<rect x="873" y="897" width="406" height="1"/>
<rect x="873" y="920" width="406" height="1"/>
<rect x="873" y="943" width="406" height="1"/>
<rect x="873" y="965" width="406" height="1"/>
<rect x="873" y="988" width="406" height="1"/>
<rect x="873" y="739" width="1" height="250"/>
<rect x="954" y="762" width="1" height="227"/>
<rect x="1035" y="762" width="1" height="227"/>
<rect x="1116" y="762" width="1" height="227"/>
<rect x="1197" y="762" width="1" height="227"/>
<rect x="1278" y="739" width="1" height="250"/></g>
<g font-family="Liberation Sans, sans-serif" fill="#1e1e1e"><text x="45.5" y="78.5" font-size="15.6">Application Example</text>
<text x="45.5" y="96.5" font-size="15.6">Demo Version</text>
<text x="45.5" y="114.5" font-size="15.6">S: Sun 1</text>
<text x="45.5" y="132.5" font-size="15.6">P/C: Planet 2</text>
<text x="45.5" y="150.5" font-size="15.6">H: Ring Gear 3</text>
<text x="1163.5" y="92.9" font-size="14">n in = 100/min</text>
<text x="1163.5" y="108.4" font-size="14">n out = 12.88/min</text>
<text x="1163.5" y="123.9" font-size="14">i = 7.765</text>
<text x="1163.5" y="154.9" font-size="14">nS = 100/min</text>
<text x="1163.5" y="170.4" font-size="14">nC = 12.88/min</text>
<text x="1163.5" y="185.9" font-size="14">nH = 0/min</text>
<text x="1163.5" y="201.4" font-size="14">nP = -30.86/min</text>
<text x="1163.5" y="232.4" font-size="14">rS = 46.75 mm</text>
<text x="1163.5" y="247.9" font-size="14">rC = 183 mm</text>
<text x="1163.5" y="263.4" font-size="14">rH = 316.3 mm</text>
<text x="1163.5" y="278.9" font-size="14">rP = 132 mm</text>
<text x="1163.5" y="309.9" font-size="14">zS = 17</text>
<text x="1163.5" y="325.4" font-size="14">zH = -115</text>
<text x="1163.5" y="340.9" font-size="14">zP = 48</text>
<text x="1163.5" y="371.9" font-size="14">vS = 0.490 m/s</text>
<text x="1163.5" y="387.4" font-size="14">vC = 0.248 m/s</text>
<text x="1163.5" y="402.9" font-size="14">vH = 0 m/s</text>
<text x="1163.5" y="418.4" font-size="14">vP = -0.427 m/s</text>
<text x="970" y="105.6" font-size="14">H</text>
<text x="975" y="173.7" font-size="14">+46511 Nm</text>
<text x="841.5" y="221.6" font-size="14">iSH = -6.765</text>
<text x="1034.5" y="221.6" font-size="14">iHC = +1.148</text>
<text x="904.5" y="294.7" font-size="14">+6875 Nm</text>
<text x="1043" y="294.7" font-size="14">-53386 Nm</text>
<text x="842.5" y="328.8" font-size="14">S</text>
<text x="1098.5" y="328.8" font-size="14">C</text>
<text x="938.5" y="351.5" font-size="14">iSC = +7.765</text>
<text x="17" y="828" font-size="15.6">alpha</text>
<text x="78" y="828" font-size="15.6">°</text>
<text x="128" y="828" font-size="15.6">20.000</text>
<text x="17" y="851" font-size="15.6">beta</text>
<text x="78" y="851" font-size="15.6">°</text>
<text x="132" y="851" font-size="15.6">0.000</text>
<text x="17" y="873" font-size="15.6">mn</text>
<text x="78" y="873" font-size="15.6">mm</text>
<text x="132" y="873" font-size="15.6">5.500</text>
<text x="17" y="896" font-size="15.6">qp</text>
<text x="144" y="896" font-size="15.6">3</text>
<text x="17" y="919" font-size="15.6">a</text>
<text x="78" y="919" font-size="15.6">mm</text>
<text x="128" y="919" font-size="15.6">183 js 7</text>
<text x="17" y="941" font-size="15.6">i</text>
<text x="136" y="941" font-size="15.6">7.765</text>
<text x="17" y="964" font-size="15.6">Input</text>
<text x="137" y="964" font-size="15.6">S</text>
<text x="17" y="987" font-size="15.6">Output</text>
<text x="137" y="987" font-size="15.6">C</text>
<text x="328" y="805" font-size="15.6">S</text>
<text x="402.5" y="805" font-size="15.6">P</text>
<text x="473.5" y="805" font-size="15.6">H</text>
<text x="234" y="828" font-size="15.6">z</text>
<text x="328.5" y="828" font-size="15.6">17</text>
<text x="398" y="828" font-size="15.6">48</text>
<text x="461" y="828" font-size="15.6">-115</text>
<text x="234" y="851" font-size="15.6">x</text>
<text x="319" y="851" font-size="15.6">0.4400</text>
<text x="390" y="851" font-size="15.6">0.3970</text>
<text x="457" y="851" font-size="15.6">-0.1760</text>
<text x="234" y="873" font-size="15.6">b</text>
<text x="275" y="873" font-size="15.6">mm</text>
<text x="319" y="873" font-size="15.6">75.00</text>
<text x="391" y="873" font-size="15.6">75.00</text>
<text x="462" y="873" font-size="15.6">75.00</text>
<text x="234" y="896" font-size="15.6">d</text>
<text x="275" y="896" font-size="15.6">mm</text>
<text x="319" y="896" font-size="15.6">93.500</text>
<text x="386" y="896" font-size="15.6">264.000</text>
<text x="457" y="896" font-size="15.6">-632.500</text>
<text x="234" y="919" font-size="15.6">df</text>
<text x="275" y="919" font-size="15.6">mm</text>
<text x="319" y="919" font-size="15.6">84.480</text>
<text x="386" y="919" font-size="15.6">254.463</text>
<text x="457" y="919" font-size="15.6">-648.461</text>
<text x="234" y="941" font-size="15.6">db</text>
<text x="275" y="941" font-size="15.6">mm</text>
<text x="319" y="941" font-size="15.6">87.861</text>
<text x="386" y="941" font-size="15.6">248.079</text>
<text x="457" y="941" font-size="15.6">-594.356</text>
<text x="234" y="964" font-size="15.6">da</text>
<text x="275" y="964" font-size="15.6">mm</text>
<text x="315" y="964" font-size="15.6">109.230</text>
<text x="386" y="964" font-size="15.6">279.213</text>
<text x="457" y="964" font-size="15.6">-623.711</text>
<text x="234" y="987" font-size="15.6">zn</text>
<text x="324" y="987" font-size="15.6">17.00</text>
<text x="394" y="987" font-size="15.6">48.00</text>
<text x="457" y="987" font-size="15.6">-115.00</text>
<text x="659.6" y="805" font-size="15.6">S-P</text>
<text x="730.3" y="805" font-size="15.6">P-H</text>
<text x="556.5" y="828" font-size="15.6">eps.al.</text>
<text x="660.6" y="828" font-size="15.6">1.471</text>
<text x="731.4" y="828" font-size="15.6">1.773</text>
<text x="556.5" y="851" font-size="15.6">eps.ß</text>
<text x="659.5" y="851" font-size="15.6">0.000</text>
<text x="730.5" y="851" font-size="15.6">0.000</text>
<text x="556.5" y="873" font-size="15.6">eps.g.</text>
<text x="660.6" y="873" font-size="15.6">1.471</text>
<text x="731.4" y="873" font-size="15.6">1.773</text>
<text x="556.5" y="896" font-size="15.6">Ft</text>
<text x="606" y="896" font-size="15.6">N</text>
<text x="658.5" y="896" font-size="15.6">49023</text>
<text x="729.5" y="896" font-size="15.6">49023</text>
<text x="556.5" y="919" font-size="15.6">Ftw</text>
<text x="606" y="919" font-size="15.6">N</text>
<text x="658.5" y="919" font-size="15.6">47885</text>
<text x="729.5" y="919" font-size="15.6">49357</text>
<text x="556.5" y="941" font-size="15.6">Fxw</text>
<text x="606" y="941" font-size="15.6">N</text>
<text x="674.5" y="941" font-size="15.6">0</text>
<text x="745.5" y="941" font-size="15.6">0</text>
<text x="556.5" y="964" font-size="15.6">Frw</text>
<text x="606" y="964" font-size="15.6">N</text>
<text x="658.5" y="964" font-size="15.6">20705</text>
<text x="729.5" y="964" font-size="15.6">16896</text>
<text x="556.5" y="987" font-size="15.6">Fnw</text>
<text x="606" y="987" font-size="15.6">N</text>
<text x="658.5" y="987" font-size="15.6">52169</text>
<text x="729.5" y="987" font-size="15.6">52169</text>
<text x="1052" y="757" font-size="15.6">S</text>
<text x="1136.3" y="757" font-size="15.6">P/C</text>
<text x="1217.7" y="757" font-size="15.6">H</text>
<text x="876.5" y="780" font-size="15.6">P</text>
<text x="958" y="780" font-size="15.6">kW</text>
<text x="1043.8" y="780" font-size="15.6">72.000</text>
<text x="1119.3" y="780" font-size="15.6">-72.000</text>
<text x="1209.6" y="780" font-size="15.6">0.000</text>
<text x="876.5" y="802" font-size="15.6">n</text>
<text x="958" y="802" font-size="15.6">1/min</text>
<text x="1060" y="802" font-size="15.6">100</text>
<text x="1132" y="802" font-size="15.6">12.88</text>
<text x="1229" y="802" font-size="15.6">0</text>
<text x="876.5" y="825" font-size="15.6">np</text>
<text x="958" y="825" font-size="15.6">1/min</text>
<text x="1128" y="825" font-size="15.6">-30.86</text>
<text x="876.5" y="848" font-size="15.6">T</text>
<text x="958" y="848" font-size="15.6">Nm</text>
<text x="1055" y="848" font-size="15.6">6875</text>
<text x="1127" y="848" font-size="15.6">-53386</text>
<text x="1213" y="848" font-size="15.6">46511</text>
<text x="876.5" y="870" font-size="15.6">Sig.Hlim</text>
<text x="958" y="870" font-size="15.6">MPa</text>
<text x="1058" y="870" font-size="15.6">1300</text>
<text x="1136" y="870" font-size="15.6">1300</text>
<text x="1217" y="870" font-size="15.6">1300</text>
<text x="876.5" y="893" font-size="15.6">Sig.FE</text>
<text x="958" y="893" font-size="15.6">MPa</text>
<text x="1059" y="893" font-size="15.6">620</text>
<text x="1140" y="893" font-size="15.6">620</text>
<text x="1219" y="893" font-size="15.6">620</text>
<text x="876.5" y="915" font-size="15.6">SH-SP</text>
<text x="1058" y="915" font-size="15.6">0.89</text>
<text x="1136" y="915" font-size="15.6">0.94</text>
<text x="876.5" y="938" font-size="15.6">SH-PH</text>
<text x="1136" y="938" font-size="15.6">2.25</text>
<text x="1217" y="938" font-size="15.6">2.25</text>
<text x="876.5" y="961" font-size="15.6">SF-SP</text>
<text x="1059" y="961" font-size="15.6">1.64</text>
<text x="1136" y="961" font-size="15.6">0.97</text>
<text x="876.5" y="983" font-size="15.6">SF-PH</text>
<text x="1136" y="983" font-size="15.6">1.15</text>
<text x="1217" y="983" font-size="15.6">1.16</text>
<text x="10.8" y="1012" font-size="7" font-weight="bold" fill="#000" textLength="47.6" lengthAdjust="spacingAndGlyphs">02/26/2014</text>
<text x="60.5" y="1012" font-size="7" font-weight="bold" fill="#000" textLength="17.3" lengthAdjust="spacingAndGlyphs">7:13</text>
<text x="80.5" y="1012" font-size="7" font-weight="bold" fill="#000" textLength="3" lengthAdjust="spacingAndGlyphs">-</text>
<text x="87.8" y="1012" font-size="7" font-weight="bold" fill="#000" textLength="49" lengthAdjust="spacingAndGlyphs">HEXAGON</text>
<text x="140.9" y="1012" font-size="7" font-weight="bold" fill="#000" textLength="25" lengthAdjust="spacingAndGlyphs">ZAR5</text>
<text x="168.7" y="1012" font-size="7" font-weight="bold" fill="#000" textLength="16.8" lengthAdjust="spacingAndGlyphs">V7.0</text>
<text x="191.8" y="1012" font-size="7" font-weight="bold" fill="#000" textLength="25" lengthAdjust="spacingAndGlyphs">#0136</text>
<text x="219" y="1012" font-size="7" font-weight="bold" fill="#000" textLength="3" lengthAdjust="spacingAndGlyphs">-</text>
<text x="227.2" y="1012" font-size="7" font-weight="bold" fill="#000" textLength="43" lengthAdjust="spacingAndGlyphs">HYUNDAI</text>
<text x="275" y="1012" font-size="7" font-weight="bold" fill="#000" textLength="25.7" lengthAdjust="spacingAndGlyphs">Heavy</text>
<text x="305.5" y="1012" font-size="7" font-weight="bold" fill="#000" textLength="38.2" lengthAdjust="spacingAndGlyphs">Industries</text>
<text x="346.5" y="1012" font-size="7" font-weight="bold" fill="#000" textLength="3" lengthAdjust="spacingAndGlyphs">-</text>
<text x="354.9" y="1012" font-size="7" font-weight="bold" fill="#000" textLength="160.8" lengthAdjust="spacingAndGlyphs">H:\APPS\TP\TRAIN\NIEMANNE.zr5</text></g>
</svg>
</body></html>
